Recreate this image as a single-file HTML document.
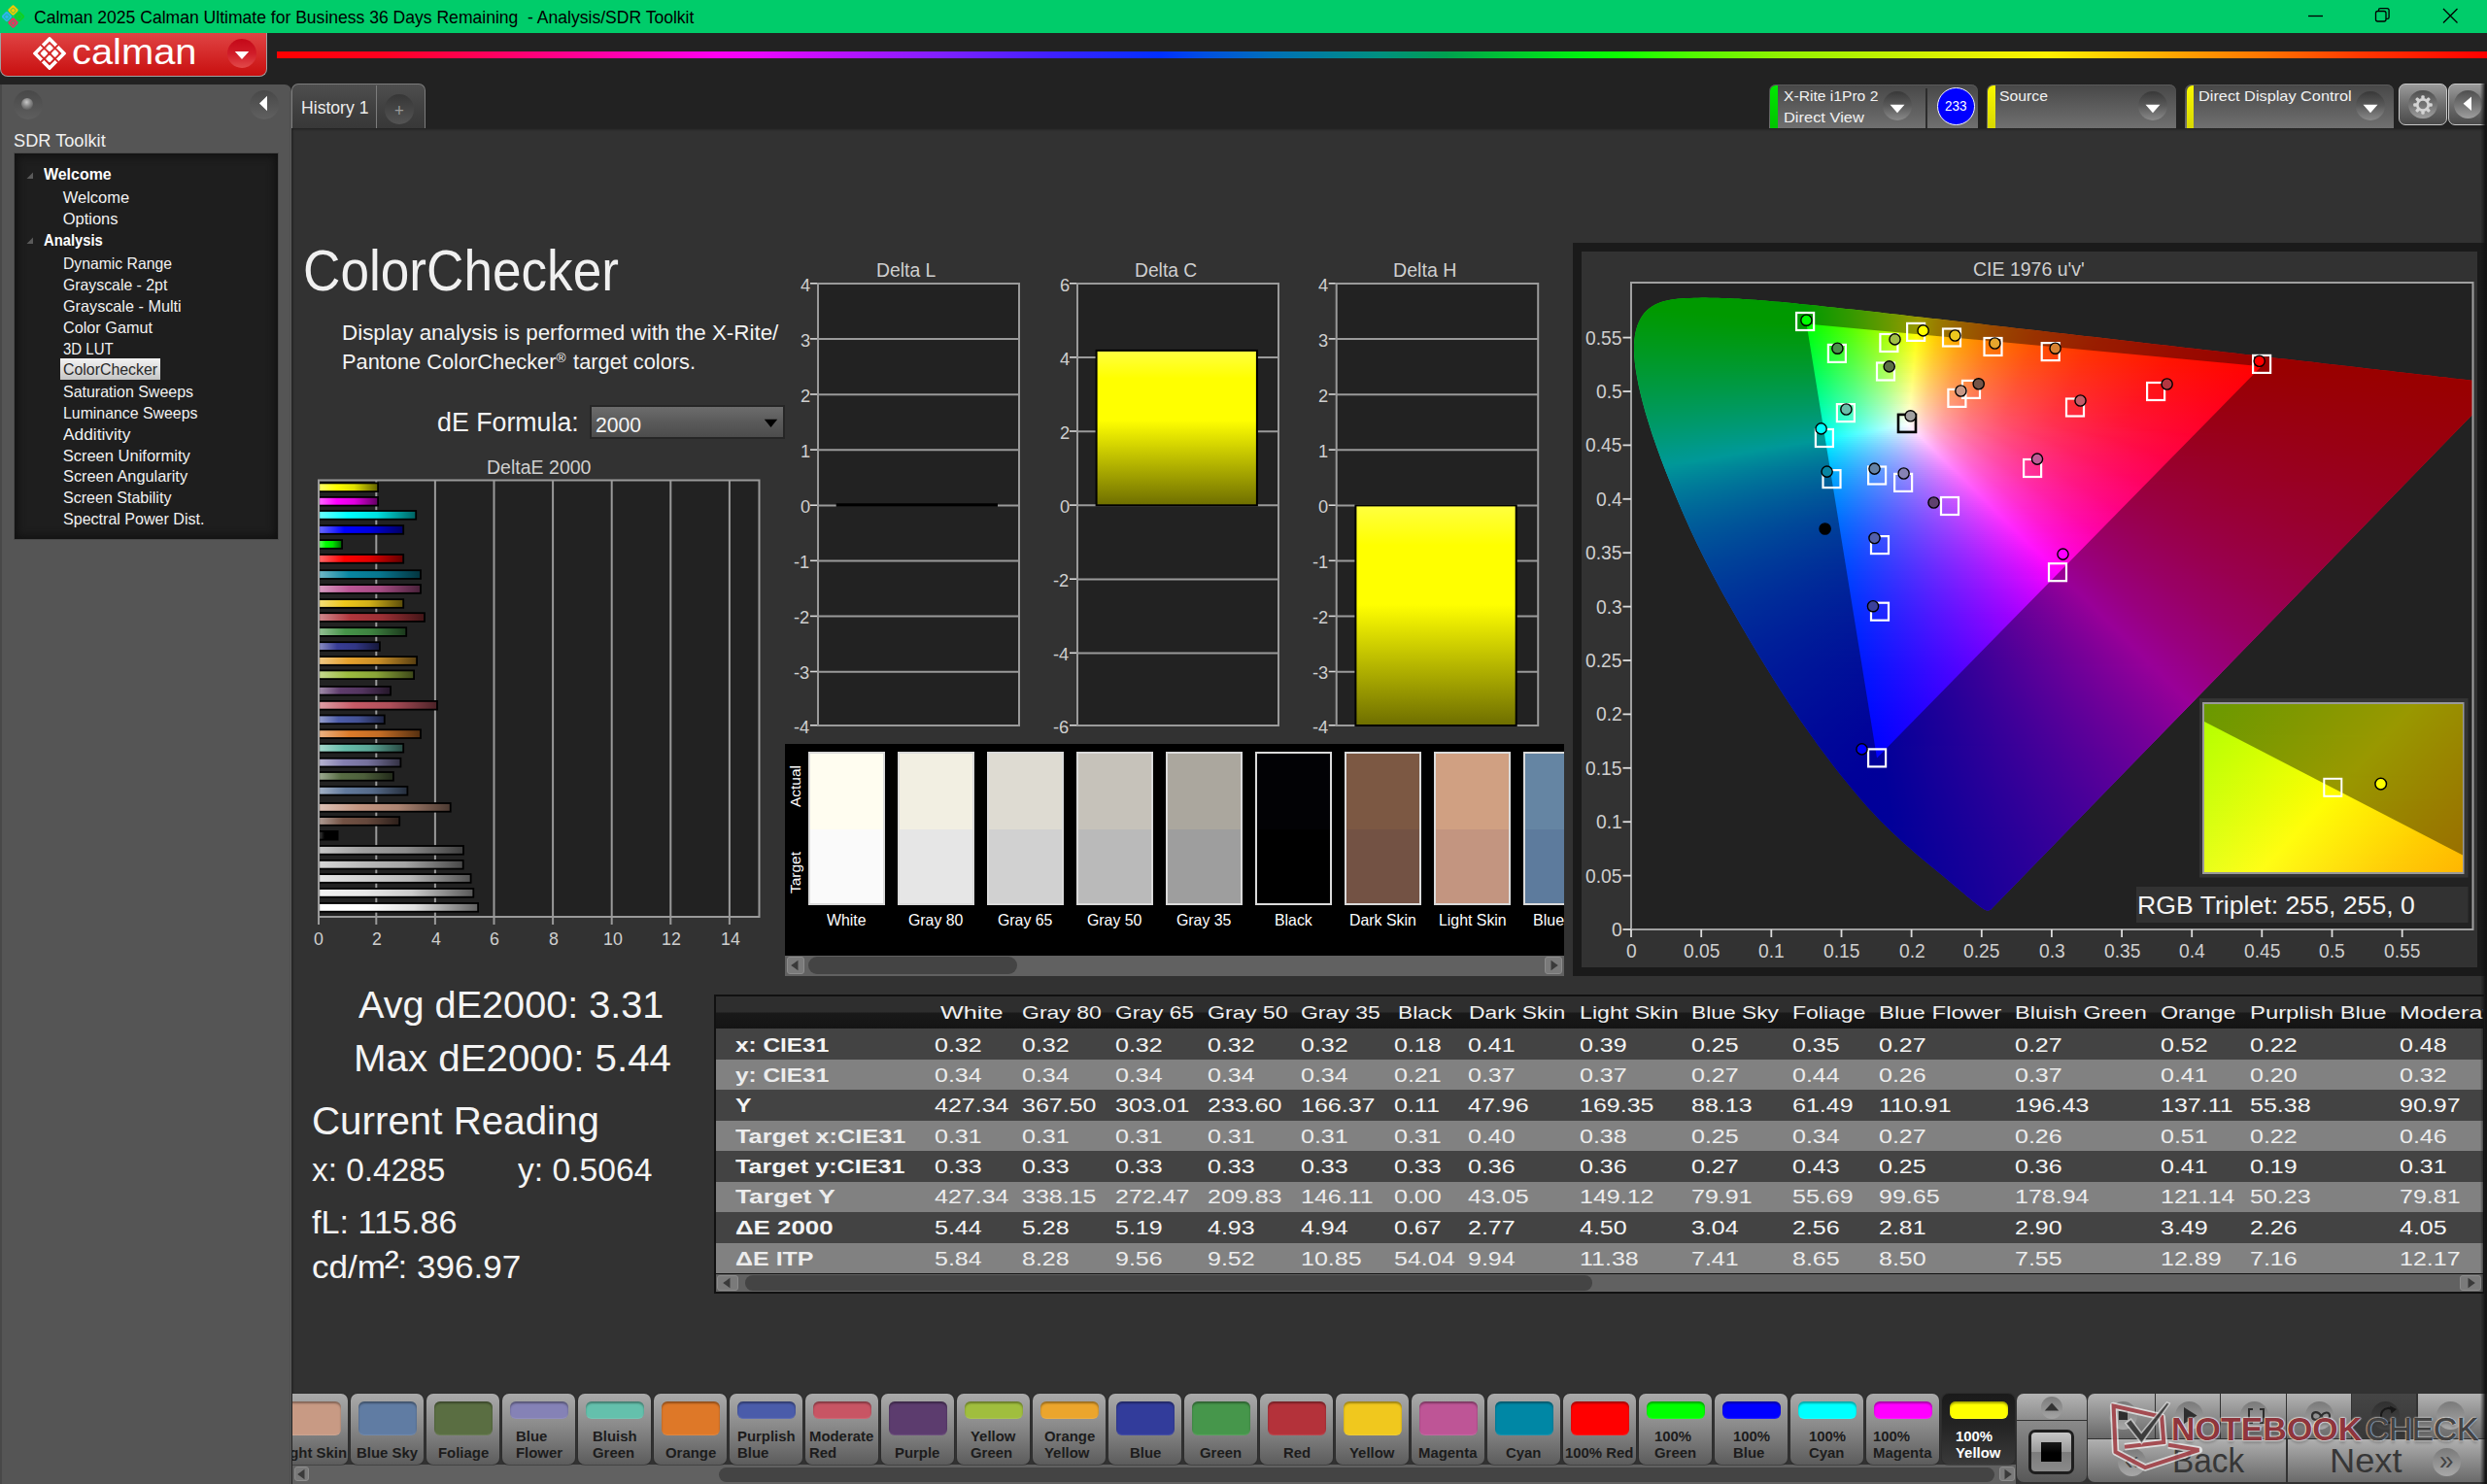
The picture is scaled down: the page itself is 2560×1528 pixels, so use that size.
<!DOCTYPE html>
<html lang="en"><head><meta charset="utf-8"><title>Calman 2025 - Analysis/SDR Toolkit</title>
<style>
html,body{margin:0;padding:0;background:#323232}
body{width:2560px;height:1528px;position:relative;overflow:hidden;font-family:"Liberation Sans",sans-serif}
#r{position:absolute;left:0;top:0;width:2560px;height:1528px;overflow:hidden}
#r div,#r svg{position:absolute}
.t{white-space:nowrap;line-height:1;transform-origin:0 0}
</style></head><body><div id="r">
<div style="left:0px;top:0px;width:2560px;height:34px;background:#00cc6a"></div>
<svg style="left:0px;top:3px" width="28" height="28" viewBox="0 0 28 28"><g transform="translate(13.5,14) scale(.92) rotate(45)"><rect x="-9.5" y="-9.5" width="9" height="9" rx="2" fill="#ffc800"/><rect x="0.5" y="-9.5" width="9" height="9" rx="2" fill="#10d020"/><rect x="-9.5" y="0.5" width="9" height="9" rx="2" fill="#30b4f0"/><rect x="0.5" y="0.5" width="9" height="9" rx="2" fill="#f03060"/><g fill="none" stroke="#00cc6a" stroke-width="1.2" opacity=".55"><rect x="-7" y="-7" width="4.5" height="4.5" rx="1"/><rect x="3" y="-7" width="4.5" height="4.5" rx="1"/><rect x="-7" y="3" width="4.5" height="4.5" rx="1"/><rect x="3" y="3" width="4.5" height="4.5" rx="1"/></g></g></svg>
<div class="t" style="left:35.00px;top:9.00px;font-size:18.5px;color:#000;transform:scaleX(0.9484);white-space:pre;">Calman 2025 Calman Ultimate for Business 36 Days Remaining  - Analysis/SDR Toolkit</div>
<svg style="left:2359.300px;top:-0.9px" width="200" height="34" viewBox="0 0 200 34" fill="none" stroke="#000" stroke-width="1.3"><path d="M17 17.5h15"/><rect x="86.5" y="12.5" width="10.5" height="10.5" rx="2"/><path d="M89.5 12.5v-1.2a1.6 1.6 0 0 1 1.6-1.6h7.2a1.8 1.8 0 0 1 1.8 1.8v7.2a1.6 1.6 0 0 1-1.6 1.6h-1.3"/><path d="M156 10l14.5 14.5M170.5 10L156 24.5"/></svg>
<div style="left:0px;top:34px;width:2560px;height:98px;background:#222"></div>
<div style="left:285px;top:53px;width:2275px;height:7px;background:linear-gradient(90deg,#ff0000 0%,#ff0020 4.8%,#ff0060 9.8%,#ff00a8 14.9%,#ff00f0 19.9%,#e808ff 21.9%,#c010ff 25%,#8020ff 30%,#4020ff 35%,#0030ff 40%,#0050e0 42%,#0070b8 45%,#009080 49.9%,#00a050 52.9%,#00c830 55.9%,#00f010 58.9%,#10ff00 61%,#50f800 64%,#90f000 68%,#b8f000 72%,#e0f000 76.1%,#fff000 80.1%,#ffd800 82.1%,#ffa000 86.2%,#ff7000 90.2%,#ff3800 94.2%,#ff1000 98.2%,#ff0000 100%)"></div>
<div style="left:0px;top:34px;width:272.8px;height:44px;background:linear-gradient(#e04444,#d62c2c 45%,#c80f0f);border:solid #a0a0a0;border-width:0 1.5px 1.5px 1px;border-radius:0 0 8px 8px"></div>
<svg style="left:31.4px;top:35.4px" width="40" height="40" viewBox="-20 -20 40 40"><g transform="rotate(45)"><path fill="#fff" fill-rule="evenodd" d="M-12.4 -11.2a1.2 1.2 0 0 1 1.2-1.2h22.400a1.2 1.2 0 0 1 1.2 1.2v22.400a1.2 1.2 0 0 1-1.2 1.2h-22.400a1.2 1.2 0 0 1-1.2-1.2zM-8.800 -8.800v17.600h17.600v-17.600z"/><g fill="#fff"><rect x="-6.900" y="-6.900" width="5.900" height="5.900" rx="1.1"/><rect x="1" y="-6.900" width="5.900" height="5.900" rx="1.1"/><rect x="-6.900" y="1" width="5.900" height="5.900" rx="1.1"/><rect x="1" y="1" width="5.900" height="5.900" rx="1.1"/></g><path d="M0-13V-8M0 13V8M-13 0H-8M13 0H8" stroke="#d42828" stroke-width="1.9"/></g></svg>
<div class="t" style="left:74.40px;top:35.60px;font-size:36.5px;color:#fff;transform:scaleX(1.0921);">calman</div>
<div style="left:233.5px;top:40px;width:30px;height:30px;border-radius:50%;background:linear-gradient(#c40818,#d01c28 50%,#e24a4a)"></div>
<svg style="left:241px;top:52px" width="16" height="10" viewBox="0 0 16 10"><path d="M0.8 1h14.4L8 9z" fill="#fff"/></svg>
<div style="left:0px;top:87px;width:300px;height:1441px;background:#555;border-radius:0 7px 0 0"></div>
<div style="left:0px;top:87px;width:2px;height:1441px;background:#484848"></div>
<div style="left:297.6px;top:94px;width:1.4px;height:1434px;background:#4e4e4e"></div>
<div style="left:299px;top:94px;width:1px;height:1434px;background:#5a5a5a"></div>
<div style="left:13.5px;top:92.5px;width:30px;height:30px;border-radius:50%;background:linear-gradient(#484848,#5e5e5e)"></div>
<div style="left:21.5px;top:100.5px;width:12.5px;height:12.5px;border-radius:50%;background:radial-gradient(circle at 45% 35%,#c8c8c8,#8a8a8a 40%,#555 85%)"></div>
<div style="left:256.5px;top:92.5px;width:30px;height:30px;border-radius:50%;background:linear-gradient(#484848,#606060)"></div>
<svg style="left:266px;top:98px" width="10" height="17" viewBox="0 0 10 17"><path d="M9 0.8v15.4L1 8.5z" fill="#fff"/></svg>
<div class="t" style="left:13.80px;top:135.00px;font-size:19px;color:#f0f0f0;transform:scaleX(0.9576);">SDR Toolkit</div>
<div style="left:14px;top:156.5px;width:273px;height:399px;background:#1e1e1e;box-shadow:inset 0 0 9px 3px #111;border:1.5px solid #4a4a4a;box-sizing:border-box"></div>
<div class="t" style="left:45.10px;top:171.30px;font-size:16.5px;color:#fff;font-weight:700;transform:scaleX(0.9661);">Welcome</div>
<svg style="left:27px;top:176.7px" width="8" height="8" viewBox="0 0 8 8"><path d="M7 0.5V7H0.5z" fill="#5a5a5a"/></svg>
<div class="t" style="left:64.70px;top:195.20px;font-size:16.5px;color:#f2f2f2;">Welcome</div>
<div class="t" style="left:64.70px;top:217.10px;font-size:16.5px;color:#f2f2f2;">Options</div>
<div class="t" style="left:45.10px;top:239.00px;font-size:16.5px;color:#fff;font-weight:700;transform:scaleX(0.8959);">Analysis</div>
<svg style="left:27px;top:244.4px" width="8" height="8" viewBox="0 0 8 8"><path d="M7 0.5V7H0.5z" fill="#5a5a5a"/></svg>
<div class="t" style="left:64.70px;top:262.90px;font-size:16.5px;color:#f2f2f2;transform:scaleX(0.9540);">Dynamic Range</div>
<div class="t" style="left:64.70px;top:284.80px;font-size:16.5px;color:#f2f2f2;transform:scaleX(0.9589);">Grayscale - 2pt</div>
<div class="t" style="left:64.70px;top:306.70px;font-size:16.5px;color:#f2f2f2;transform:scaleX(0.9826);">Grayscale - Multi</div>
<div class="t" style="left:64.70px;top:328.90px;font-size:16.5px;color:#f2f2f2;transform:scaleX(0.9829);">Color Gamut</div>
<div class="t" style="left:64.70px;top:350.80px;font-size:16.5px;color:#f2f2f2;transform:scaleX(0.9075);">3D LUT</div>
<div style="left:61.5px;top:369px;width:103.5px;height:21.5px;background:linear-gradient(#f2f2f2,#dcdcdc 55%,#c4c4c4)"></div>
<div class="t" style="left:64.70px;top:372.40px;font-size:16.5px;color:#2a2a2a;transform:scaleX(0.9628);">ColorChecker</div>
<div class="t" style="left:64.70px;top:394.90px;font-size:16.5px;color:#f2f2f2;transform:scaleX(0.9675);">Saturation Sweeps</div>
<div class="t" style="left:64.70px;top:416.80px;font-size:16.5px;color:#f2f2f2;transform:scaleX(0.9611);">Luminance Sweeps</div>
<div class="t" style="left:64.70px;top:438.70px;font-size:16.5px;color:#f2f2f2;transform:scaleX(1.0500);">Additivity</div>
<div class="t" style="left:64.70px;top:460.60px;font-size:16.5px;color:#f2f2f2;">Screen Uniformity</div>
<div class="t" style="left:64.70px;top:482.10px;font-size:16.5px;color:#f2f2f2;transform:scaleX(0.9903);">Screen Angularity</div>
<div class="t" style="left:64.70px;top:503.90px;font-size:16.5px;color:#f2f2f2;transform:scaleX(0.9717);">Screen Stability</div>
<div class="t" style="left:64.70px;top:525.80px;font-size:16.5px;color:#f2f2f2;transform:scaleX(0.9732);">Spectral Power Dist.</div>
<div style="left:299.7px;top:86.2px;width:138.8px;height:45.8px;background:linear-gradient(#4e4e4e,#3e3e3e 65%,#383838);border:1.5px solid #7c7c7c;border-bottom:none;border-radius:7px 7px 0 0;box-sizing:border-box"></div>
<div style="left:386.6px;top:88px;width:1.4px;height:44px;background:#7c7c7c"></div>
<div class="t" style="left:309.80px;top:101.20px;font-size:19px;color:#ececec;transform:scaleX(0.9267);">History 1</div>
<div style="left:395.8px;top:97px;width:30.6px;height:30.6px;border-radius:50%;background:linear-gradient(#363636,#454545 50%,#545454)"></div>
<div class="t" style="left:406.27px;top:105.60px;font-size:17.5px;color:#9a9a9a;transform:scaleX(0.9615);">+</div>
<div style="left:300px;top:132px;width:2262px;height:1398px;background:#323232;box-shadow:inset 1.5px 1.5px 1.5px #222"></div>
<div style="left:1820.8px;top:86.5px;width:215px;height:45.5px;background:linear-gradient(#474747,#5c5c5c 50%,#707070);border-radius:7px 7px 0 0;box-shadow:inset 0 1px 0 #5a5a5a"></div>
<div style="left:1822.3px;top:88px;width:7.5px;height:44px;background:linear-gradient(#00e800,#00c400);border-radius:6px 0 0 0"></div>
<div style="left:1938.2px;top:94px;width:30px;height:30px;border-radius:50%;background:linear-gradient(#383838,#5a5a5a 50%,#8a8a8a)"></div>
<svg style="left:1945.2px;top:106.5px" width="16" height="10" viewBox="0 0 16 10"><path d="M0.5 0.8h15L8 9.2z" fill="#fff"/></svg>
<div class="t" style="left:1835.50px;top:90.70px;font-size:15px;color:#f2f2f2;transform:scaleX(1.0428);">X-Rite i1Pro 2</div>
<div class="t" style="left:1835.50px;top:112.80px;font-size:15px;color:#f2f2f2;transform:scaleX(1.0957);">Direct View</div>
<div style="left:1982px;top:91px;width:1.5px;height:41px;background:#2c2c2c"></div>
<div style="left:1993.5px;top:89.5px;width:39.5px;height:39.5px;border-radius:50%;background:#0000ff;border:1.5px solid #f4f4ff;box-sizing:border-box"></div>
<div class="t" style="left:2002.22px;top:101.80px;font-size:14px;color:#fff;transform:scaleX(0.9615);">233</div>
<div style="left:2044.5px;top:86.5px;width:195.8px;height:45.5px;background:linear-gradient(#474747,#5c5c5c 50%,#707070);border-radius:7px 7px 0 0;box-shadow:inset 0 1px 0 #5a5a5a"></div>
<div style="left:2046px;top:88px;width:7.5px;height:44px;background:linear-gradient(#f8f800,#d8d800);border-radius:6px 0 0 0"></div>
<div style="left:2201px;top:94px;width:30px;height:30px;border-radius:50%;background:linear-gradient(#383838,#5a5a5a 50%,#8a8a8a)"></div>
<svg style="left:2208px;top:106.5px" width="16" height="10" viewBox="0 0 16 10"><path d="M0.5 0.8h15L8 9.2z" fill="#fff"/></svg>
<div class="t" style="left:2058.00px;top:90.70px;font-size:15px;color:#f2f2f2;transform:scaleX(1.0526);">Source</div>
<div style="left:2249px;top:86.5px;width:214.6px;height:45.5px;background:linear-gradient(#474747,#5c5c5c 50%,#707070);border-radius:7px 7px 0 0;box-shadow:inset 0 1px 0 #5a5a5a"></div>
<div style="left:2250.5px;top:88px;width:7.5px;height:44px;background:linear-gradient(#f8f800,#d8d800);border-radius:6px 0 0 0"></div>
<div style="left:2425.2px;top:94px;width:30px;height:30px;border-radius:50%;background:linear-gradient(#383838,#5a5a5a 50%,#8a8a8a)"></div>
<svg style="left:2432.2px;top:106.5px" width="16" height="10" viewBox="0 0 16 10"><path d="M0.5 0.8h15L8 9.2z" fill="#fff"/></svg>
<div class="t" style="left:2263.00px;top:90.70px;font-size:15px;color:#f2f2f2;transform:scaleX(1.0869);">Direct Display Control</div>
<div style="left:2469px;top:86.2px;width:50px;height:42.4px;border-radius:7px;border:1.5px solid #c8c8c8;box-sizing:border-box;background:linear-gradient(#9a9a9a,#6e6e6e 50%,#4a4a4a)"></div>
<div style="left:2479.2px;top:92.9px;width:29.6px;height:29.6px;border-radius:50%;background:linear-gradient(#4e4e4e,#747474 50%,#9e9e9e)"></div>
<svg style="left:2482px;top:95.700px" width="24" height="24" viewBox="-12 -12 24 24"><g fill="#d4d4d4"><rect x="-1.700" y="-9.800" width="3.400" height="4" rx="1.200" transform="rotate(0)"/><rect x="-1.700" y="-9.800" width="3.400" height="4" rx="1.200" transform="rotate(45)"/><rect x="-1.700" y="-9.800" width="3.400" height="4" rx="1.200" transform="rotate(90)"/><rect x="-1.700" y="-9.800" width="3.400" height="4" rx="1.200" transform="rotate(135)"/><rect x="-1.700" y="-9.800" width="3.400" height="4" rx="1.200" transform="rotate(180)"/><rect x="-1.700" y="-9.800" width="3.400" height="4" rx="1.200" transform="rotate(225)"/><rect x="-1.700" y="-9.800" width="3.400" height="4" rx="1.200" transform="rotate(270)"/><rect x="-1.700" y="-9.800" width="3.400" height="4" rx="1.200" transform="rotate(315)"/></g><circle r="5.700" fill="none" stroke="#d4d4d4" stroke-width="2.700"/></svg>
<div style="left:2520px;top:86.2px;width:50px;height:42.4px;border-radius:7px;border:1.5px solid #c8c8c8;box-sizing:border-box;background:linear-gradient(#9a9a9a,#6e6e6e 50%,#4a4a4a)"></div>
<div style="left:2525.5px;top:92.9px;width:29.6px;height:29.6px;border-radius:50%;background:linear-gradient(#4e4e4e,#747474 50%,#9e9e9e)"></div>
<svg style="left:2535.300px;top:99px" width="10" height="16" viewBox="0 0 10 16"><path d="M9 0.500v14.500L0.600 7.700z" fill="#fff"/></svg>
<div class="t" style="left:312.30px;top:249.20px;font-size:59.5px;color:#f0f0f0;transform:scaleX(0.8932);">ColorChecker</div>
<div class="t" style="left:352.00px;top:332.80px;font-size:21.5px;color:#f4f4f4;transform:scaleX(1.0417);">Display analysis is performed with the X-Rite/</div>
<div class="t" style="left:352.00px;top:362.70px;font-size:21.5px;color:#f4f4f4;transform:scaleX(1.0135);">Pantone ColorChecker<span style="font-size:62%;line-height:0;position:relative;top:-.5em;letter-spacing:.12em">®</span> target colors.</div>
<div class="t" style="left:450.10px;top:422.00px;font-size:27px;color:#f4f4f4;transform:scaleX(0.9912);">dE Formula:</div>
<div style="left:606.5px;top:417px;width:201px;height:34.5px;background:linear-gradient(#6c6c6c,#5a5a5a 50%,#4c4c4c);border:2px solid #262626;box-sizing:border-box"></div>
<div class="t" style="left:613.00px;top:426.60px;font-size:22.5px;color:#f4f4f4;transform:scaleX(0.9400);">2000</div>
<svg style="left:786px;top:430.5px" width="15" height="10" viewBox="0 0 15 10"><path d="M0.8 0.8h13.4L7.5 9z" fill="#000"/></svg>
<div class="t" style="left:501.30px;top:471.00px;font-size:20px;color:#cfcfcf;transform:scaleX(0.9764);">DeltaE 2000</div>
<svg style="left:0;top:0" width="2560" height="1528" viewBox="0 0 2560 1528"><defs><linearGradient id="b0"><stop offset="0" stop-color="rgb(255, 255, 107)"/><stop offset=".3" stop-color="rgb(255, 255, 0)"/><stop offset=".6" stop-color="rgb(224, 224, 0)"/><stop offset="1" stop-color="rgb(97, 97, 0)"/></linearGradient><linearGradient id="b1"><stop offset="0" stop-color="rgb(255, 107, 255)"/><stop offset=".3" stop-color="rgb(255, 0, 255)"/><stop offset=".6" stop-color="rgb(224, 0, 224)"/><stop offset="1" stop-color="rgb(97, 0, 97)"/></linearGradient><linearGradient id="b2"><stop offset="0" stop-color="rgb(107, 255, 255)"/><stop offset=".3" stop-color="rgb(0, 255, 255)"/><stop offset=".6" stop-color="rgb(0, 224, 224)"/><stop offset="1" stop-color="rgb(0, 97, 97)"/></linearGradient><linearGradient id="b3"><stop offset="0" stop-color="rgb(107, 107, 255)"/><stop offset=".3" stop-color="rgb(0, 0, 255)"/><stop offset=".6" stop-color="rgb(0, 0, 224)"/><stop offset="1" stop-color="rgb(0, 0, 97)"/></linearGradient><linearGradient id="b4"><stop offset="0" stop-color="rgb(107, 255, 107)"/><stop offset=".3" stop-color="rgb(0, 255, 0)"/><stop offset=".6" stop-color="rgb(0, 224, 0)"/><stop offset="1" stop-color="rgb(0, 97, 0)"/></linearGradient><linearGradient id="b5"><stop offset="0" stop-color="rgb(255, 107, 107)"/><stop offset=".3" stop-color="rgb(255, 0, 0)"/><stop offset=".6" stop-color="rgb(224, 0, 0)"/><stop offset="1" stop-color="rgb(97, 0, 0)"/></linearGradient><linearGradient id="b6"><stop offset="0" stop-color="rgb(112, 184, 200)"/><stop offset=".3" stop-color="rgb(8, 133, 161)"/><stop offset=".6" stop-color="rgb(7, 117, 142)"/><stop offset="1" stop-color="rgb(3, 51, 61)"/></linearGradient><linearGradient id="b7"><stop offset="0" stop-color="rgb(216, 157, 194)"/><stop offset=".3" stop-color="rgb(187, 86, 149)"/><stop offset=".6" stop-color="rgb(165, 76, 131)"/><stop offset="1" stop-color="rgb(71, 33, 57)"/></linearGradient><linearGradient id="b8"><stop offset="0" stop-color="rgb(245, 223, 123)"/><stop offset=".3" stop-color="rgb(238, 200, 27)"/><stop offset=".6" stop-color="rgb(209, 176, 24)"/><stop offset="1" stop-color="rgb(90, 76, 10)"/></linearGradient><linearGradient id="b9"><stop offset="0" stop-color="rgb(209, 138, 142)"/><stop offset=".3" stop-color="rgb(175, 54, 60)"/><stop offset=".6" stop-color="rgb(154, 48, 53)"/><stop offset="1" stop-color="rgb(66, 21, 23)"/></linearGradient><linearGradient id="b10"><stop offset="0" stop-color="rgb(148, 193, 149)"/><stop offset=".3" stop-color="rgb(70, 148, 73)"/><stop offset=".6" stop-color="rgb(62, 130, 64)"/><stop offset="1" stop-color="rgb(27, 56, 28)"/></linearGradient><linearGradient id="b11"><stop offset="0" stop-color="rgb(140, 142, 194)"/><stop offset=".3" stop-color="rgb(56, 61, 150)"/><stop offset=".6" stop-color="rgb(49, 54, 132)"/><stop offset="1" stop-color="rgb(21, 23, 57)"/></linearGradient><linearGradient id="b12"><stop offset="0" stop-color="rgb(240, 201, 134)"/><stop offset=".3" stop-color="rgb(230, 162, 46)"/><stop offset=".6" stop-color="rgb(202, 143, 40)"/><stop offset="1" stop-color="rgb(87, 62, 17)"/></linearGradient><linearGradient id="b13"><stop offset="0" stop-color="rgb(198, 216, 144)"/><stop offset=".3" stop-color="rgb(157, 188, 64)"/><stop offset=".6" stop-color="rgb(138, 165, 56)"/><stop offset="1" stop-color="rgb(60, 71, 24)"/></linearGradient><linearGradient id="b14"><stop offset="0" stop-color="rgb(162, 142, 170)"/><stop offset=".3" stop-color="rgb(94, 60, 108)"/><stop offset=".6" stop-color="rgb(83, 53, 95)"/><stop offset="1" stop-color="rgb(36, 23, 41)"/></linearGradient><linearGradient id="b15"><stop offset="0" stop-color="rgb(222, 159, 166)"/><stop offset=".3" stop-color="rgb(198, 90, 102)"/><stop offset=".6" stop-color="rgb(174, 79, 90)"/><stop offset="1" stop-color="rgb(75, 34, 39)"/></linearGradient><linearGradient id="b16"><stop offset="0" stop-color="rgb(151, 160, 205)"/><stop offset=".3" stop-color="rgb(76, 92, 168)"/><stop offset=".6" stop-color="rgb(67, 81, 148)"/><stop offset="1" stop-color="rgb(29, 35, 64)"/></linearGradient><linearGradient id="b17"><stop offset="0" stop-color="rgb(235, 178, 131)"/><stop offset=".3" stop-color="rgb(220, 123, 42)"/><stop offset=".6" stop-color="rgb(194, 108, 37)"/><stop offset="1" stop-color="rgb(84, 47, 16)"/></linearGradient><linearGradient id="b18"><stop offset="0" stop-color="rgb(167, 217, 206)"/><stop offset=".3" stop-color="rgb(103, 189, 170)"/><stop offset=".6" stop-color="rgb(91, 166, 150)"/><stop offset="1" stop-color="rgb(39, 72, 65)"/></linearGradient><linearGradient id="b19"><stop offset="0" stop-color="rgb(184, 181, 210)"/><stop offset=".3" stop-color="rgb(133, 128, 177)"/><stop offset=".6" stop-color="rgb(117, 113, 156)"/><stop offset="1" stop-color="rgb(51, 49, 67)"/></linearGradient><linearGradient id="b20"><stop offset="0" stop-color="rgb(158, 170, 146)"/><stop offset=".3" stop-color="rgb(87, 108, 67)"/><stop offset=".6" stop-color="rgb(77, 95, 59)"/><stop offset="1" stop-color="rgb(33, 41, 25)"/></linearGradient><linearGradient id="b21"><stop offset="0" stop-color="rgb(164, 178, 198)"/><stop offset=".3" stop-color="rgb(98, 122, 157)"/><stop offset=".6" stop-color="rgb(86, 107, 138)"/><stop offset="1" stop-color="rgb(37, 46, 60)"/></linearGradient><linearGradient id="b22"><stop offset="0" stop-color="rgb(221, 194, 182)"/><stop offset=".3" stop-color="rgb(196, 150, 130)"/><stop offset=".6" stop-color="rgb(172, 132, 114)"/><stop offset="1" stop-color="rgb(74, 57, 49)"/></linearGradient><linearGradient id="b23"><stop offset="0" stop-color="rgb(174, 155, 147)"/><stop offset=".3" stop-color="rgb(115, 82, 68)"/><stop offset=".6" stop-color="rgb(101, 72, 60)"/><stop offset="1" stop-color="rgb(44, 31, 26)"/></linearGradient><linearGradient id="b24"><stop offset="0" stop-color="rgb(70, 70, 70)"/><stop offset=".3" stop-color="rgb(0, 0, 0)"/><stop offset=".6" stop-color="rgb(0, 0, 0)"/><stop offset="1" stop-color="rgb(0, 0, 0)"/></linearGradient><linearGradient id="b25"><stop offset="0" stop-color="rgb(200, 200, 200)"/><stop offset=".3" stop-color="rgb(160, 160, 160)"/><stop offset=".6" stop-color="rgb(141, 141, 141)"/><stop offset="1" stop-color="rgb(61, 61, 61)"/></linearGradient><linearGradient id="b26"><stop offset="0" stop-color="rgb(215, 215, 215)"/><stop offset=".3" stop-color="rgb(186, 186, 186)"/><stop offset=".6" stop-color="rgb(164, 164, 164)"/><stop offset="1" stop-color="rgb(71, 71, 71)"/></linearGradient><linearGradient id="b27"><stop offset="0" stop-color="rgb(229, 229, 229)"/><stop offset=".3" stop-color="rgb(210, 210, 210)"/><stop offset=".6" stop-color="rgb(185, 185, 185)"/><stop offset="1" stop-color="rgb(80, 80, 80)"/></linearGradient><linearGradient id="b28"><stop offset="0" stop-color="rgb(242, 242, 242)"/><stop offset=".3" stop-color="rgb(232, 232, 232)"/><stop offset=".6" stop-color="rgb(204, 204, 204)"/><stop offset="1" stop-color="rgb(88, 88, 88)"/></linearGradient><linearGradient id="b29"><stop offset="0" stop-color="rgb(255, 255, 255)"/><stop offset=".3" stop-color="rgb(255, 255, 255)"/><stop offset=".6" stop-color="rgb(224, 224, 224)"/><stop offset="1" stop-color="rgb(97, 97, 97)"/></linearGradient></defs><rect x="328" y="494.5" width="453.5" height="449.5" fill="#222"/><g stroke="#9a9a9a" stroke-width="2"><path d="M387.3 495V952"/><path d="M447.9 495V952"/><path d="M508.5 495V952"/><path d="M569.1 495V952"/><path d="M629.7 495V952"/><path d="M690.3 495V952"/><path d="M750.9 495V952"/><path d="M328 944V952"/><rect x="328" y="494.5" width="453.5" height="449.5" fill="none"/></g><rect x="328.2" y="497.4" width="60.9" height="8.7" fill="url(#b0)" stroke="#000" stroke-width="1.8"/><rect x="328.2" y="511.9" width="60.9" height="8.7" fill="url(#b1)" stroke="#000" stroke-width="1.8"/><rect x="328.2" y="526.0" width="100.0" height="8.7" fill="url(#b2)" stroke="#000" stroke-width="1.8"/><rect x="328.2" y="541.1" width="87.0" height="8.7" fill="url(#b3)" stroke="#000" stroke-width="1.8"/><rect x="328.2" y="556.1" width="23.9" height="8.7" fill="url(#b4)" stroke="#000" stroke-width="1.8"/><rect x="328.2" y="571.0" width="87.0" height="8.7" fill="url(#b5)" stroke="#000" stroke-width="1.8"/><rect x="328.2" y="587.2" width="104.8" height="8.7" fill="url(#b6)" stroke="#000" stroke-width="1.8"/><rect x="328.2" y="602.1" width="104.8" height="8.7" fill="url(#b7)" stroke="#000" stroke-width="1.8"/><rect x="328.2" y="617.1" width="87.0" height="8.7" fill="url(#b8)" stroke="#000" stroke-width="1.8"/><rect x="328.2" y="631.2" width="108.8" height="8.7" fill="url(#b9)" stroke="#000" stroke-width="1.8"/><rect x="328.2" y="646.2" width="90.0" height="8.7" fill="url(#b10)" stroke="#000" stroke-width="1.8"/><rect x="328.2" y="661.2" width="62.7" height="8.7" fill="url(#b11)" stroke="#000" stroke-width="1.8"/><rect x="328.2" y="676.1" width="100.9" height="8.7" fill="url(#b12)" stroke="#000" stroke-width="1.8"/><rect x="328.2" y="690.4" width="97.9" height="8.7" fill="url(#b13)" stroke="#000" stroke-width="1.8"/><rect x="328.2" y="706.9" width="73.9" height="8.7" fill="url(#b14)" stroke="#000" stroke-width="1.8"/><rect x="328.2" y="721.9" width="121.8" height="8.7" fill="url(#b15)" stroke="#000" stroke-width="1.8"/><rect x="328.2" y="736.5" width="67.6" height="8.7" fill="url(#b16)" stroke="#000" stroke-width="1.8"/><rect x="328.2" y="751.3" width="104.8" height="8.7" fill="url(#b17)" stroke="#000" stroke-width="1.8"/><rect x="328.2" y="765.9" width="87.0" height="8.7" fill="url(#b18)" stroke="#000" stroke-width="1.8"/><rect x="328.2" y="780.8" width="84.2" height="8.7" fill="url(#b19)" stroke="#000" stroke-width="1.8"/><rect x="328.2" y="795.0" width="76.7" height="8.7" fill="url(#b20)" stroke="#000" stroke-width="1.8"/><rect x="328.2" y="809.9" width="91.2" height="8.7" fill="url(#b21)" stroke="#000" stroke-width="1.8"/><rect x="328.2" y="827.0" width="135.5" height="8.7" fill="url(#b22)" stroke="#000" stroke-width="1.8"/><rect x="328.2" y="841.1" width="83.0" height="8.7" fill="url(#b23)" stroke="#000" stroke-width="1.8"/><rect x="328.2" y="855.9" width="19.4" height="8.7" fill="url(#b24)" stroke="#000" stroke-width="1.8"/><rect x="328.2" y="871.0" width="148.8" height="8.7" fill="url(#b25)" stroke="#000" stroke-width="1.8"/><rect x="328.2" y="885.9" width="148.5" height="8.7" fill="url(#b26)" stroke="#000" stroke-width="1.8"/><rect x="328.2" y="900.1" width="156.4" height="8.7" fill="url(#b27)" stroke="#000" stroke-width="1.8"/><rect x="328.2" y="915.0" width="159.1" height="8.7" fill="url(#b28)" stroke="#000" stroke-width="1.8"/><rect x="328.2" y="930.0" width="163.9" height="8.7" fill="url(#b29)" stroke="#000" stroke-width="1.8"/><path d="M328 494.5V944" stroke="#9a9a9a" stroke-width="2"/></svg>
<div class="t" style="left:322.67px;top:957.60px;font-size:18.5px;color:#cfcfcf;transform:scaleX(0.9615);">0</div>
<div class="t" style="left:383.27px;top:957.60px;font-size:18.5px;color:#cfcfcf;transform:scaleX(0.9615);">2</div>
<div class="t" style="left:443.87px;top:957.60px;font-size:18.5px;color:#cfcfcf;transform:scaleX(0.9615);">4</div>
<div class="t" style="left:504.47px;top:957.60px;font-size:18.5px;color:#cfcfcf;transform:scaleX(0.9615);">6</div>
<div class="t" style="left:565.07px;top:957.60px;font-size:18.5px;color:#cfcfcf;transform:scaleX(0.9615);">8</div>
<div class="t" style="left:620.74px;top:957.60px;font-size:18.5px;color:#cfcfcf;transform:scaleX(0.9615);">10</div>
<div class="t" style="left:681.34px;top:957.60px;font-size:18.5px;color:#cfcfcf;transform:scaleX(0.9615);">12</div>
<div class="t" style="left:741.94px;top:957.60px;font-size:18.5px;color:#cfcfcf;transform:scaleX(0.9615);">14</div>
<div class="t" style="left:902.40px;top:268.30px;font-size:20.5px;color:#cfcfcf;transform:scaleX(0.9446);">Delta L</div>
<svg style="left:0;top:0" width="2560" height="1528" viewBox="0 0 2560 1528"><rect x="842" y="292" width="207" height="455" fill="#222"/><g stroke="#9a9a9a" stroke-width="2"><path d="M842 691.7H1049"/><path d="M842 634.6H1049"/><path d="M842 577.5H1049"/><path d="M842 520.4H1049"/><path d="M842 463.3H1049"/><path d="M842 406.2H1049"/><path d="M842 349.1H1049"/><rect x="842" y="292" width="207" height="455" fill="none"/></g><g stroke="#d8d8d8" stroke-width="1.6"><path d="M834 746.8H841"/><path d="M834 691.5H841"/><path d="M834 634.4H841"/><path d="M834 577.3H841"/><path d="M834 520.2H841"/><path d="M834 463.1H841"/><path d="M834 406.0H841"/><path d="M834 348.9H841"/><path d="M834 291.8H841"/></g><path d="M860.7 520H1027" stroke="#000" stroke-width="3.4"/></svg>
<div class="t" style="left:817.45px;top:738.50px;font-size:19px;color:#cfcfcf;transform:scaleX(0.9615);">-4</div>
<div class="t" style="left:817.45px;top:683.20px;font-size:19px;color:#cfcfcf;transform:scaleX(0.9615);">-3</div>
<div class="t" style="left:817.45px;top:626.10px;font-size:19px;color:#cfcfcf;transform:scaleX(0.9615);">-2</div>
<div class="t" style="left:817.45px;top:569.00px;font-size:19px;color:#cfcfcf;transform:scaleX(0.9615);">-1</div>
<div class="t" style="left:823.70px;top:511.90px;font-size:19px;color:#cfcfcf;transform:scaleX(0.9615);">0</div>
<div class="t" style="left:823.70px;top:454.80px;font-size:19px;color:#cfcfcf;transform:scaleX(0.9615);">1</div>
<div class="t" style="left:823.70px;top:397.70px;font-size:19px;color:#cfcfcf;transform:scaleX(0.9615);">2</div>
<div class="t" style="left:823.70px;top:340.60px;font-size:19px;color:#cfcfcf;transform:scaleX(0.9615);">3</div>
<div class="t" style="left:823.70px;top:283.50px;font-size:19px;color:#cfcfcf;transform:scaleX(0.9615);">4</div>
<div class="t" style="left:1168.00px;top:268.30px;font-size:20.5px;color:#cfcfcf;transform:scaleX(0.9392);">Delta C</div>
<svg style="left:0;top:0" width="2560" height="1528" viewBox="0 0 2560 1528"><rect x="1109" y="292" width="207" height="455" fill="#222"/><g stroke="#9a9a9a" stroke-width="2"><path d="M1109 672.5H1316"/><path d="M1109 596.4H1316"/><path d="M1109 520.3H1316"/><path d="M1109 444.2H1316"/><path d="M1109 368.1H1316"/><rect x="1109" y="292" width="207" height="455" fill="none"/></g><g stroke="#d8d8d8" stroke-width="1.6"><path d="M1101 746.8H1108"/><path d="M1101 672.3H1108"/><path d="M1101 596.2H1108"/><path d="M1101 520.1H1108"/><path d="M1101 444.0H1108"/><path d="M1101 367.9H1108"/><path d="M1101 291.8H1108"/></g><defs><linearGradient id="dgC" x1="0" y1="0" x2="0" y2="1"><stop offset="0" stop-color="#ffff40"/><stop offset=".18" stop-color="#ffff00"/><stop offset=".45" stop-color="#ffff00"/><stop offset="1" stop-color="#6e6e00"/></linearGradient></defs><rect x="1128.6" y="360.9" width="165.3" height="159.4" fill="url(#dgC)" stroke="#000" stroke-width="2"/></svg>
<div class="t" style="left:1084.45px;top:738.50px;font-size:19px;color:#cfcfcf;transform:scaleX(0.9615);">-6</div>
<div class="t" style="left:1084.45px;top:664.00px;font-size:19px;color:#cfcfcf;transform:scaleX(0.9615);">-4</div>
<div class="t" style="left:1084.45px;top:587.90px;font-size:19px;color:#cfcfcf;transform:scaleX(0.9615);">-2</div>
<div class="t" style="left:1090.70px;top:511.80px;font-size:19px;color:#cfcfcf;transform:scaleX(0.9615);">0</div>
<div class="t" style="left:1090.70px;top:435.70px;font-size:19px;color:#cfcfcf;transform:scaleX(0.9615);">2</div>
<div class="t" style="left:1090.70px;top:359.60px;font-size:19px;color:#cfcfcf;transform:scaleX(0.9615);">4</div>
<div class="t" style="left:1090.70px;top:283.50px;font-size:19px;color:#cfcfcf;transform:scaleX(0.9615);">6</div>
<div class="t" style="left:1434.00px;top:268.30px;font-size:20.5px;color:#cfcfcf;transform:scaleX(0.9568);">Delta H</div>
<svg style="left:0;top:0" width="2560" height="1528" viewBox="0 0 2560 1528"><rect x="1375.7" y="292" width="207.5" height="455" fill="#222"/><g stroke="#9a9a9a" stroke-width="2"><path d="M1375.7 691.7H1583.2"/><path d="M1375.7 634.6H1583.2"/><path d="M1375.7 577.5H1583.2"/><path d="M1375.7 520.4H1583.2"/><path d="M1375.7 463.3H1583.2"/><path d="M1375.7 406.2H1583.2"/><path d="M1375.7 349.1H1583.2"/><rect x="1375.7" y="292" width="207.5" height="455" fill="none"/></g><g stroke="#d8d8d8" stroke-width="1.6"><path d="M1367.7 746.8H1374.7"/><path d="M1367.7 691.5H1374.7"/><path d="M1367.7 634.4H1374.7"/><path d="M1367.7 577.3H1374.7"/><path d="M1367.7 520.2H1374.7"/><path d="M1367.7 463.1H1374.7"/><path d="M1367.7 406.0H1374.7"/><path d="M1367.7 348.9H1374.7"/><path d="M1367.7 291.8H1374.7"/></g><defs><linearGradient id="dgH" x1="0" y1="0" x2="0" y2="1"><stop offset="0" stop-color="#ffff40"/><stop offset=".18" stop-color="#ffff00"/><stop offset=".45" stop-color="#ffff00"/><stop offset="1" stop-color="#6e6e00"/></linearGradient></defs><rect x="1395.4" y="520.4" width="165.3" height="226.6" fill="url(#dgH)" stroke="#000" stroke-width="2"/></svg>
<div class="t" style="left:1351.15px;top:738.50px;font-size:19px;color:#cfcfcf;transform:scaleX(0.9615);">-4</div>
<div class="t" style="left:1351.15px;top:683.20px;font-size:19px;color:#cfcfcf;transform:scaleX(0.9615);">-3</div>
<div class="t" style="left:1351.15px;top:626.10px;font-size:19px;color:#cfcfcf;transform:scaleX(0.9615);">-2</div>
<div class="t" style="left:1351.15px;top:569.00px;font-size:19px;color:#cfcfcf;transform:scaleX(0.9615);">-1</div>
<div class="t" style="left:1357.40px;top:511.90px;font-size:19px;color:#cfcfcf;transform:scaleX(0.9615);">0</div>
<div class="t" style="left:1357.40px;top:454.80px;font-size:19px;color:#cfcfcf;transform:scaleX(0.9615);">1</div>
<div class="t" style="left:1357.40px;top:397.70px;font-size:19px;color:#cfcfcf;transform:scaleX(0.9615);">2</div>
<div class="t" style="left:1357.40px;top:340.60px;font-size:19px;color:#cfcfcf;transform:scaleX(0.9615);">3</div>
<div class="t" style="left:1357.40px;top:283.50px;font-size:19px;color:#cfcfcf;transform:scaleX(0.9615);">4</div>
<div style="left:808px;top:766px;width:801.5px;height:218px;background:#000"></div>
<div style="left:808px;top:766px;width:801.5px;height:218px;overflow:hidden">
<div style="left:24px;top:8.2px;width:79px;height:158.3px;box-sizing:border-box;border:2px solid #dadada;background:linear-gradient(rgb(255, 253, 240) 50.6%,rgb(250, 250, 250) 50.6%)"></div>
<div style="left:116px;top:8.2px;width:79px;height:158.3px;box-sizing:border-box;border:2px solid #dadada;background:linear-gradient(rgb(242, 239, 226) 50.6%,rgb(230, 230, 230) 50.6%)"></div>
<div style="left:208px;top:8.2px;width:79px;height:158.3px;box-sizing:border-box;border:2px solid #dadada;background:linear-gradient(rgb(222, 219, 210) 50.6%,rgb(209, 209, 209) 50.6%)"></div>
<div style="left:300px;top:8.2px;width:79px;height:158.3px;box-sizing:border-box;border:2px solid #dadada;background:linear-gradient(rgb(198, 194, 186) 50.6%,rgb(186, 186, 186) 50.6%)"></div>
<div style="left:392px;top:8.2px;width:79px;height:158.3px;box-sizing:border-box;border:2px solid #dadada;background:linear-gradient(rgb(171, 167, 158) 50.6%,rgb(158, 158, 158) 50.6%)"></div>
<div style="left:484px;top:8.2px;width:79px;height:158.3px;box-sizing:border-box;border:2px solid #dadada;background:linear-gradient(rgb(2, 2, 5) 50.6%,rgb(0, 0, 0) 50.6%)"></div>
<div style="left:576px;top:8.2px;width:79px;height:158.3px;box-sizing:border-box;border:2px solid #dadada;background:linear-gradient(rgb(124, 88, 67) 50.6%,rgb(115, 82, 68) 50.6%)"></div>
<div style="left:668px;top:8.2px;width:79px;height:158.3px;box-sizing:border-box;border:2px solid #dadada;background:linear-gradient(rgb(208, 160, 130) 50.6%,rgb(195, 149, 128) 50.6%)"></div>
<div style="left:760px;top:8.2px;width:79px;height:158.3px;box-sizing:border-box;border:2px solid #dadada;background:linear-gradient(rgb(101, 133, 163) 50.6%,rgb(93, 123, 157) 50.6%)"></div>
</div>
<div class="t" style="left:851.19px;top:938.90px;font-size:16.5px;color:#fff;transform:scaleX(0.9615);">White</div>
<div class="t" style="left:935.25px;top:938.90px;font-size:16.5px;color:#fff;transform:scaleX(0.9615);">Gray 80</div>
<div class="t" style="left:1027.25px;top:938.90px;font-size:16.5px;color:#fff;transform:scaleX(0.9615);">Gray 65</div>
<div class="t" style="left:1119.25px;top:938.90px;font-size:16.5px;color:#fff;transform:scaleX(0.9615);">Gray 50</div>
<div class="t" style="left:1211.25px;top:938.90px;font-size:16.5px;color:#fff;transform:scaleX(0.9615);">Gray 35</div>
<div class="t" style="left:1312.03px;top:938.90px;font-size:16.5px;color:#fff;transform:scaleX(0.9615);">Black</div>
<div class="t" style="left:1389.12px;top:938.90px;font-size:16.5px;color:#fff;transform:scaleX(0.9615);">Dark Skin</div>
<div class="t" style="left:1480.64px;top:938.90px;font-size:16.5px;color:#fff;transform:scaleX(0.9615);">Light Skin</div>
<div class="t" style="left:1577.50px;top:938.90px;font-size:16.5px;color:#fff;transform:scaleX(0.9697);">Blue</div>
<div class="t" style="left:811px;top:832.5px;font-size:15.5px;color:#fff;transform:rotate(-90deg);transform-origin:0 0;width:47px;text-align:center">Actual</div>
<div class="t" style="left:811px;top:922px;font-size:15.5px;color:#fff;transform:rotate(-90deg);transform-origin:0 0;width:47px;text-align:center">Target</div>
<div style="left:808px;top:983.5px;width:801.5px;height:21px;background:#616161"></div>
<div style="left:809.5px;top:985px;width:18px;height:18px;background:#7a7a7a;border-radius:3px;border:1px solid #8c8c8c;box-sizing:border-box"></div>
<svg style="left:812.5px;top:988px" width="10" height="12" viewBox="0 0 10 12"><path d="M8.5 0.8v10.4L1.2 6z" fill="#3a3a3a"/></svg>
<div style="left:1590px;top:985px;width:18px;height:18px;background:#7a7a7a;border-radius:3px;border:1px solid #8c8c8c;box-sizing:border-box"></div>
<svg style="left:1595px;top:988px" width="10" height="12" viewBox="0 0 10 12"><path d="M1.5 0.8v10.4L8.8 6z" fill="#3a3a3a"/></svg>
<div style="left:832px;top:985px;width:215.3px;height:18px;background:#444;border-radius:9px"></div>
<div class="t" style="left:369.40px;top:1014.80px;font-size:39px;color:#f4f4f4;transform:scaleX(1.0162);">Avg dE2000: 3.31</div>
<div class="t" style="left:364.10px;top:1069.60px;font-size:39px;color:#f4f4f4;transform:scaleX(1.0329);">Max dE2000: 5.44</div>
<div class="t" style="left:320.80px;top:1134.00px;font-size:40px;color:#f4f4f4;transform:scaleX(1.0082);">Current Reading</div>
<div class="t" style="left:320.80px;top:1186.80px;font-size:34px;color:#f4f4f4;transform:scaleX(0.9821);">x: 0.4285</div>
<div class="t" style="left:533.00px;top:1186.80px;font-size:34px;color:#f4f4f4;transform:scaleX(0.9893);">y: 0.5064</div>
<div class="t" style="left:320.80px;top:1240.80px;font-size:34px;color:#f4f4f4;transform:scaleX(1.0050);">fL: 115.86</div>
<div class="t" style="left:320.80px;top:1287.20px;font-size:34px;color:#f4f4f4;transform:scaleX(1.0332);">cd/m<span style="font-size:128%;line-height:0;position:relative;top:.04em;margin:0 -.03em">²</span>: 396.97</div>
<div style="left:735px;top:1024px;width:1822px;height:308px;background:#111"></div>
<div style="left:736.5px;top:1025.5px;width:1820.5px;height:33px;background:linear-gradient(#2e2e2e 48%,#191919 52%,#141414)"></div>
<div style="left:736.5px;top:1024px;width:1819px;height:288px;overflow:hidden">
<div style="left:0;top:34.9px;width:1822px;height:31.7px;background:#434343"></div>
<div style="left:0;top:66.5px;width:1822px;height:31.7px;background:#818181"></div>
<div style="left:0;top:98.0px;width:1822px;height:31.7px;background:#434343"></div>
<div style="left:0;top:129.6px;width:1822px;height:31.7px;background:#818181"></div>
<div style="left:0;top:161.1px;width:1822px;height:31.7px;background:#434343"></div>
<div style="left:0;top:192.7px;width:1822px;height:31.7px;background:#818181"></div>
<div style="left:0;top:224.2px;width:1822px;height:31.7px;background:#434343"></div>
<div style="left:0;top:255.8px;width:1822px;height:31.7px;background:#818181"></div>
</div>
<div style="left:0;top:0;width:2555.5px;height:1528px;overflow:hidden">
<div class="t" style="left:968.00px;top:1033.80px;font-size:18.5px;color:#f0f0f0;transform:scaleX(1.3630);">White</div>
<div class="t" style="left:1052.20px;top:1033.80px;font-size:18.5px;color:#f0f0f0;transform:scaleX(1.2441);">Gray 80</div>
<div class="t" style="left:1147.90px;top:1033.80px;font-size:18.5px;color:#f0f0f0;transform:scaleX(1.2304);">Gray 65</div>
<div class="t" style="left:1243.40px;top:1033.80px;font-size:18.5px;color:#f0f0f0;transform:scaleX(1.2563);">Gray 50</div>
<div class="t" style="left:1339.40px;top:1033.80px;font-size:18.5px;color:#f0f0f0;transform:scaleX(1.2411);">Gray 35</div>
<div class="t" style="left:1438.70px;top:1033.80px;font-size:18.5px;color:#f0f0f0;transform:scaleX(1.2308);">Black</div>
<div class="t" style="left:1511.90px;top:1033.80px;font-size:18.5px;color:#f0f0f0;transform:scaleX(1.2386);">Dark Skin</div>
<div class="t" style="left:1625.70px;top:1033.80px;font-size:18.5px;color:#f0f0f0;transform:scaleX(1.2517);">Light Skin</div>
<div class="t" style="left:1741.40px;top:1033.80px;font-size:18.5px;color:#f0f0f0;transform:scaleX(1.2329);">Blue Sky</div>
<div class="t" style="left:1844.50px;top:1033.80px;font-size:18.5px;color:#f0f0f0;transform:scaleX(1.2428);">Foliage</div>
<div class="t" style="left:1934.00px;top:1033.80px;font-size:18.5px;color:#f0f0f0;transform:scaleX(1.2931);">Blue Flower</div>
<div class="t" style="left:2074.40px;top:1033.80px;font-size:18.5px;color:#f0f0f0;transform:scaleX(1.2692);">Bluish Green</div>
<div class="t" style="left:2224.20px;top:1033.80px;font-size:18.5px;color:#f0f0f0;transform:scaleX(1.2534);">Orange</div>
<div class="t" style="left:2316.00px;top:1033.80px;font-size:18.5px;color:#f0f0f0;transform:scaleX(1.2881);">Purplish Blue</div>
<div class="t" style="left:2470.40px;top:1033.80px;font-size:18.5px;color:#f0f0f0;transform:scaleX(1.3612);">Moderate Red</div>
<div class="t" style="left:756.70px;top:1065.50px;font-size:20px;color:#f4f4f4;font-weight:700;transform:scaleX(1.2190);">x: CIE31</div>
<div class="t" style="left:961.60px;top:1065.50px;font-size:20px;color:#f4f4f4;transform:scaleX(1.2500);">0.32</div>
<div class="t" style="left:1052.20px;top:1065.50px;font-size:20px;color:#f4f4f4;transform:scaleX(1.2500);">0.32</div>
<div class="t" style="left:1147.90px;top:1065.50px;font-size:20px;color:#f4f4f4;transform:scaleX(1.2500);">0.32</div>
<div class="t" style="left:1243.40px;top:1065.50px;font-size:20px;color:#f4f4f4;transform:scaleX(1.2500);">0.32</div>
<div class="t" style="left:1339.40px;top:1065.50px;font-size:20px;color:#f4f4f4;transform:scaleX(1.2500);">0.32</div>
<div class="t" style="left:1435.00px;top:1065.50px;font-size:20px;color:#f4f4f4;transform:scaleX(1.2500);">0.18</div>
<div class="t" style="left:1511.20px;top:1065.50px;font-size:20px;color:#f4f4f4;transform:scaleX(1.2500);">0.41</div>
<div class="t" style="left:1625.70px;top:1065.50px;font-size:20px;color:#f4f4f4;transform:scaleX(1.2500);">0.39</div>
<div class="t" style="left:1741.40px;top:1065.50px;font-size:20px;color:#f4f4f4;transform:scaleX(1.2500);">0.25</div>
<div class="t" style="left:1844.50px;top:1065.50px;font-size:20px;color:#f4f4f4;transform:scaleX(1.2500);">0.35</div>
<div class="t" style="left:1934.00px;top:1065.50px;font-size:20px;color:#f4f4f4;transform:scaleX(1.2500);">0.27</div>
<div class="t" style="left:2074.40px;top:1065.50px;font-size:20px;color:#f4f4f4;transform:scaleX(1.2500);">0.27</div>
<div class="t" style="left:2224.20px;top:1065.50px;font-size:20px;color:#f4f4f4;transform:scaleX(1.2500);">0.52</div>
<div class="t" style="left:2316.00px;top:1065.50px;font-size:20px;color:#f4f4f4;transform:scaleX(1.2500);">0.22</div>
<div class="t" style="left:2470.40px;top:1065.50px;font-size:20px;color:#f4f4f4;transform:scaleX(1.2500);">0.48</div>
<div class="t" style="left:756.70px;top:1096.90px;font-size:20px;color:#ececec;font-weight:700;transform:scaleX(1.2190);">y: CIE31</div>
<div class="t" style="left:961.60px;top:1096.90px;font-size:20px;color:#ececec;transform:scaleX(1.2500);">0.34</div>
<div class="t" style="left:1052.20px;top:1096.90px;font-size:20px;color:#ececec;transform:scaleX(1.2500);">0.34</div>
<div class="t" style="left:1147.90px;top:1096.90px;font-size:20px;color:#ececec;transform:scaleX(1.2500);">0.34</div>
<div class="t" style="left:1243.40px;top:1096.90px;font-size:20px;color:#ececec;transform:scaleX(1.2500);">0.34</div>
<div class="t" style="left:1339.40px;top:1096.90px;font-size:20px;color:#ececec;transform:scaleX(1.2500);">0.34</div>
<div class="t" style="left:1435.00px;top:1096.90px;font-size:20px;color:#ececec;transform:scaleX(1.2500);">0.21</div>
<div class="t" style="left:1511.20px;top:1096.90px;font-size:20px;color:#ececec;transform:scaleX(1.2500);">0.37</div>
<div class="t" style="left:1625.70px;top:1096.90px;font-size:20px;color:#ececec;transform:scaleX(1.2500);">0.37</div>
<div class="t" style="left:1741.40px;top:1096.90px;font-size:20px;color:#ececec;transform:scaleX(1.2500);">0.27</div>
<div class="t" style="left:1844.50px;top:1096.90px;font-size:20px;color:#ececec;transform:scaleX(1.2500);">0.44</div>
<div class="t" style="left:1934.00px;top:1096.90px;font-size:20px;color:#ececec;transform:scaleX(1.2500);">0.26</div>
<div class="t" style="left:2074.40px;top:1096.90px;font-size:20px;color:#ececec;transform:scaleX(1.2500);">0.37</div>
<div class="t" style="left:2224.20px;top:1096.90px;font-size:20px;color:#ececec;transform:scaleX(1.2500);">0.41</div>
<div class="t" style="left:2316.00px;top:1096.90px;font-size:20px;color:#ececec;transform:scaleX(1.2500);">0.20</div>
<div class="t" style="left:2470.40px;top:1096.90px;font-size:20px;color:#ececec;transform:scaleX(1.2500);">0.32</div>
<div class="t" style="left:756.70px;top:1128.00px;font-size:20px;color:#f4f4f4;font-weight:700;transform:scaleX(1.2377);">Y</div>
<div class="t" style="left:961.60px;top:1128.00px;font-size:20px;color:#f4f4f4;transform:scaleX(1.2500);">427.34</div>
<div class="t" style="left:1052.20px;top:1128.00px;font-size:20px;color:#f4f4f4;transform:scaleX(1.2500);">367.50</div>
<div class="t" style="left:1147.90px;top:1128.00px;font-size:20px;color:#f4f4f4;transform:scaleX(1.2500);">303.01</div>
<div class="t" style="left:1243.40px;top:1128.00px;font-size:20px;color:#f4f4f4;transform:scaleX(1.2500);">233.60</div>
<div class="t" style="left:1339.40px;top:1128.00px;font-size:20px;color:#f4f4f4;transform:scaleX(1.2500);">166.37</div>
<div class="t" style="left:1435.00px;top:1128.00px;font-size:20px;color:#f4f4f4;transform:scaleX(1.2500);">0.11</div>
<div class="t" style="left:1511.20px;top:1128.00px;font-size:20px;color:#f4f4f4;transform:scaleX(1.2500);">47.96</div>
<div class="t" style="left:1625.70px;top:1128.00px;font-size:20px;color:#f4f4f4;transform:scaleX(1.2500);">169.35</div>
<div class="t" style="left:1741.40px;top:1128.00px;font-size:20px;color:#f4f4f4;transform:scaleX(1.2500);">88.13</div>
<div class="t" style="left:1844.50px;top:1128.00px;font-size:20px;color:#f4f4f4;transform:scaleX(1.2500);">61.49</div>
<div class="t" style="left:1934.00px;top:1128.00px;font-size:20px;color:#f4f4f4;transform:scaleX(1.2500);">110.91</div>
<div class="t" style="left:2074.40px;top:1128.00px;font-size:20px;color:#f4f4f4;transform:scaleX(1.2500);">196.43</div>
<div class="t" style="left:2224.20px;top:1128.00px;font-size:20px;color:#f4f4f4;transform:scaleX(1.2500);">137.11</div>
<div class="t" style="left:2316.00px;top:1128.00px;font-size:20px;color:#f4f4f4;transform:scaleX(1.2500);">55.38</div>
<div class="t" style="left:2470.40px;top:1128.00px;font-size:20px;color:#f4f4f4;transform:scaleX(1.2500);">90.97</div>
<div class="t" style="left:756.70px;top:1159.60px;font-size:20px;color:#ececec;font-weight:700;transform:scaleX(1.2650);">Target x:CIE31</div>
<div class="t" style="left:961.60px;top:1159.60px;font-size:20px;color:#ececec;transform:scaleX(1.2500);">0.31</div>
<div class="t" style="left:1052.20px;top:1159.60px;font-size:20px;color:#ececec;transform:scaleX(1.2500);">0.31</div>
<div class="t" style="left:1147.90px;top:1159.60px;font-size:20px;color:#ececec;transform:scaleX(1.2500);">0.31</div>
<div class="t" style="left:1243.40px;top:1159.60px;font-size:20px;color:#ececec;transform:scaleX(1.2500);">0.31</div>
<div class="t" style="left:1339.40px;top:1159.60px;font-size:20px;color:#ececec;transform:scaleX(1.2500);">0.31</div>
<div class="t" style="left:1435.00px;top:1159.60px;font-size:20px;color:#ececec;transform:scaleX(1.2500);">0.31</div>
<div class="t" style="left:1511.20px;top:1159.60px;font-size:20px;color:#ececec;transform:scaleX(1.2500);">0.40</div>
<div class="t" style="left:1625.70px;top:1159.60px;font-size:20px;color:#ececec;transform:scaleX(1.2500);">0.38</div>
<div class="t" style="left:1741.40px;top:1159.60px;font-size:20px;color:#ececec;transform:scaleX(1.2500);">0.25</div>
<div class="t" style="left:1844.50px;top:1159.60px;font-size:20px;color:#ececec;transform:scaleX(1.2500);">0.34</div>
<div class="t" style="left:1934.00px;top:1159.60px;font-size:20px;color:#ececec;transform:scaleX(1.2500);">0.27</div>
<div class="t" style="left:2074.40px;top:1159.60px;font-size:20px;color:#ececec;transform:scaleX(1.2500);">0.26</div>
<div class="t" style="left:2224.20px;top:1159.60px;font-size:20px;color:#ececec;transform:scaleX(1.2500);">0.51</div>
<div class="t" style="left:2316.00px;top:1159.60px;font-size:20px;color:#ececec;transform:scaleX(1.2500);">0.22</div>
<div class="t" style="left:2470.40px;top:1159.60px;font-size:20px;color:#ececec;transform:scaleX(1.2500);">0.46</div>
<div class="t" style="left:756.70px;top:1190.70px;font-size:20px;color:#f4f4f4;font-weight:700;transform:scaleX(1.2599);">Target y:CIE31</div>
<div class="t" style="left:961.60px;top:1190.70px;font-size:20px;color:#f4f4f4;transform:scaleX(1.2500);">0.33</div>
<div class="t" style="left:1052.20px;top:1190.70px;font-size:20px;color:#f4f4f4;transform:scaleX(1.2500);">0.33</div>
<div class="t" style="left:1147.90px;top:1190.70px;font-size:20px;color:#f4f4f4;transform:scaleX(1.2500);">0.33</div>
<div class="t" style="left:1243.40px;top:1190.70px;font-size:20px;color:#f4f4f4;transform:scaleX(1.2500);">0.33</div>
<div class="t" style="left:1339.40px;top:1190.70px;font-size:20px;color:#f4f4f4;transform:scaleX(1.2500);">0.33</div>
<div class="t" style="left:1435.00px;top:1190.70px;font-size:20px;color:#f4f4f4;transform:scaleX(1.2500);">0.33</div>
<div class="t" style="left:1511.20px;top:1190.70px;font-size:20px;color:#f4f4f4;transform:scaleX(1.2500);">0.36</div>
<div class="t" style="left:1625.70px;top:1190.70px;font-size:20px;color:#f4f4f4;transform:scaleX(1.2500);">0.36</div>
<div class="t" style="left:1741.40px;top:1190.70px;font-size:20px;color:#f4f4f4;transform:scaleX(1.2500);">0.27</div>
<div class="t" style="left:1844.50px;top:1190.70px;font-size:20px;color:#f4f4f4;transform:scaleX(1.2500);">0.43</div>
<div class="t" style="left:1934.00px;top:1190.70px;font-size:20px;color:#f4f4f4;transform:scaleX(1.2500);">0.25</div>
<div class="t" style="left:2074.40px;top:1190.70px;font-size:20px;color:#f4f4f4;transform:scaleX(1.2500);">0.36</div>
<div class="t" style="left:2224.20px;top:1190.70px;font-size:20px;color:#f4f4f4;transform:scaleX(1.2500);">0.41</div>
<div class="t" style="left:2316.00px;top:1190.70px;font-size:20px;color:#f4f4f4;transform:scaleX(1.2500);">0.19</div>
<div class="t" style="left:2470.40px;top:1190.70px;font-size:20px;color:#f4f4f4;transform:scaleX(1.2500);">0.31</div>
<div class="t" style="left:756.70px;top:1222.30px;font-size:20px;color:#ececec;font-weight:700;transform:scaleX(1.3137);">Target Y</div>
<div class="t" style="left:961.60px;top:1222.30px;font-size:20px;color:#ececec;transform:scaleX(1.2500);">427.34</div>
<div class="t" style="left:1052.20px;top:1222.30px;font-size:20px;color:#ececec;transform:scaleX(1.2500);">338.15</div>
<div class="t" style="left:1147.90px;top:1222.30px;font-size:20px;color:#ececec;transform:scaleX(1.2500);">272.47</div>
<div class="t" style="left:1243.40px;top:1222.30px;font-size:20px;color:#ececec;transform:scaleX(1.2500);">209.83</div>
<div class="t" style="left:1339.40px;top:1222.30px;font-size:20px;color:#ececec;transform:scaleX(1.2500);">146.11</div>
<div class="t" style="left:1435.00px;top:1222.30px;font-size:20px;color:#ececec;transform:scaleX(1.2500);">0.00</div>
<div class="t" style="left:1511.20px;top:1222.30px;font-size:20px;color:#ececec;transform:scaleX(1.2500);">43.05</div>
<div class="t" style="left:1625.70px;top:1222.30px;font-size:20px;color:#ececec;transform:scaleX(1.2500);">149.12</div>
<div class="t" style="left:1741.40px;top:1222.30px;font-size:20px;color:#ececec;transform:scaleX(1.2500);">79.91</div>
<div class="t" style="left:1844.50px;top:1222.30px;font-size:20px;color:#ececec;transform:scaleX(1.2500);">55.69</div>
<div class="t" style="left:1934.00px;top:1222.30px;font-size:20px;color:#ececec;transform:scaleX(1.2500);">99.65</div>
<div class="t" style="left:2074.40px;top:1222.30px;font-size:20px;color:#ececec;transform:scaleX(1.2500);">178.94</div>
<div class="t" style="left:2224.20px;top:1222.30px;font-size:20px;color:#ececec;transform:scaleX(1.2500);">121.14</div>
<div class="t" style="left:2316.00px;top:1222.30px;font-size:20px;color:#ececec;transform:scaleX(1.2500);">50.23</div>
<div class="t" style="left:2470.40px;top:1222.30px;font-size:20px;color:#ececec;transform:scaleX(1.2500);">79.81</div>
<div class="t" style="left:756.70px;top:1253.90px;font-size:20px;color:#f4f4f4;font-weight:700;transform:scaleX(1.2939);">ΔE 2000</div>
<div class="t" style="left:961.60px;top:1253.90px;font-size:20px;color:#f4f4f4;transform:scaleX(1.2500);">5.44</div>
<div class="t" style="left:1052.20px;top:1253.90px;font-size:20px;color:#f4f4f4;transform:scaleX(1.2500);">5.28</div>
<div class="t" style="left:1147.90px;top:1253.90px;font-size:20px;color:#f4f4f4;transform:scaleX(1.2500);">5.19</div>
<div class="t" style="left:1243.40px;top:1253.90px;font-size:20px;color:#f4f4f4;transform:scaleX(1.2500);">4.93</div>
<div class="t" style="left:1339.40px;top:1253.90px;font-size:20px;color:#f4f4f4;transform:scaleX(1.2500);">4.94</div>
<div class="t" style="left:1435.00px;top:1253.90px;font-size:20px;color:#f4f4f4;transform:scaleX(1.2500);">0.67</div>
<div class="t" style="left:1511.20px;top:1253.90px;font-size:20px;color:#f4f4f4;transform:scaleX(1.2500);">2.77</div>
<div class="t" style="left:1625.70px;top:1253.90px;font-size:20px;color:#f4f4f4;transform:scaleX(1.2500);">4.50</div>
<div class="t" style="left:1741.40px;top:1253.90px;font-size:20px;color:#f4f4f4;transform:scaleX(1.2500);">3.04</div>
<div class="t" style="left:1844.50px;top:1253.90px;font-size:20px;color:#f4f4f4;transform:scaleX(1.2500);">2.56</div>
<div class="t" style="left:1934.00px;top:1253.90px;font-size:20px;color:#f4f4f4;transform:scaleX(1.2500);">2.81</div>
<div class="t" style="left:2074.40px;top:1253.90px;font-size:20px;color:#f4f4f4;transform:scaleX(1.2500);">2.90</div>
<div class="t" style="left:2224.20px;top:1253.90px;font-size:20px;color:#f4f4f4;transform:scaleX(1.2500);">3.49</div>
<div class="t" style="left:2316.00px;top:1253.90px;font-size:20px;color:#f4f4f4;transform:scaleX(1.2500);">2.26</div>
<div class="t" style="left:2470.40px;top:1253.90px;font-size:20px;color:#f4f4f4;transform:scaleX(1.2500);">4.05</div>
<div class="t" style="left:756.70px;top:1285.50px;font-size:20px;color:#ececec;font-weight:700;transform:scaleX(1.2512);">ΔE ITP</div>
<div class="t" style="left:961.60px;top:1285.50px;font-size:20px;color:#ececec;transform:scaleX(1.2500);">5.84</div>
<div class="t" style="left:1052.20px;top:1285.50px;font-size:20px;color:#ececec;transform:scaleX(1.2500);">8.28</div>
<div class="t" style="left:1147.90px;top:1285.50px;font-size:20px;color:#ececec;transform:scaleX(1.2500);">9.56</div>
<div class="t" style="left:1243.40px;top:1285.50px;font-size:20px;color:#ececec;transform:scaleX(1.2500);">9.52</div>
<div class="t" style="left:1339.40px;top:1285.50px;font-size:20px;color:#ececec;transform:scaleX(1.2500);">10.85</div>
<div class="t" style="left:1435.00px;top:1285.50px;font-size:20px;color:#ececec;transform:scaleX(1.2500);">54.04</div>
<div class="t" style="left:1511.20px;top:1285.50px;font-size:20px;color:#ececec;transform:scaleX(1.2500);">9.94</div>
<div class="t" style="left:1625.70px;top:1285.50px;font-size:20px;color:#ececec;transform:scaleX(1.2500);">11.38</div>
<div class="t" style="left:1741.40px;top:1285.50px;font-size:20px;color:#ececec;transform:scaleX(1.2500);">7.41</div>
<div class="t" style="left:1844.50px;top:1285.50px;font-size:20px;color:#ececec;transform:scaleX(1.2500);">8.65</div>
<div class="t" style="left:1934.00px;top:1285.50px;font-size:20px;color:#ececec;transform:scaleX(1.2500);">8.50</div>
<div class="t" style="left:2074.40px;top:1285.50px;font-size:20px;color:#ececec;transform:scaleX(1.2500);">7.55</div>
<div class="t" style="left:2224.20px;top:1285.50px;font-size:20px;color:#ececec;transform:scaleX(1.2500);">12.89</div>
<div class="t" style="left:2316.00px;top:1285.50px;font-size:20px;color:#ececec;transform:scaleX(1.2500);">7.16</div>
<div class="t" style="left:2470.40px;top:1285.50px;font-size:20px;color:#ececec;transform:scaleX(1.2500);">12.17</div>
</div>
<div style="left:736.5px;top:1311.5px;width:1819px;height:18.5px;background:#616161"></div>
<div style="left:738px;top:1313px;width:22px;height:15.5px;background:#7a7a7a;border-radius:3px;border:1px solid #8c8c8c;box-sizing:border-box"></div>
<svg style="left:743px;top:1314.75px" width="10" height="12" viewBox="0 0 10 12"><path d="M8.5 0.8v10.4L1.2 6z" fill="#3a3a3a"/></svg>
<div style="left:2532px;top:1313px;width:22px;height:15.5px;background:#7a7a7a;border-radius:3px;border:1px solid #8c8c8c;box-sizing:border-box"></div>
<svg style="left:2539px;top:1314.75px" width="10" height="12" viewBox="0 0 10 12"><path d="M1.5 0.8v10.4L8.8 6z" fill="#3a3a3a"/></svg>
<div style="left:766.6px;top:1313px;width:872.2px;height:15.5px;background:#444;border-radius:7.75px"></div>
<div style="left:301px;top:1508px;width:1774px;height:20px;background:#616161"></div>
<div style="left:301px;top:1430px;width:1774px;height:98px;overflow:hidden">
<div style="left:-17.7px;top:5px;width:75px;height:73px;border-radius:7px;background:linear-gradient(#aaa,#8a8a8a 45%,#5c5c5c);box-shadow:0 0 0 1px rgba(40,40,40,.5)"></div>
<div style="left:-10.0px;top:12.5px;width:59.5px;height:35.7px;border-radius:6px;background:rgb(200, 154, 132);box-shadow:inset 0 2px 2px rgba(0,0,0,.35),inset 0 -1px 1px rgba(255,255,255,.12)"></div>
<div style="left:60.3px;top:5px;width:75px;height:73px;border-radius:7px;background:linear-gradient(#aaa,#8a8a8a 45%,#5c5c5c);box-shadow:0 0 0 1px rgba(40,40,40,.5)"></div>
<div style="left:68.0px;top:12.5px;width:59.5px;height:35.7px;border-radius:6px;background:rgb(96, 124, 163);box-shadow:inset 0 2px 2px rgba(0,0,0,.35),inset 0 -1px 1px rgba(255,255,255,.12)"></div>
<div style="left:138.3px;top:5px;width:75px;height:73px;border-radius:7px;background:linear-gradient(#aaa,#8a8a8a 45%,#5c5c5c);box-shadow:0 0 0 1px rgba(40,40,40,.5)"></div>
<div style="left:146.0px;top:12.5px;width:59.5px;height:35.7px;border-radius:6px;background:rgb(90, 110, 66);box-shadow:inset 0 2px 2px rgba(0,0,0,.35),inset 0 -1px 1px rgba(255,255,255,.12)"></div>
<div style="left:216.3px;top:5px;width:75px;height:73px;border-radius:7px;background:linear-gradient(#aaa,#8a8a8a 45%,#5c5c5c);box-shadow:0 0 0 1px rgba(40,40,40,.5)"></div>
<div style="left:224.0px;top:12.5px;width:59.5px;height:18px;border-radius:6px;background:rgb(133, 130, 182);box-shadow:inset 0 2px 2px rgba(0,0,0,.35),inset 0 -1px 1px rgba(255,255,255,.12)"></div>
<div style="left:294.3px;top:5px;width:75px;height:73px;border-radius:7px;background:linear-gradient(#aaa,#8a8a8a 45%,#5c5c5c);box-shadow:0 0 0 1px rgba(40,40,40,.5)"></div>
<div style="left:302.0px;top:12.5px;width:59.5px;height:18px;border-radius:6px;background:rgb(100, 192, 172);box-shadow:inset 0 2px 2px rgba(0,0,0,.35),inset 0 -1px 1px rgba(255,255,255,.12)"></div>
<div style="left:372.3px;top:5px;width:75px;height:73px;border-radius:7px;background:linear-gradient(#aaa,#8a8a8a 45%,#5c5c5c);box-shadow:0 0 0 1px rgba(40,40,40,.5)"></div>
<div style="left:380.0px;top:12.5px;width:59.5px;height:35.7px;border-radius:6px;background:rgb(222, 120, 40);box-shadow:inset 0 2px 2px rgba(0,0,0,.35),inset 0 -1px 1px rgba(255,255,255,.12)"></div>
<div style="left:450.3px;top:5px;width:75px;height:73px;border-radius:7px;background:linear-gradient(#aaa,#8a8a8a 45%,#5c5c5c);box-shadow:0 0 0 1px rgba(40,40,40,.5)"></div>
<div style="left:458.0px;top:12.5px;width:59.5px;height:18px;border-radius:6px;background:rgb(74, 92, 170);box-shadow:inset 0 2px 2px rgba(0,0,0,.35),inset 0 -1px 1px rgba(255,255,255,.12)"></div>
<div style="left:528.3px;top:5px;width:75px;height:73px;border-radius:7px;background:linear-gradient(#aaa,#8a8a8a 45%,#5c5c5c);box-shadow:0 0 0 1px rgba(40,40,40,.5)"></div>
<div style="left:536.0px;top:12.5px;width:59.5px;height:18px;border-radius:6px;background:rgb(200, 85, 100);box-shadow:inset 0 2px 2px rgba(0,0,0,.35),inset 0 -1px 1px rgba(255,255,255,.12)"></div>
<div style="left:606.3px;top:5px;width:75px;height:73px;border-radius:7px;background:linear-gradient(#aaa,#8a8a8a 45%,#5c5c5c);box-shadow:0 0 0 1px rgba(40,40,40,.5)"></div>
<div style="left:614.0px;top:12.5px;width:59.5px;height:35.7px;border-radius:6px;background:rgb(92, 60, 110);box-shadow:inset 0 2px 2px rgba(0,0,0,.35),inset 0 -1px 1px rgba(255,255,255,.12)"></div>
<div style="left:684.3px;top:5px;width:75px;height:73px;border-radius:7px;background:linear-gradient(#aaa,#8a8a8a 45%,#5c5c5c);box-shadow:0 0 0 1px rgba(40,40,40,.5)"></div>
<div style="left:692.0px;top:12.5px;width:59.5px;height:18px;border-radius:6px;background:rgb(160, 190, 62);box-shadow:inset 0 2px 2px rgba(0,0,0,.35),inset 0 -1px 1px rgba(255,255,255,.12)"></div>
<div style="left:762.3px;top:5px;width:75px;height:73px;border-radius:7px;background:linear-gradient(#aaa,#8a8a8a 45%,#5c5c5c);box-shadow:0 0 0 1px rgba(40,40,40,.5)"></div>
<div style="left:770.0px;top:12.5px;width:59.5px;height:18px;border-radius:6px;background:rgb(235, 165, 45);box-shadow:inset 0 2px 2px rgba(0,0,0,.35),inset 0 -1px 1px rgba(255,255,255,.12)"></div>
<div style="left:840.3px;top:5px;width:75px;height:73px;border-radius:7px;background:linear-gradient(#aaa,#8a8a8a 45%,#5c5c5c);box-shadow:0 0 0 1px rgba(40,40,40,.5)"></div>
<div style="left:848.0px;top:12.5px;width:59.5px;height:35.7px;border-radius:6px;background:rgb(50, 60, 155);box-shadow:inset 0 2px 2px rgba(0,0,0,.35),inset 0 -1px 1px rgba(255,255,255,.12)"></div>
<div style="left:918.3px;top:5px;width:75px;height:73px;border-radius:7px;background:linear-gradient(#aaa,#8a8a8a 45%,#5c5c5c);box-shadow:0 0 0 1px rgba(40,40,40,.5)"></div>
<div style="left:926.0px;top:12.5px;width:59.5px;height:35.7px;border-radius:6px;background:rgb(70, 150, 75);box-shadow:inset 0 2px 2px rgba(0,0,0,.35),inset 0 -1px 1px rgba(255,255,255,.12)"></div>
<div style="left:996.3px;top:5px;width:75px;height:73px;border-radius:7px;background:linear-gradient(#aaa,#8a8a8a 45%,#5c5c5c);box-shadow:0 0 0 1px rgba(40,40,40,.5)"></div>
<div style="left:1004.0px;top:12.5px;width:59.5px;height:35.7px;border-radius:6px;background:rgb(180, 50, 58);box-shadow:inset 0 2px 2px rgba(0,0,0,.35),inset 0 -1px 1px rgba(255,255,255,.12)"></div>
<div style="left:1074.3px;top:5px;width:75px;height:73px;border-radius:7px;background:linear-gradient(#aaa,#8a8a8a 45%,#5c5c5c);box-shadow:0 0 0 1px rgba(40,40,40,.5)"></div>
<div style="left:1082.0px;top:12.5px;width:59.5px;height:35.7px;border-radius:6px;background:rgb(240, 200, 30);box-shadow:inset 0 2px 2px rgba(0,0,0,.35),inset 0 -1px 1px rgba(255,255,255,.12)"></div>
<div style="left:1152.3px;top:5px;width:75px;height:73px;border-radius:7px;background:linear-gradient(#aaa,#8a8a8a 45%,#5c5c5c);box-shadow:0 0 0 1px rgba(40,40,40,.5)"></div>
<div style="left:1160.0px;top:12.5px;width:59.5px;height:35.7px;border-radius:6px;background:rgb(190, 85, 150);box-shadow:inset 0 2px 2px rgba(0,0,0,.35),inset 0 -1px 1px rgba(255,255,255,.12)"></div>
<div style="left:1230.3px;top:5px;width:75px;height:73px;border-radius:7px;background:linear-gradient(#aaa,#8a8a8a 45%,#5c5c5c);box-shadow:0 0 0 1px rgba(40,40,40,.5)"></div>
<div style="left:1238.0px;top:12.5px;width:59.5px;height:35.7px;border-radius:6px;background:rgb(0, 135, 165);box-shadow:inset 0 2px 2px rgba(0,0,0,.35),inset 0 -1px 1px rgba(255,255,255,.12)"></div>
<div style="left:1308.3px;top:5px;width:75px;height:73px;border-radius:7px;background:linear-gradient(#aaa,#8a8a8a 45%,#5c5c5c);box-shadow:0 0 0 1px rgba(40,40,40,.5)"></div>
<div style="left:1316.0px;top:12.5px;width:59.5px;height:35.7px;border-radius:6px;background:rgb(255, 0, 0);box-shadow:inset 0 2px 2px rgba(0,0,0,.35),inset 0 -1px 1px rgba(255,255,255,.12)"></div>
<div style="left:1386.3px;top:5px;width:75px;height:73px;border-radius:7px;background:linear-gradient(#aaa,#8a8a8a 45%,#5c5c5c);box-shadow:0 0 0 1px rgba(40,40,40,.5)"></div>
<div style="left:1394.0px;top:12.5px;width:59.5px;height:18px;border-radius:6px;background:rgb(0, 255, 0);box-shadow:inset 0 2px 2px rgba(0,0,0,.35),inset 0 -1px 1px rgba(255,255,255,.12)"></div>
<div style="left:1464.3px;top:5px;width:75px;height:73px;border-radius:7px;background:linear-gradient(#aaa,#8a8a8a 45%,#5c5c5c);box-shadow:0 0 0 1px rgba(40,40,40,.5)"></div>
<div style="left:1472.0px;top:12.5px;width:59.5px;height:18px;border-radius:6px;background:rgb(0, 0, 255);box-shadow:inset 0 2px 2px rgba(0,0,0,.35),inset 0 -1px 1px rgba(255,255,255,.12)"></div>
<div style="left:1542.3px;top:5px;width:75px;height:73px;border-radius:7px;background:linear-gradient(#aaa,#8a8a8a 45%,#5c5c5c);box-shadow:0 0 0 1px rgba(40,40,40,.5)"></div>
<div style="left:1550.0px;top:12.5px;width:59.5px;height:18px;border-radius:6px;background:rgb(0, 255, 255);box-shadow:inset 0 2px 2px rgba(0,0,0,.35),inset 0 -1px 1px rgba(255,255,255,.12)"></div>
<div style="left:1620.3px;top:5px;width:75px;height:73px;border-radius:7px;background:linear-gradient(#aaa,#8a8a8a 45%,#5c5c5c);box-shadow:0 0 0 1px rgba(40,40,40,.5)"></div>
<div style="left:1628.0px;top:12.5px;width:59.5px;height:18px;border-radius:6px;background:rgb(255, 0, 255);box-shadow:inset 0 2px 2px rgba(0,0,0,.35),inset 0 -1px 1px rgba(255,255,255,.12)"></div>
<div style="left:1698.3px;top:5px;width:75px;height:73px;border-radius:7px;background:linear-gradient(#1a1a1a,#242424 45%,#3a3a3a);box-shadow:0 0 0 1px rgba(40,40,40,.5)"></div>
<div style="left:1706.0px;top:12.5px;width:59.5px;height:18px;border-radius:6px;background:rgb(255, 255, 0);box-shadow:inset 0 2px 2px rgba(0,0,0,.35),inset 0 -1px 1px rgba(255,255,255,.12)"></div>
</div>
<div style="left:301px;top:1430px;width:1774px;height:98px;overflow:hidden"><div style="left:-301px;top:-1430px;width:0;height:0">
<div class="t" style="left:284.55px;top:1488.20px;font-size:15.5px;color:#1c1c1c;font-weight:700;transform:scaleX(0.9615);">Light Skin</div>
<div class="t" style="left:367.05px;top:1488.20px;font-size:15.5px;color:#1c1c1c;font-weight:700;transform:scaleX(0.9615);">Blue Sky</div>
<div class="t" style="left:450.55px;top:1488.20px;font-size:15.5px;color:#1c1c1c;font-weight:700;transform:scaleX(0.9615);">Foliage</div>
<div class="t" style="left:530.67px;top:1470.50px;font-size:15.5px;color:#1c1c1c;font-weight:700;transform:scaleX(0.9615);">Blue</div>
<div class="t" style="left:530.67px;top:1488.20px;font-size:15.5px;color:#1c1c1c;font-weight:700;transform:scaleX(0.9615);">Flower</div>
<div class="t" style="left:609.92px;top:1470.50px;font-size:15.5px;color:#1c1c1c;font-weight:700;transform:scaleX(0.9615);">Bluish</div>
<div class="t" style="left:609.92px;top:1488.20px;font-size:15.5px;color:#1c1c1c;font-weight:700;transform:scaleX(0.9615);">Green</div>
<div class="t" style="left:684.55px;top:1488.20px;font-size:15.5px;color:#1c1c1c;font-weight:700;transform:scaleX(0.9615);">Orange</div>
<div class="t" style="left:758.80px;top:1470.50px;font-size:15.5px;color:#1c1c1c;font-weight:700;transform:scaleX(0.9615);">Purplish</div>
<div class="t" style="left:758.80px;top:1488.20px;font-size:15.5px;color:#1c1c1c;font-weight:700;transform:scaleX(0.9615);">Blue</div>
<div class="t" style="left:833.42px;top:1470.50px;font-size:15.5px;color:#1c1c1c;font-weight:700;transform:scaleX(0.9615);">Moderate</div>
<div class="t" style="left:833.42px;top:1488.20px;font-size:15.5px;color:#1c1c1c;font-weight:700;transform:scaleX(0.9615);">Red</div>
<div class="t" style="left:921.42px;top:1488.20px;font-size:15.5px;color:#1c1c1c;font-weight:700;transform:scaleX(0.9615);">Purple</div>
<div class="t" style="left:999.42px;top:1470.50px;font-size:15.5px;color:#1c1c1c;font-weight:700;transform:scaleX(0.9615);">Yellow</div>
<div class="t" style="left:999.42px;top:1488.20px;font-size:15.5px;color:#1c1c1c;font-weight:700;transform:scaleX(0.9615);">Green</div>
<div class="t" style="left:1074.55px;top:1470.50px;font-size:15.5px;color:#1c1c1c;font-weight:700;transform:scaleX(0.9615);">Orange</div>
<div class="t" style="left:1074.55px;top:1488.20px;font-size:15.5px;color:#1c1c1c;font-weight:700;transform:scaleX(0.9615);">Yellow</div>
<div class="t" style="left:1162.55px;top:1488.20px;font-size:15.5px;color:#1c1c1c;font-weight:700;transform:scaleX(0.9615);">Blue</div>
<div class="t" style="left:1235.17px;top:1488.20px;font-size:15.5px;color:#1c1c1c;font-weight:700;transform:scaleX(0.9615);">Green</div>
<div class="t" style="left:1320.67px;top:1488.20px;font-size:15.5px;color:#1c1c1c;font-weight:700;transform:scaleX(0.9615);">Red</div>
<div class="t" style="left:1389.42px;top:1488.20px;font-size:15.5px;color:#1c1c1c;font-weight:700;transform:scaleX(0.9615);">Yellow</div>
<div class="t" style="left:1460.30px;top:1488.20px;font-size:15.5px;color:#1c1c1c;font-weight:700;transform:scaleX(0.9615);">Magenta</div>
<div class="t" style="left:1550.42px;top:1488.20px;font-size:15.5px;color:#1c1c1c;font-weight:700;transform:scaleX(0.9615);">Cyan</div>
<div class="t" style="left:1611.30px;top:1488.20px;font-size:15.5px;color:#1c1c1c;font-weight:700;transform:scaleX(0.9615);">100% Red</div>
<div class="t" style="left:1703.17px;top:1470.50px;font-size:15.5px;color:#1c1c1c;font-weight:700;transform:scaleX(0.9615);">100%</div>
<div class="t" style="left:1703.17px;top:1488.20px;font-size:15.5px;color:#1c1c1c;font-weight:700;transform:scaleX(0.9615);">Green</div>
<div class="t" style="left:1783.67px;top:1470.50px;font-size:15.5px;color:#1c1c1c;font-weight:700;transform:scaleX(0.9615);">100%</div>
<div class="t" style="left:1783.67px;top:1488.20px;font-size:15.5px;color:#1c1c1c;font-weight:700;transform:scaleX(0.9615);">Blue</div>
<div class="t" style="left:1861.67px;top:1470.50px;font-size:15.5px;color:#1c1c1c;font-weight:700;transform:scaleX(0.9615);">100%</div>
<div class="t" style="left:1861.67px;top:1488.20px;font-size:15.5px;color:#1c1c1c;font-weight:700;transform:scaleX(0.9615);">Cyan</div>
<div class="t" style="left:1928.30px;top:1470.50px;font-size:15.5px;color:#1c1c1c;font-weight:700;transform:scaleX(0.9615);">100%</div>
<div class="t" style="left:1928.30px;top:1488.20px;font-size:15.5px;color:#1c1c1c;font-weight:700;transform:scaleX(0.9615);">Magenta</div>
<div class="t" style="left:2013.42px;top:1470.50px;font-size:15.5px;color:#fff;font-weight:700;transform:scaleX(0.9615);">100%</div>
<div class="t" style="left:2013.42px;top:1488.20px;font-size:15.5px;color:#fff;font-weight:700;transform:scaleX(0.9615);">Yellow</div>
</div></div>
<div style="left:302.5px;top:1510px;width:15.5px;height:15px;background:#7a7a7a;border-radius:3px;border:1px solid #8c8c8c;box-sizing:border-box"></div>
<svg style="left:305px;top:1511.5px" width="10" height="12" viewBox="0 0 10 12"><path d="M8.5 0.8v10.4L1.2 6z" fill="#3a3a3a"/></svg>
<div style="left:2058.4px;top:1510px;width:15.4px;height:15px;background:#7a7a7a;border-radius:3px;border:1px solid #8c8c8c;box-sizing:border-box"></div>
<svg style="left:2062px;top:1511.5px" width="10" height="12" viewBox="0 0 10 12"><path d="M1.5 0.8v10.4L8.8 6z" fill="#3a3a3a"/></svg>
<div style="left:740px;top:1510.5px;width:1312.5px;height:15px;background:#444;border-radius:7.5px"></div>
<div style="left:2076px;top:1435px;width:71.5px;height:27px;background:linear-gradient(#b4b4b4,#8c8c8c);border-radius:7px 7px 0 0"></div>
<div style="left:2076px;top:1463px;width:71.5px;height:63px;background:linear-gradient(#8a8a8a,#585858);border-radius:0 0 7px 7px"></div>
<div style="left:2100.5px;top:1438px;width:22.5px;height:22.5px;border-radius:50%;background:linear-gradient(#7c7c7c,#a4a4a4)"></div>
<svg style="left:2104px;top:1444px" width="16" height="9" viewBox="0 0 16 9"><path d="M0.8 8.5h14.4L8 0.6z" fill="#333"/></svg>
<div style="left:2088px;top:1472px;width:47px;height:46px;border-radius:7px;border:3.5px solid #1e1e1e;box-sizing:border-box;background:linear-gradient(#c8c8c8,#9a9a9a 49%,#7c7c7c 51%,#8a8a8a)"></div>
<div style="left:2101px;top:1484.5px;width:21px;height:20.5px;background:linear-gradient(#1a1a1a,#000 55%)"></div>
<div style="left:2149px;top:1435px;width:68.8px;height:45.5px;background:linear-gradient(#b2b2b2,#8e8e8e 50%,#686868);border-radius:7px 0 0 0"></div>
<div style="left:2171.1px;top:1443px;width:29px;height:29px;border-radius:50%;background:linear-gradient(#7a7a7a,#a8a8a8)"></div>
<div style="left:2219px;top:1435px;width:66.2px;height:45.5px;background:linear-gradient(#b2b2b2,#8e8e8e 50%,#686868);border-radius:0"></div>
<div style="left:2238.5px;top:1443px;width:29px;height:29px;border-radius:50%;background:linear-gradient(#7a7a7a,#a8a8a8)"></div>
<div style="left:2286.4px;top:1435px;width:66.2px;height:45.5px;background:linear-gradient(#b2b2b2,#8e8e8e 50%,#686868);border-radius:0"></div>
<div style="left:2305.9px;top:1443px;width:29px;height:29px;border-radius:50%;background:linear-gradient(#7a7a7a,#a8a8a8)"></div>
<div style="left:2353.8px;top:1435px;width:66.2px;height:45.5px;background:linear-gradient(#b2b2b2,#8e8e8e 50%,#686868);border-radius:0"></div>
<div style="left:2373.3px;top:1443px;width:29px;height:29px;border-radius:50%;background:linear-gradient(#7a7a7a,#a8a8a8)"></div>
<div style="left:2421.2px;top:1435px;width:66.2px;height:45.5px;background:linear-gradient(#454545,#383838);border-radius:0"></div>
<div style="left:2440.7px;top:1443px;width:29px;height:29px;border-radius:50%;background:linear-gradient(#303030,#444)"></div>
<div style="left:2488.6px;top:1435px;width:80px;height:45.5px;background:linear-gradient(#b2b2b2,#8e8e8e 50%,#686868);border-radius:0"></div>
<div style="left:2508.1px;top:1443px;width:29px;height:29px;border-radius:50%;background:linear-gradient(#7a7a7a,#a8a8a8)"></div>
<div style="left:2149px;top:1482px;width:204px;height:44px;background:linear-gradient(#b0b0b0,#8c8c8c 50%,#6a6a6a);border-radius:0 0 0 7px"></div>
<div style="left:2354.5px;top:1482px;width:206px;height:44px;background:linear-gradient(#b0b0b0,#8c8c8c 50%,#6a6a6a)"></div>
<div style="left:2180px;top:1491px;width:29px;height:29px;border-radius:50%;background:linear-gradient(#7a7a7a,#a8a8a8)"></div>
<div style="left:2504px;top:1491px;width:29px;height:29px;border-radius:50%;background:linear-gradient(#7a7a7a,#a8a8a8)"></div>
<div class="t" style="left:2236.40px;top:1486.10px;font-size:35px;color:#303030;transform:scaleX(0.9526);opacity:.92;">Back</div>
<div class="t" style="left:2397.50px;top:1486.10px;font-size:35px;color:#303030;transform:scaleX(1.0361);opacity:.92;">Next</div>
<svg style="left:2px;top:0" width="2560" height="1528" viewBox="0 0 2560 1528"><g fill="#2e2e2e" stroke="none"><rect x="2179" y="1453" width="9" height="9"/><path d="M2246 1449v17l13.5-8.5z"/><path d="M2312 1450h5v2h-3v12h3v2h-5zM2329 1450h-5v2h3v12h-3v2h5zM2317.500 1462h2v2h-2zM2321.500 1462h2v2h-2z"/></g><g fill="none" stroke="#2e2e2e" stroke-width="2.2"><path d="M2387 1457.500c-3-5-9-4-9 .5s6 5.500 9 .5c3-5 9-5.500 9-.5s-6 5-9-.5z"/><path d="M2461.500 1452a7.500 7.500 0 1 0 1.500 9" stroke="#181818"/></g><path d="M2458 1447.500l7 3.500-5.500 4.500z" fill="#181818"/></svg>
<div class="t" style="left:2511.29px;top:1491.00px;font-size:27px;color:#444;transform:scaleX(0.9615);">»</div>
<div class="t" style="left:2187.29px;top:1491.00px;font-size:27px;color:#444;transform:scaleX(0.9615);">«</div>
<div style="left:1619px;top:250px;width:941px;height:755px;background:#1a1a1a"></div>
<div style="left:1628px;top:259px;width:922px;height:737px;background:#323232"></div>
<div class="t" style="left:2031.40px;top:266.70px;font-size:20px;color:#cfcfcf;transform:scaleX(0.9749);">CIE 1976 u'v'</div>
<svg style="left:0;top:0" width="2560" height="1528" viewBox="0 0 2560 1528"><defs><linearGradient id="cg0" gradientUnits="userSpaceOnUse" x1="1722" x2="1798"><stop offset="0" stop-color="#00ff00"/><stop offset="1" stop-color="#00ff00"/></linearGradient><linearGradient id="cg1" gradientUnits="userSpaceOnUse" x1="1711" x2="1825"><stop offset="0" stop-color="#00ff00"/><stop offset="1" stop-color="#00ff00"/></linearGradient><linearGradient id="cg2" gradientUnits="userSpaceOnUse" x1="1705" x2="1846"><stop offset="0" stop-color="#00ff00"/><stop offset="1" stop-color="#00ff00"/></linearGradient><linearGradient id="cg3" gradientUnits="userSpaceOnUse" x1="1701" x2="1866"><stop offset="0" stop-color="#00ff00"/><stop offset="0.9455" stop-color="#01ff00"/><stop offset="1" stop-color="#10ff00"/></linearGradient><linearGradient id="cg4" gradientUnits="userSpaceOnUse" x1="1697" x2="1885"><stop offset="0" stop-color="#00ff00"/><stop offset="0.8511" stop-color="#01ff00"/><stop offset="1" stop-color="#32ff00"/></linearGradient><linearGradient id="cg5" gradientUnits="userSpaceOnUse" x1="1694" x2="1904"><stop offset="0" stop-color="#00ff00"/><stop offset="0.781" stop-color="#02ff00"/><stop offset="1" stop-color="#56ff00"/></linearGradient><linearGradient id="cg6" gradientUnits="userSpaceOnUse" x1="1692" x2="1922"><stop offset="0" stop-color="#00ff01"/><stop offset="0.7217" stop-color="#01ff00"/><stop offset="0.9217" stop-color="#56ff00"/><stop offset="1" stop-color="#7cff00"/></linearGradient><linearGradient id="cg7" gradientUnits="userSpaceOnUse" x1="1690" x2="1940"><stop offset="0" stop-color="#00ff04"/><stop offset="0.288" stop-color="#00ff00"/><stop offset="0.672" stop-color="#01ff00"/><stop offset="0.856" stop-color="#56ff00"/><stop offset="1" stop-color="#a4ff00"/></linearGradient><linearGradient id="cg8" gradientUnits="userSpaceOnUse" x1="1689" x2="1957"><stop offset="0" stop-color="#00ff07"/><stop offset="0.3134" stop-color="#00ff00"/><stop offset="0.6343" stop-color="#02ff00"/><stop offset="0.806" stop-color="#57ff00"/><stop offset="0.9552" stop-color="#b1ff00"/><stop offset="1" stop-color="#cfff00"/></linearGradient><linearGradient id="cg9" gradientUnits="userSpaceOnUse" x1="1687" x2="1975"><stop offset="0" stop-color="#00ff09"/><stop offset="0.3646" stop-color="#00ff00"/><stop offset="0.5972" stop-color="#01ff00"/><stop offset="0.7569" stop-color="#57ff00"/><stop offset="0.8958" stop-color="#b1ff00"/><stop offset="1" stop-color="#ffff00"/></linearGradient><linearGradient id="cg10" gradientUnits="userSpaceOnUse" x1="1686" x2="1992"><stop offset="0" stop-color="#00ff0c"/><stop offset="0.4118" stop-color="#00ff00"/><stop offset="0.5654" stop-color="#01ff00"/><stop offset="0.7124" stop-color="#55ff00"/><stop offset="0.8431" stop-color="#aeff00"/><stop offset="0.9444" stop-color="#fffe00"/><stop offset="1" stop-color="#ffd400"/></linearGradient><linearGradient id="cg11" gradientUnits="userSpaceOnUse" x1="1685" x2="2010"><stop offset="0" stop-color="#00ff0e"/><stop offset="0.4554" stop-color="#00ff00"/><stop offset="0.5385" stop-color="#02ff00"/><stop offset="0.6769" stop-color="#57ff00"/><stop offset="0.7969" stop-color="#aeff00"/><stop offset="0.8923" stop-color="#fffe00"/><stop offset="0.9538" stop-color="#ffcd00"/><stop offset="1" stop-color="#ffb200"/></linearGradient><linearGradient id="cg12" gradientUnits="userSpaceOnUse" x1="1684" x2="2027"><stop offset="0" stop-color="#00ff11"/><stop offset="0.4956" stop-color="#00ff00"/><stop offset="0.5131" stop-color="#01ff00"/><stop offset="0.6443" stop-color="#56ff00"/><stop offset="0.758" stop-color="#afff00"/><stop offset="0.8484" stop-color="#fffd00"/><stop offset="0.9067" stop-color="#ffcd00"/><stop offset="0.9825" stop-color="#ffa000"/><stop offset="1" stop-color="#ff9800"/></linearGradient><linearGradient id="cg13" gradientUnits="userSpaceOnUse" x1="1683" x2="2045"><stop offset="0" stop-color="#00ff13"/><stop offset="0.489" stop-color="#01ff00"/><stop offset="0.6133" stop-color="#56ff00"/><stop offset="0.721" stop-color="#afff00"/><stop offset="0.8039" stop-color="#ffff00"/><stop offset="0.8619" stop-color="#ffcc00"/><stop offset="0.9337" stop-color="#ffa000"/><stop offset="1" stop-color="#ff8100"/></linearGradient><linearGradient id="cg14" gradientUnits="userSpaceOnUse" x1="1683" x2="2062"><stop offset="0" stop-color="#00ff16"/><stop offset="0.4697" stop-color="#02ff02"/><stop offset="0.5884" stop-color="#58ff00"/><stop offset="0.6913" stop-color="#b1ff00"/><stop offset="0.7678" stop-color="#ffff00"/><stop offset="0.8206" stop-color="#ffce00"/><stop offset="0.8865" stop-color="#ffa200"/><stop offset="0.9736" stop-color="#ff7900"/><stop offset="1" stop-color="#ff7000"/></linearGradient><linearGradient id="cg15" gradientUnits="userSpaceOnUse" x1="1682" x2="2079"><stop offset="0" stop-color="#00ff18"/><stop offset="0.4509" stop-color="#01ff06"/><stop offset="0.5617" stop-color="#56ff00"/><stop offset="0.6599" stop-color="#afff00"/><stop offset="0.7355" stop-color="#fffe00"/><stop offset="0.7859" stop-color="#ffcd00"/><stop offset="0.8489" stop-color="#ffa100"/><stop offset="0.932" stop-color="#ff7900"/><stop offset="1" stop-color="#ff6100"/></linearGradient><linearGradient id="cg16" gradientUnits="userSpaceOnUse" x1="1681" x2="2097"><stop offset="0" stop-color="#00ff1b"/><stop offset="0.4327" stop-color="#01ff09"/><stop offset="0.5385" stop-color="#55ff02"/><stop offset="0.6322" stop-color="#afff00"/><stop offset="0.7043" stop-color="#fffe00"/><stop offset="0.7524" stop-color="#ffcd00"/><stop offset="0.8125" stop-color="#ffa100"/><stop offset="0.8918" stop-color="#ff7800"/><stop offset="1" stop-color="#ff5300"/></linearGradient><linearGradient id="cg17" gradientUnits="userSpaceOnUse" x1="1681" x2="2114"><stop offset="0" stop-color="#00ff1d"/><stop offset="0.4157" stop-color="#00ff0c"/><stop offset="0.5173" stop-color="#55ff06"/><stop offset="0.6051" stop-color="#adff00"/><stop offset="0.6767" stop-color="#fffd00"/><stop offset="0.7229" stop-color="#ffcc00"/><stop offset="0.7806" stop-color="#ffa000"/><stop offset="0.8568" stop-color="#ff7800"/><stop offset="0.9607" stop-color="#ff5300"/><stop offset="1" stop-color="#ff4800"/></linearGradient><linearGradient id="cg18" gradientUnits="userSpaceOnUse" x1="1681" x2="2132"><stop offset="0" stop-color="#00ff20"/><stop offset="0.4013" stop-color="#01ff0f"/><stop offset="0.4989" stop-color="#57ff09"/><stop offset="0.5831" stop-color="#afff03"/><stop offset="0.6475" stop-color="#ffff00"/><stop offset="0.694" stop-color="#ffcb00"/><stop offset="0.7494" stop-color="#ffa000"/><stop offset="0.8226" stop-color="#ff7700"/><stop offset="0.9224" stop-color="#ff5200"/><stop offset="1" stop-color="#ff3e00"/></linearGradient><linearGradient id="cg19" gradientUnits="userSpaceOnUse" x1="1680" x2="2149"><stop offset="0" stop-color="#00ff22"/><stop offset="0.3881" stop-color="#01ff13"/><stop offset="0.4819" stop-color="#57ff0d"/><stop offset="0.5629" stop-color="#b0ff07"/><stop offset="0.6247" stop-color="#ffff02"/><stop offset="0.6652" stop-color="#ffcf00"/><stop offset="0.7186" stop-color="#ffa200"/><stop offset="0.7889" stop-color="#ff7900"/><stop offset="0.8827" stop-color="#ff5400"/><stop offset="1" stop-color="#ff3600"/></linearGradient><linearGradient id="cg20" gradientUnits="userSpaceOnUse" x1="1680" x2="2166"><stop offset="0" stop-color="#00ff25"/><stop offset="0.3745" stop-color="#00ff16"/><stop offset="0.463" stop-color="#54ff11"/><stop offset="0.5412" stop-color="#adff0b"/><stop offset="0.6029" stop-color="#fffe06"/><stop offset="0.642" stop-color="#ffcf02"/><stop offset="0.6934" stop-color="#ffa100"/><stop offset="0.7613" stop-color="#ff7800"/><stop offset="0.8519" stop-color="#ff5300"/><stop offset="0.9794" stop-color="#ff3200"/><stop offset="1" stop-color="#ff2e00"/></linearGradient><linearGradient id="cg21" gradientUnits="userSpaceOnUse" x1="1680" x2="2184"><stop offset="0" stop-color="#00ff27"/><stop offset="0.3631" stop-color="#02ff19"/><stop offset="0.4484" stop-color="#56ff15"/><stop offset="0.5238" stop-color="#b0ff0f"/><stop offset="0.5813" stop-color="#fffe0b"/><stop offset="0.619" stop-color="#ffce06"/><stop offset="0.6687" stop-color="#ffa101"/><stop offset="0.7341" stop-color="#ff7800"/><stop offset="0.8214" stop-color="#ff5300"/><stop offset="0.9444" stop-color="#ff3200"/><stop offset="1" stop-color="#ff2700"/></linearGradient><linearGradient id="cg22" gradientUnits="userSpaceOnUse" x1="1680" x2="2201"><stop offset="0" stop-color="#00ff2a"/><stop offset="0.3512" stop-color="#01ff1d"/><stop offset="0.4338" stop-color="#56ff18"/><stop offset="0.5067" stop-color="#b0ff13"/><stop offset="0.5624" stop-color="#fffd0f"/><stop offset="0.5988" stop-color="#ffcd0a"/><stop offset="0.6468" stop-color="#ffa004"/><stop offset="0.7102" stop-color="#ff7700"/><stop offset="0.7946" stop-color="#ff5200"/><stop offset="0.9136" stop-color="#ff3200"/><stop offset="1" stop-color="#ff2100"/></linearGradient><linearGradient id="cg23" gradientUnits="userSpaceOnUse" x1="1680" x2="2219"><stop offset="0" stop-color="#00ff2d"/><stop offset="0.3395" stop-color="#00ff20"/><stop offset="0.4193" stop-color="#56ff1c"/><stop offset="0.4879" stop-color="#aeff18"/><stop offset="0.5417" stop-color="#feff14"/><stop offset="0.5807" stop-color="#ffcb0d"/><stop offset="0.6271" stop-color="#ff9e07"/><stop offset="0.6883" stop-color="#ff7502"/><stop offset="0.7718" stop-color="#ff5100"/><stop offset="0.8887" stop-color="#ff3000"/><stop offset="1" stop-color="#ff1b00"/></linearGradient><linearGradient id="cg24" gradientUnits="userSpaceOnUse" x1="1680" x2="2236"><stop offset="0" stop-color="#00ff2f"/><stop offset="0.3309" stop-color="#02ff24"/><stop offset="0.4083" stop-color="#58ff20"/><stop offset="0.4748" stop-color="#b0ff1c"/><stop offset="0.5252" stop-color="#ffff18"/><stop offset="0.5594" stop-color="#ffce11"/><stop offset="0.6025" stop-color="#ffa20b"/><stop offset="0.6601" stop-color="#ff7905"/><stop offset="0.7374" stop-color="#ff5400"/><stop offset="0.8471" stop-color="#ff3300"/><stop offset="1" stop-color="#ff1600"/></linearGradient><linearGradient id="cg25" gradientUnits="userSpaceOnUse" x1="1680" x2="2253"><stop offset="0" stop-color="#00ff32"/><stop offset="0.3211" stop-color="#01ff27"/><stop offset="0.3944" stop-color="#55ff24"/><stop offset="0.459" stop-color="#aeff20"/><stop offset="0.5096" stop-color="#ffff1d"/><stop offset="0.5428" stop-color="#ffce15"/><stop offset="0.5846" stop-color="#ffa10e"/><stop offset="0.6405" stop-color="#ff7808"/><stop offset="0.7155" stop-color="#ff5402"/><stop offset="0.822" stop-color="#ff3200"/><stop offset="0.9773" stop-color="#ff1500"/><stop offset="1" stop-color="#ff1200"/></linearGradient><linearGradient id="cg26" gradientUnits="userSpaceOnUse" x1="1679" x2="2271"><stop offset="0" stop-color="#00ff34"/><stop offset="0.3125" stop-color="#00ff2b"/><stop offset="0.3834" stop-color="#55ff28"/><stop offset="0.4459" stop-color="#aeff24"/><stop offset="0.4949" stop-color="#fffe21"/><stop offset="0.527" stop-color="#ffcd19"/><stop offset="0.5676" stop-color="#ffa111"/><stop offset="0.6216" stop-color="#ff780a"/><stop offset="0.6943" stop-color="#ff5304"/><stop offset="0.7973" stop-color="#ff3200"/><stop offset="0.9476" stop-color="#ff1500"/><stop offset="1" stop-color="#ff0d00"/></linearGradient><linearGradient id="cg27" gradientUnits="userSpaceOnUse" x1="1679" x2="2288"><stop offset="0" stop-color="#00ff37"/><stop offset="0.3054" stop-color="#02ff2f"/><stop offset="0.3744" stop-color="#57ff2c"/><stop offset="0.4351" stop-color="#b1ff29"/><stop offset="0.4811" stop-color="#fffd26"/><stop offset="0.5123" stop-color="#ffcc1d"/><stop offset="0.5517" stop-color="#ffa015"/><stop offset="0.6043" stop-color="#ff770d"/><stop offset="0.6749" stop-color="#ff5306"/><stop offset="0.775" stop-color="#ff3100"/><stop offset="0.9228" stop-color="#ff1400"/><stop offset="1" stop-color="#ff0a00"/></linearGradient><linearGradient id="cg28" gradientUnits="userSpaceOnUse" x1="1680" x2="2306"><stop offset="0" stop-color="#00ff3a"/><stop offset="0.2955" stop-color="#01ff32"/><stop offset="0.3626" stop-color="#57ff30"/><stop offset="0.4201" stop-color="#aeff2d"/><stop offset="0.4649" stop-color="#feff2b"/><stop offset="0.4984" stop-color="#ffca20"/><stop offset="0.5367" stop-color="#ff9e17"/><stop offset="0.5879" stop-color="#ff760f"/><stop offset="0.6581" stop-color="#ff5108"/><stop offset="0.7572" stop-color="#ff3002"/><stop offset="0.9026" stop-color="#ff1300"/><stop offset="1" stop-color="#ff0600"/></linearGradient><linearGradient id="cg29" gradientUnits="userSpaceOnUse" x1="1680" x2="2323"><stop offset="0" stop-color="#00ff3c"/><stop offset="0.2877" stop-color="#00ff36"/><stop offset="0.353" stop-color="#56ff34"/><stop offset="0.409" stop-color="#aeff31"/><stop offset="0.4526" stop-color="#ffff2f"/><stop offset="0.4821" stop-color="#ffcd25"/><stop offset="0.5194" stop-color="#ffa11b"/><stop offset="0.5677" stop-color="#ff7813"/><stop offset="0.6345" stop-color="#ff530b"/><stop offset="0.7278" stop-color="#ff3204"/><stop offset="0.8647" stop-color="#ff1500"/><stop offset="1" stop-color="#ff0300"/></linearGradient><linearGradient id="cg30" gradientUnits="userSpaceOnUse" x1="1680" x2="2341"><stop offset="0" stop-color="#00ff3f"/><stop offset="0.2814" stop-color="#02ff3a"/><stop offset="0.3434" stop-color="#56ff38"/><stop offset="0.3979" stop-color="#aeff36"/><stop offset="0.4402" stop-color="#ffff34"/><stop offset="0.4675" stop-color="#ffcf29"/><stop offset="0.5023" stop-color="#ffa31f"/><stop offset="0.5492" stop-color="#ff7a16"/><stop offset="0.6127" stop-color="#ff550d"/><stop offset="0.702" stop-color="#ff3306"/><stop offset="0.8321" stop-color="#ff1600"/><stop offset="1" stop-color="#ff0000"/></linearGradient><linearGradient id="cg31" gradientUnits="userSpaceOnUse" x1="1680" x2="2358"><stop offset="0" stop-color="#00ff42"/><stop offset="0.2743" stop-color="#01ff3d"/><stop offset="0.3348" stop-color="#56ff3c"/><stop offset="0.3879" stop-color="#afff3a"/><stop offset="0.4292" stop-color="#fffe39"/><stop offset="0.4558" stop-color="#ffce2d"/><stop offset="0.4897" stop-color="#ffa323"/><stop offset="0.5354" stop-color="#ff7919"/><stop offset="0.5973" stop-color="#ff5410"/><stop offset="0.6844" stop-color="#ff3308"/><stop offset="0.8112" stop-color="#ff1501"/><stop offset="0.9764" stop-color="#ff0000"/><stop offset="1" stop-color="#ff0000"/></linearGradient><linearGradient id="cg32" gradientUnits="userSpaceOnUse" x1="1680" x2="2375"><stop offset="0" stop-color="#00ff44"/><stop offset="0.2676" stop-color="#01ff41"/><stop offset="0.3266" stop-color="#55ff40"/><stop offset="0.3784" stop-color="#afff3f"/><stop offset="0.4187" stop-color="#fffe3d"/><stop offset="0.4446" stop-color="#ffce31"/><stop offset="0.4777" stop-color="#ffa226"/><stop offset="0.5223" stop-color="#ff791b"/><stop offset="0.5827" stop-color="#ff5312"/><stop offset="0.6676" stop-color="#ff3209"/><stop offset="0.7914" stop-color="#ff1502"/><stop offset="0.9496" stop-color="#ff0000"/><stop offset="1" stop-color="#ff0000"/></linearGradient><linearGradient id="cg33" gradientUnits="userSpaceOnUse" x1="1680" x2="2393"><stop offset="0" stop-color="#00ff47"/><stop offset="0.2623" stop-color="#02ff45"/><stop offset="0.3198" stop-color="#57ff44"/><stop offset="0.3703" stop-color="#b2ff43"/><stop offset="0.4081" stop-color="#fffd42"/><stop offset="0.4334" stop-color="#ffcd35"/><stop offset="0.4656" stop-color="#ffa129"/><stop offset="0.5091" stop-color="#ff781e"/><stop offset="0.568" stop-color="#ff5314"/><stop offset="0.6508" stop-color="#ff320b"/><stop offset="0.7728" stop-color="#ff1403"/><stop offset="0.9243" stop-color="#ff0000"/><stop offset="1" stop-color="#ff0000"/></linearGradient><linearGradient id="cg34" gradientUnits="userSpaceOnUse" x1="1680" x2="2410"><stop offset="0" stop-color="#00ff4a"/><stop offset="0.2562" stop-color="#01ff49"/><stop offset="0.3123" stop-color="#57ff48"/><stop offset="0.3603" stop-color="#afff48"/><stop offset="0.3973" stop-color="#feff47"/><stop offset="0.4233" stop-color="#ffcd39"/><stop offset="0.4548" stop-color="#ffa12d"/><stop offset="0.4973" stop-color="#ff7821"/><stop offset="0.5548" stop-color="#ff5216"/><stop offset="0.6356" stop-color="#ff310d"/><stop offset="0.7548" stop-color="#ff1404"/><stop offset="0.9" stop-color="#ff0000"/><stop offset="1" stop-color="#ff0000"/></linearGradient><linearGradient id="cg35" gradientUnits="userSpaceOnUse" x1="1681" x2="2428"><stop offset="0" stop-color="#00ff4d"/><stop offset="0.249" stop-color="#01ff4d"/><stop offset="0.3025" stop-color="#55ff4d"/><stop offset="0.3494" stop-color="#acff4c"/><stop offset="0.3869" stop-color="#ffff4c"/><stop offset="0.411" stop-color="#ffce3e"/><stop offset="0.4418" stop-color="#ffa230"/><stop offset="0.4819" stop-color="#ff7924"/><stop offset="0.5368" stop-color="#ff5419"/><stop offset="0.6145" stop-color="#ff330f"/><stop offset="0.7282" stop-color="#ff1506"/><stop offset="0.8742" stop-color="#ff0000"/><stop offset="1" stop-color="#ff0000"/></linearGradient><linearGradient id="cg36" gradientUnits="userSpaceOnUse" x1="1681" x2="2445"><stop offset="0" stop-color="#00ff4f"/><stop offset="0.2448" stop-color="#02ff50"/><stop offset="0.2971" stop-color="#57ff51"/><stop offset="0.3429" stop-color="#afff51"/><stop offset="0.3783" stop-color="#fffe51"/><stop offset="0.4018" stop-color="#ffce42"/><stop offset="0.4319" stop-color="#ffa134"/><stop offset="0.4712" stop-color="#ff7927"/><stop offset="0.5249" stop-color="#ff541b"/><stop offset="0.6008" stop-color="#ff3211"/><stop offset="0.712" stop-color="#ff1508"/><stop offset="0.8521" stop-color="#ff0001"/><stop offset="1" stop-color="#ff0000"/></linearGradient><linearGradient id="cg37" gradientUnits="userSpaceOnUse" x1="1681" x2="2462"><stop offset="0" stop-color="#00ff52"/><stop offset="0.2394" stop-color="#01ff54"/><stop offset="0.2907" stop-color="#56ff55"/><stop offset="0.3355" stop-color="#b0ff56"/><stop offset="0.37" stop-color="#fffe56"/><stop offset="0.3931" stop-color="#ffcd46"/><stop offset="0.4225" stop-color="#ffa037"/><stop offset="0.4609" stop-color="#ff782a"/><stop offset="0.5134" stop-color="#ff531e"/><stop offset="0.5877" stop-color="#ff3213"/><stop offset="0.6965" stop-color="#ff1409"/><stop offset="0.8323" stop-color="#ff0002"/><stop offset="1" stop-color="#ff0000"/></linearGradient><linearGradient id="cg38" gradientUnits="userSpaceOnUse" x1="1681" x2="2480"><stop offset="0" stop-color="#00ff55"/><stop offset="0.234" stop-color="#01ff58"/><stop offset="0.2841" stop-color="#56ff5a"/><stop offset="0.3279" stop-color="#b0ff5b"/><stop offset="0.3617" stop-color="#fffd5b"/><stop offset="0.3842" stop-color="#ffcc4a"/><stop offset="0.413" stop-color="#ffa03b"/><stop offset="0.4506" stop-color="#ff772d"/><stop offset="0.5019" stop-color="#ff5220"/><stop offset="0.5745" stop-color="#ff3114"/><stop offset="0.6809" stop-color="#ff140a"/><stop offset="0.811" stop-color="#ff0003"/><stop offset="1" stop-color="#ff0000"/></linearGradient><linearGradient id="cg39" gradientUnits="userSpaceOnUse" x1="1682" x2="2497"><stop offset="0" stop-color="#00ff58"/><stop offset="0.2294" stop-color="#02ff5c"/><stop offset="0.2785" stop-color="#58ff5e"/><stop offset="0.3202" stop-color="#b0ff60"/><stop offset="0.3521" stop-color="#feff61"/><stop offset="0.3755" stop-color="#ffcc4e"/><stop offset="0.4037" stop-color="#ff9f3e"/><stop offset="0.4405" stop-color="#ff772f"/><stop offset="0.4908" stop-color="#ff5222"/><stop offset="0.562" stop-color="#ff3116"/><stop offset="0.6663" stop-color="#ff140c"/><stop offset="0.7926" stop-color="#ff0004"/><stop offset="0.9951" stop-color="#ff0000"/><stop offset="1" stop-color="#ff0000"/></linearGradient><linearGradient id="cg40" gradientUnits="userSpaceOnUse" x1="1682" x2="2515"><stop offset="0" stop-color="#00ff5b"/><stop offset="0.2245" stop-color="#01ff61"/><stop offset="0.2713" stop-color="#56ff62"/><stop offset="0.3121" stop-color="#adff64"/><stop offset="0.3445" stop-color="#ffff66"/><stop offset="0.3661" stop-color="#ffcd53"/><stop offset="0.3926" stop-color="#ffa243"/><stop offset="0.4286" stop-color="#ff7833"/><stop offset="0.4766" stop-color="#ff5425"/><stop offset="0.545" stop-color="#ff3219"/><stop offset="0.6447" stop-color="#ff150e"/><stop offset="0.7707" stop-color="#ff0005"/><stop offset="0.9796" stop-color="#ff0000"/><stop offset="1" stop-color="#ff0000"/></linearGradient><linearGradient id="cg41" gradientUnits="userSpaceOnUse" x1="1682" x2="2532"><stop offset="0" stop-color="#00ff5e"/><stop offset="0.22" stop-color="#01ff65"/><stop offset="0.2659" stop-color="#55ff67"/><stop offset="0.3059" stop-color="#adff69"/><stop offset="0.3376" stop-color="#ffff6b"/><stop offset="0.3576" stop-color="#ffcf59"/><stop offset="0.3835" stop-color="#ffa347"/><stop offset="0.4176" stop-color="#ff7a37"/><stop offset="0.4647" stop-color="#ff5428"/><stop offset="0.5306" stop-color="#ff331b"/><stop offset="0.6271" stop-color="#ff160f"/><stop offset="0.7529" stop-color="#ff0006"/><stop offset="0.9776" stop-color="#ff0000"/><stop offset="1" stop-color="#ff0000"/></linearGradient><linearGradient id="cg42" gradientUnits="userSpaceOnUse" x1="1683" x2="2547"><stop offset="0" stop-color="#00ff61"/><stop offset="0.2153" stop-color="#00ff69"/><stop offset="0.2604" stop-color="#55ff6b"/><stop offset="0.2998" stop-color="#adff6e"/><stop offset="0.331" stop-color="#fffe70"/><stop offset="0.3507" stop-color="#ffce5d"/><stop offset="0.3762" stop-color="#ffa24b"/><stop offset="0.4097" stop-color="#ff793a"/><stop offset="0.456" stop-color="#ff542b"/><stop offset="0.5208" stop-color="#ff331d"/><stop offset="0.6157" stop-color="#ff1511"/><stop offset="0.7373" stop-color="#ff0008"/><stop offset="0.9803" stop-color="#ff0000"/><stop offset="1" stop-color="#ff0000"/></linearGradient><linearGradient id="cg43" gradientUnits="userSpaceOnUse" x1="1683" x2="2547"><stop offset="0" stop-color="#00ff64"/><stop offset="0.2164" stop-color="#01ff6d"/><stop offset="0.2616" stop-color="#57ff70"/><stop offset="0.3009" stop-color="#b0ff73"/><stop offset="0.331" stop-color="#fffd75"/><stop offset="0.3507" stop-color="#ffce61"/><stop offset="0.3762" stop-color="#ffa14e"/><stop offset="0.4097" stop-color="#ff793d"/><stop offset="0.456" stop-color="#ff532d"/><stop offset="0.5208" stop-color="#ff321f"/><stop offset="0.6157" stop-color="#ff1512"/><stop offset="0.7361" stop-color="#ff0009"/><stop offset="1" stop-color="#ff0000"/></linearGradient><linearGradient id="cg44" gradientUnits="userSpaceOnUse" x1="1684" x2="2547"><stop offset="0" stop-color="#00ff66"/><stop offset="0.2155" stop-color="#01ff71"/><stop offset="0.2607" stop-color="#57ff75"/><stop offset="0.3001" stop-color="#b1ff78"/><stop offset="0.3291" stop-color="#feff7c"/><stop offset="0.3511" stop-color="#ffcb64"/><stop offset="0.3766" stop-color="#ff9f51"/><stop offset="0.4102" stop-color="#ff773f"/><stop offset="0.4565" stop-color="#ff522f"/><stop offset="0.5214" stop-color="#ff3120"/><stop offset="0.6176" stop-color="#ff1413"/><stop offset="0.7335" stop-color="#ff000a"/><stop offset="1" stop-color="#ff0000"/></linearGradient><linearGradient id="cg45" gradientUnits="userSpaceOnUse" x1="1684" x2="2547"><stop offset="0" stop-color="#00ff69"/><stop offset="0.2155" stop-color="#00ff76"/><stop offset="0.2596" stop-color="#54ff79"/><stop offset="0.299" stop-color="#aeff7e"/><stop offset="0.3291" stop-color="#ffff81"/><stop offset="0.3499" stop-color="#ffcc6a"/><stop offset="0.3754" stop-color="#ffa055"/><stop offset="0.409" stop-color="#ff7743"/><stop offset="0.4554" stop-color="#ff5232"/><stop offset="0.5203" stop-color="#ff3122"/><stop offset="0.6153" stop-color="#ff1415"/><stop offset="0.7312" stop-color="#ff000b"/><stop offset="1" stop-color="#ff0000"/></linearGradient><linearGradient id="cg46" gradientUnits="userSpaceOnUse" x1="1684" x2="2547"><stop offset="0" stop-color="#00ff6c"/><stop offset="0.2167" stop-color="#02ff7a"/><stop offset="0.2607" stop-color="#56ff7e"/><stop offset="0.299" stop-color="#aeff83"/><stop offset="0.3291" stop-color="#ffff87"/><stop offset="0.3488" stop-color="#ffce6f"/><stop offset="0.3743" stop-color="#ffa15a"/><stop offset="0.4079" stop-color="#ff7846"/><stop offset="0.4531" stop-color="#ff5335"/><stop offset="0.5168" stop-color="#ff3225"/><stop offset="0.6107" stop-color="#ff1517"/><stop offset="0.7289" stop-color="#ff000c"/><stop offset="1" stop-color="#ff0000"/></linearGradient><linearGradient id="cg47" gradientUnits="userSpaceOnUse" x1="1685" x2="2547"><stop offset="0" stop-color="#00ff6f"/><stop offset="0.2158" stop-color="#01ff7e"/><stop offset="0.2599" stop-color="#56ff83"/><stop offset="0.2981" stop-color="#aeff88"/><stop offset="0.3283" stop-color="#fffe8c"/><stop offset="0.348" stop-color="#ffcd74"/><stop offset="0.3735" stop-color="#ffa05e"/><stop offset="0.4072" stop-color="#ff7749"/><stop offset="0.4524" stop-color="#ff5337"/><stop offset="0.5162" stop-color="#ff3127"/><stop offset="0.6102" stop-color="#ff1418"/><stop offset="0.7262" stop-color="#ff000e"/><stop offset="1" stop-color="#ff0001"/></linearGradient><linearGradient id="cg48" gradientUnits="userSpaceOnUse" x1="1685" x2="2547"><stop offset="0" stop-color="#00ff73"/><stop offset="0.2158" stop-color="#00ff83"/><stop offset="0.2599" stop-color="#56ff88"/><stop offset="0.2981" stop-color="#aeff8d"/><stop offset="0.3283" stop-color="#fffd91"/><stop offset="0.348" stop-color="#ffcd78"/><stop offset="0.3735" stop-color="#ffa061"/><stop offset="0.4072" stop-color="#ff774c"/><stop offset="0.4524" stop-color="#ff523a"/><stop offset="0.5162" stop-color="#ff3129"/><stop offset="0.6102" stop-color="#ff141a"/><stop offset="0.7239" stop-color="#ff000f"/><stop offset="1" stop-color="#ff0002"/></linearGradient><linearGradient id="cg49" gradientUnits="userSpaceOnUse" x1="1686" x2="2547"><stop offset="0" stop-color="#00ff76"/><stop offset="0.216" stop-color="#02ff87"/><stop offset="0.2602" stop-color="#58ff8d"/><stop offset="0.2985" stop-color="#b1ff93"/><stop offset="0.3264" stop-color="#feff98"/><stop offset="0.3484" stop-color="#ffca7c"/><stop offset="0.374" stop-color="#ff9d64"/><stop offset="0.4077" stop-color="#ff754f"/><stop offset="0.4541" stop-color="#ff503b"/><stop offset="0.5192" stop-color="#ff2f2a"/><stop offset="0.6156" stop-color="#ff121a"/><stop offset="0.7236" stop-color="#ff0010"/><stop offset="1" stop-color="#ff0003"/></linearGradient><linearGradient id="cg50" gradientUnits="userSpaceOnUse" x1="1686" x2="2547"><stop offset="0" stop-color="#00ff79"/><stop offset="0.216" stop-color="#01ff8c"/><stop offset="0.259" stop-color="#55ff92"/><stop offset="0.2973" stop-color="#afff98"/><stop offset="0.3264" stop-color="#feff9e"/><stop offset="0.3473" stop-color="#ffcb81"/><stop offset="0.3728" stop-color="#ff9e69"/><stop offset="0.4065" stop-color="#ff7552"/><stop offset="0.4518" stop-color="#ff513e"/><stop offset="0.5157" stop-color="#ff302c"/><stop offset="0.6098" stop-color="#ff131c"/><stop offset="0.7201" stop-color="#ff0011"/><stop offset="1" stop-color="#ff0003"/></linearGradient><linearGradient id="cg51" gradientUnits="userSpaceOnUse" x1="1687" x2="2547"><stop offset="0" stop-color="#00ff7c"/><stop offset="0.2151" stop-color="#00ff90"/><stop offset="0.2581" stop-color="#55ff97"/><stop offset="0.2953" stop-color="#acff9d"/><stop offset="0.3256" stop-color="#ffffa4"/><stop offset="0.3442" stop-color="#ffd089"/><stop offset="0.3686" stop-color="#ffa370"/><stop offset="0.4012" stop-color="#ff7a58"/><stop offset="0.4453" stop-color="#ff5443"/><stop offset="0.507" stop-color="#ff3330"/><stop offset="0.5977" stop-color="#ff151f"/><stop offset="0.7151" stop-color="#ff0013"/><stop offset="1" stop-color="#ff0004"/></linearGradient><linearGradient id="cg52" gradientUnits="userSpaceOnUse" x1="1687" x2="2547"><stop offset="0" stop-color="#00ff7f"/><stop offset="0.2151" stop-color="#00ff95"/><stop offset="0.2558" stop-color="#4fff9b"/><stop offset="0.2942" stop-color="#a9ffa3"/><stop offset="0.3256" stop-color="#fffea9"/><stop offset="0.3442" stop-color="#ffcf8e"/><stop offset="0.3686" stop-color="#ffa273"/><stop offset="0.4012" stop-color="#ff795b"/><stop offset="0.4453" stop-color="#ff5446"/><stop offset="0.507" stop-color="#ff3232"/><stop offset="0.5977" stop-color="#ff1521"/><stop offset="0.7128" stop-color="#ff0014"/><stop offset="1" stop-color="#ff0005"/></linearGradient><linearGradient id="cg53" gradientUnits="userSpaceOnUse" x1="1688" x2="2547"><stop offset="0" stop-color="#00ff82"/><stop offset="0.2095" stop-color="#00ff99"/><stop offset="0.2154" stop-color="#01ff9a"/><stop offset="0.2584" stop-color="#57ffa1"/><stop offset="0.2957" stop-color="#afffa9"/><stop offset="0.3248" stop-color="#fffeaf"/><stop offset="0.3434" stop-color="#ffce92"/><stop offset="0.3679" stop-color="#ffa277"/><stop offset="0.4005" stop-color="#ff785e"/><stop offset="0.4447" stop-color="#ff5348"/><stop offset="0.5064" stop-color="#ff3234"/><stop offset="0.5972" stop-color="#ff1522"/><stop offset="0.7113" stop-color="#ff0015"/><stop offset="1" stop-color="#ff0005"/></linearGradient><linearGradient id="cg54" gradientUnits="userSpaceOnUse" x1="1688" x2="2547"><stop offset="0" stop-color="#00ff85"/><stop offset="0.2037" stop-color="#00ff9c"/><stop offset="0.2165" stop-color="#02ff9e"/><stop offset="0.2584" stop-color="#56ffa6"/><stop offset="0.2957" stop-color="#afffae"/><stop offset="0.3248" stop-color="#fffdb4"/><stop offset="0.3434" stop-color="#ffce97"/><stop offset="0.3679" stop-color="#ffa17b"/><stop offset="0.4005" stop-color="#ff7862"/><stop offset="0.4447" stop-color="#ff524b"/><stop offset="0.5064" stop-color="#ff3136"/><stop offset="0.5972" stop-color="#ff1424"/><stop offset="0.709" stop-color="#ff0017"/><stop offset="1" stop-color="#ff0006"/></linearGradient><linearGradient id="cg55" gradientUnits="userSpaceOnUse" x1="1689" x2="2547"><stop offset="0" stop-color="#00ff89"/><stop offset="0.1993" stop-color="#00ffa0"/><stop offset="0.2156" stop-color="#02ffa3"/><stop offset="0.2576" stop-color="#56ffab"/><stop offset="0.2949" stop-color="#afffb4"/><stop offset="0.3228" stop-color="#feffbc"/><stop offset="0.3438" stop-color="#ffca9a"/><stop offset="0.3683" stop-color="#ff9e7e"/><stop offset="0.4009" stop-color="#ff7664"/><stop offset="0.4452" stop-color="#ff514d"/><stop offset="0.5082" stop-color="#ff3037"/><stop offset="0.6002" stop-color="#ff1325"/><stop offset="0.7075" stop-color="#ff0018"/><stop offset="1" stop-color="#ff0007"/></linearGradient><linearGradient id="cg56" gradientUnits="userSpaceOnUse" x1="1689" x2="2547"><stop offset="0" stop-color="#00ff8c"/><stop offset="0.1946" stop-color="#00ffa4"/><stop offset="0.2156" stop-color="#01ffa8"/><stop offset="0.2576" stop-color="#56ffb1"/><stop offset="0.2949" stop-color="#b0ffba"/><stop offset="0.3228" stop-color="#ffffc2"/><stop offset="0.3415" stop-color="#ffcfa2"/><stop offset="0.3648" stop-color="#ffa386"/><stop offset="0.3963" stop-color="#ff7a6a"/><stop offset="0.4382" stop-color="#ff5552"/><stop offset="0.4977" stop-color="#ff343c"/><stop offset="0.5851" stop-color="#ff1629"/><stop offset="0.7016" stop-color="#ff001a"/><stop offset="0.9825" stop-color="#ff0008"/><stop offset="1" stop-color="#ff0008"/></linearGradient><linearGradient id="cg57" gradientUnits="userSpaceOnUse" x1="1690" x2="2547"><stop offset="0" stop-color="#00ff8f"/><stop offset="0.1902" stop-color="#00ffa8"/><stop offset="0.2147" stop-color="#00ffad"/><stop offset="0.2567" stop-color="#55ffb6"/><stop offset="0.2929" stop-color="#adffbf"/><stop offset="0.3221" stop-color="#fffec8"/><stop offset="0.3407" stop-color="#ffcea7"/><stop offset="0.3641" stop-color="#ffa28a"/><stop offset="0.3956" stop-color="#ff796e"/><stop offset="0.4376" stop-color="#ff5555"/><stop offset="0.4971" stop-color="#ff333e"/><stop offset="0.5846" stop-color="#ff162a"/><stop offset="0.7001" stop-color="#ff001b"/><stop offset="0.9755" stop-color="#ff0009"/><stop offset="1" stop-color="#ff0008"/></linearGradient><linearGradient id="cg58" gradientUnits="userSpaceOnUse" x1="1690" x2="2547"><stop offset="0" stop-color="#00ff92"/><stop offset="0.1855" stop-color="#00ffac"/><stop offset="0.2159" stop-color="#02ffb2"/><stop offset="0.2579" stop-color="#58ffbc"/><stop offset="0.294" stop-color="#b0ffc6"/><stop offset="0.3221" stop-color="#fffece"/><stop offset="0.3407" stop-color="#ffcdac"/><stop offset="0.3641" stop-color="#ffa28e"/><stop offset="0.3956" stop-color="#ff7971"/><stop offset="0.4376" stop-color="#ff5458"/><stop offset="0.4971" stop-color="#ff3340"/><stop offset="0.5846" stop-color="#ff152c"/><stop offset="0.6978" stop-color="#ff001c"/><stop offset="0.9662" stop-color="#ff000a"/><stop offset="1" stop-color="#ff0009"/></linearGradient><linearGradient id="cg59" gradientUnits="userSpaceOnUse" x1="1691" x2="2547"><stop offset="0" stop-color="#00ff96"/><stop offset="0.1811" stop-color="#00ffb0"/><stop offset="0.215" stop-color="#01ffb7"/><stop offset="0.257" stop-color="#57ffc1"/><stop offset="0.2932" stop-color="#b0ffcc"/><stop offset="0.3213" stop-color="#fffdd4"/><stop offset="0.34" stop-color="#ffccb1"/><stop offset="0.3633" stop-color="#ffa192"/><stop offset="0.3949" stop-color="#ff7874"/><stop offset="0.4369" stop-color="#ff535a"/><stop offset="0.4965" stop-color="#ff3242"/><stop offset="0.5841" stop-color="#ff152d"/><stop offset="0.6951" stop-color="#ff001e"/><stop offset="0.9579" stop-color="#ff000b"/><stop offset="1" stop-color="#ff000a"/></linearGradient><linearGradient id="cg60" gradientUnits="userSpaceOnUse" x1="1692" x2="2547"><stop offset="0" stop-color="#00ff99"/><stop offset="0.1778" stop-color="#00ffb4"/><stop offset="0.214" stop-color="#00ffbc"/><stop offset="0.255" stop-color="#54ffc6"/><stop offset="0.2912" stop-color="#adffd1"/><stop offset="0.3193" stop-color="#feffdb"/><stop offset="0.3404" stop-color="#ffc9b4"/><stop offset="0.3649" stop-color="#ff9d93"/><stop offset="0.3965" stop-color="#ff7576"/><stop offset="0.4398" stop-color="#ff505b"/><stop offset="0.5006" stop-color="#ff3043"/><stop offset="0.5906" stop-color="#ff132e"/><stop offset="0.6947" stop-color="#ff001f"/><stop offset="0.9532" stop-color="#ff000c"/><stop offset="1" stop-color="#ff000a"/></linearGradient><linearGradient id="cg61" gradientUnits="userSpaceOnUse" x1="1692" x2="2546"><stop offset="0" stop-color="#00ff9d"/><stop offset="0.1745" stop-color="#00ffb8"/><stop offset="0.2155" stop-color="#02ffc1"/><stop offset="0.2564" stop-color="#57ffcc"/><stop offset="0.2927" stop-color="#b0ffd8"/><stop offset="0.3197" stop-color="#ffffe2"/><stop offset="0.3384" stop-color="#ffcebd"/><stop offset="0.3618" stop-color="#ffa19b"/><stop offset="0.3923" stop-color="#ff797d"/><stop offset="0.4344" stop-color="#ff5461"/><stop offset="0.493" stop-color="#ff3348"/><stop offset="0.5796" stop-color="#ff1531"/><stop offset="0.6909" stop-color="#ff0021"/><stop offset="0.9415" stop-color="#ff000e"/><stop offset="1" stop-color="#ff000b"/></linearGradient><linearGradient id="cg62" gradientUnits="userSpaceOnUse" x1="1693" x2="2545"><stop offset="0" stop-color="#00ffa0"/><stop offset="0.1702" stop-color="#00ffbc"/><stop offset="0.2148" stop-color="#01ffc6"/><stop offset="0.2559" stop-color="#56ffd2"/><stop offset="0.2911" stop-color="#adffde"/><stop offset="0.3192" stop-color="#ffffe9"/><stop offset="0.3369" stop-color="#ffd0c4"/><stop offset="0.3603" stop-color="#ffa2a1"/><stop offset="0.3908" stop-color="#ff7a81"/><stop offset="0.4319" stop-color="#ff5565"/><stop offset="0.4894" stop-color="#ff344b"/><stop offset="0.5739" stop-color="#ff1634"/><stop offset="0.6878" stop-color="#ff0022"/><stop offset="0.9319" stop-color="#ff000f"/><stop offset="1" stop-color="#ff000c"/></linearGradient><linearGradient id="cg63" gradientUnits="userSpaceOnUse" x1="1693" x2="2543"><stop offset="0" stop-color="#00ffa3"/><stop offset="0.1682" stop-color="#00ffc0"/><stop offset="0.2153" stop-color="#01ffcb"/><stop offset="0.2565" stop-color="#56ffd7"/><stop offset="0.2918" stop-color="#aeffe4"/><stop offset="0.32" stop-color="#fffeef"/><stop offset="0.3376" stop-color="#ffcfc9"/><stop offset="0.3612" stop-color="#ffa2a5"/><stop offset="0.3918" stop-color="#ff7985"/><stop offset="0.4329" stop-color="#ff5468"/><stop offset="0.4906" stop-color="#ff334d"/><stop offset="0.5753" stop-color="#ff1636"/><stop offset="0.6871" stop-color="#ff0024"/><stop offset="0.9259" stop-color="#ff0010"/><stop offset="1" stop-color="#ff000d"/></linearGradient><linearGradient id="cg64" gradientUnits="userSpaceOnUse" x1="1694" x2="2541"><stop offset="0" stop-color="#00ffa7"/><stop offset="0.1653" stop-color="#00ffc4"/><stop offset="0.2161" stop-color="#02ffd1"/><stop offset="0.2562" stop-color="#56ffdd"/><stop offset="0.2916" stop-color="#aeffea"/><stop offset="0.32" stop-color="#fffdf5"/><stop offset="0.3377" stop-color="#ffcece"/><stop offset="0.3613" stop-color="#ffa1a9"/><stop offset="0.392" stop-color="#ff7888"/><stop offset="0.4333" stop-color="#ff546a"/><stop offset="0.4923" stop-color="#ff324f"/><stop offset="0.5785" stop-color="#ff1537"/><stop offset="0.6883" stop-color="#ff0025"/><stop offset="0.9244" stop-color="#ff0011"/><stop offset="1" stop-color="#ff000e"/></linearGradient><linearGradient id="cg65" gradientUnits="userSpaceOnUse" x1="1695" x2="2539"><stop offset="0" stop-color="#00ffab"/><stop offset="0.1623" stop-color="#00ffc8"/><stop offset="0.2156" stop-color="#01ffd6"/><stop offset="0.2559" stop-color="#55ffe3"/><stop offset="0.2915" stop-color="#aefff1"/><stop offset="0.3187" stop-color="#fefffd"/><stop offset="0.34" stop-color="#ffc8cf"/><stop offset="0.3637" stop-color="#ff9cab"/><stop offset="0.3957" stop-color="#ff7489"/><stop offset="0.4384" stop-color="#ff506a"/><stop offset="0.4988" stop-color="#ff2f4f"/><stop offset="0.5889" stop-color="#ff1237"/><stop offset="0.6896" stop-color="#ff0026"/><stop offset="0.923" stop-color="#ff0012"/><stop offset="1" stop-color="#ff000e"/></linearGradient><linearGradient id="cg66" gradientUnits="userSpaceOnUse" x1="1695" x2="2537"><stop offset="0" stop-color="#00ffae"/><stop offset="0.1591" stop-color="#00ffcc"/><stop offset="0.2162" stop-color="#01ffdb"/><stop offset="0.2565" stop-color="#55ffe9"/><stop offset="0.2922" stop-color="#aefff7"/><stop offset="0.3147" stop-color="#edfcff"/><stop offset="0.3219" stop-color="#fff8fe"/><stop offset="0.3397" stop-color="#ffcad7"/><stop offset="0.3634" stop-color="#ff9eb0"/><stop offset="0.3943" stop-color="#ff768e"/><stop offset="0.4371" stop-color="#ff516e"/><stop offset="0.4964" stop-color="#ff3052"/><stop offset="0.5843" stop-color="#ff1339"/><stop offset="0.6876" stop-color="#ff0028"/><stop offset="0.9157" stop-color="#ff0014"/><stop offset="1" stop-color="#ff000f"/></linearGradient><linearGradient id="cg67" gradientUnits="userSpaceOnUse" x1="1696" x2="2535"><stop offset="0" stop-color="#00ffb2"/><stop offset="0.1561" stop-color="#00ffd0"/><stop offset="0.2157" stop-color="#00ffe1"/><stop offset="0.2551" stop-color="#52ffee"/><stop offset="0.2908" stop-color="#abfffd"/><stop offset="0.3242" stop-color="#fff0fe"/><stop offset="0.3433" stop-color="#ffc1d5"/><stop offset="0.3683" stop-color="#ff96ae"/><stop offset="0.4017" stop-color="#ff6e8b"/><stop offset="0.447" stop-color="#ff4a6c"/><stop offset="0.5113" stop-color="#ff2a4f"/><stop offset="0.6067" stop-color="#ff0e37"/><stop offset="0.6901" stop-color="#ff0029"/><stop offset="0.9166" stop-color="#ff0015"/><stop offset="1" stop-color="#ff0010"/></linearGradient><linearGradient id="cg68" gradientUnits="userSpaceOnUse" x1="1697" x2="2533"><stop offset="0" stop-color="#00ffb5"/><stop offset="0.1543" stop-color="#00ffd4"/><stop offset="0.2165" stop-color="#01ffe6"/><stop offset="0.2572" stop-color="#57fff5"/><stop offset="0.2847" stop-color="#9afdff"/><stop offset="0.3266" stop-color="#ffe9fe"/><stop offset="0.3457" stop-color="#ffbcd6"/><stop offset="0.3708" stop-color="#ff91af"/><stop offset="0.4043" stop-color="#ff6b8c"/><stop offset="0.451" stop-color="#ff476c"/><stop offset="0.5167" stop-color="#ff2750"/><stop offset="0.616" stop-color="#ff0b36"/><stop offset="0.6902" stop-color="#ff002a"/><stop offset="0.9139" stop-color="#ff0016"/><stop offset="1" stop-color="#ff0011"/></linearGradient><linearGradient id="cg69" gradientUnits="userSpaceOnUse" x1="1697" x2="2531"><stop offset="0" stop-color="#00ffb9"/><stop offset="0.1523" stop-color="#00ffd8"/><stop offset="0.217" stop-color="#01ffec"/><stop offset="0.2578" stop-color="#57fffb"/><stop offset="0.2758" stop-color="#80fbff"/><stop offset="0.3297" stop-color="#ffe2ff"/><stop offset="0.3501" stop-color="#ffb4d4"/><stop offset="0.3765" stop-color="#ff8aae"/><stop offset="0.4125" stop-color="#ff638a"/><stop offset="0.4616" stop-color="#ff416a"/><stop offset="0.5324" stop-color="#ff224d"/><stop offset="0.6391" stop-color="#ff0734"/><stop offset="0.693" stop-color="#ff002b"/><stop offset="0.9149" stop-color="#ff0017"/><stop offset="1" stop-color="#ff0012"/></linearGradient><linearGradient id="cg70" gradientUnits="userSpaceOnUse" x1="1698" x2="2529"><stop offset="0" stop-color="#00ffbd"/><stop offset="0.1492" stop-color="#00ffdc"/><stop offset="0.2166" stop-color="#00fff1"/><stop offset="0.2563" stop-color="#53fdff"/><stop offset="0.3249" stop-color="#eedfff"/><stop offset="0.3321" stop-color="#ffdbff"/><stop offset="0.3538" stop-color="#ffadd3"/><stop offset="0.3815" stop-color="#ff83ac"/><stop offset="0.4188" stop-color="#ff5d88"/><stop offset="0.4705" stop-color="#ff3b68"/><stop offset="0.5463" stop-color="#ff1d4b"/><stop offset="0.6619" stop-color="#ff0232"/><stop offset="0.7882" stop-color="#ff0022"/><stop offset="1" stop-color="#ff0013"/></linearGradient><linearGradient id="cg71" gradientUnits="userSpaceOnUse" x1="1699" x2="2527"><stop offset="0" stop-color="#00ffc1"/><stop offset="0.1473" stop-color="#00ffe1"/><stop offset="0.2174" stop-color="#01fff7"/><stop offset="0.2428" stop-color="#35fdff"/><stop offset="0.314" stop-color="#d0deff"/><stop offset="0.3345" stop-color="#ffd4ff"/><stop offset="0.3563" stop-color="#ffa8d4"/><stop offset="0.3853" stop-color="#ff7eab"/><stop offset="0.4239" stop-color="#ff5987"/><stop offset="0.4783" stop-color="#ff3767"/><stop offset="0.558" stop-color="#ff1949"/><stop offset="0.6751" stop-color="#ff0031"/><stop offset="0.878" stop-color="#ff001b"/><stop offset="1" stop-color="#ff0013"/></linearGradient><linearGradient id="cg72" gradientUnits="userSpaceOnUse" x1="1699" x2="2525"><stop offset="0" stop-color="#00ffc4"/><stop offset="0.1453" stop-color="#00ffe5"/><stop offset="0.2179" stop-color="#01fffd"/><stop offset="0.293" stop-color="#9be2ff"/><stop offset="0.3378" stop-color="#ffcdff"/><stop offset="0.3608" stop-color="#ffa1d2"/><stop offset="0.391" stop-color="#ff78aa"/><stop offset="0.4322" stop-color="#ff5385"/><stop offset="0.4903" stop-color="#ff3164"/><stop offset="0.5751" stop-color="#ff1447"/><stop offset="0.6804" stop-color="#ff0032"/><stop offset="0.8838" stop-color="#ff001c"/><stop offset="1" stop-color="#ff0014"/></linearGradient><linearGradient id="cg73" gradientUnits="userSpaceOnUse" x1="1700" x2="2523"><stop offset="0" stop-color="#00ffc8"/><stop offset="0.1434" stop-color="#00ffe9"/><stop offset="0.2126" stop-color="#00fdff"/><stop offset="0.2187" stop-color="#02fbff"/><stop offset="0.2953" stop-color="#9ddbff"/><stop offset="0.3402" stop-color="#ffc7ff"/><stop offset="0.3633" stop-color="#ff9cd3"/><stop offset="0.3937" stop-color="#ff74ab"/><stop offset="0.435" stop-color="#ff5086"/><stop offset="0.4933" stop-color="#ff3065"/><stop offset="0.5796" stop-color="#ff1348"/><stop offset="0.6804" stop-color="#ff0033"/><stop offset="0.8809" stop-color="#ff001d"/><stop offset="1" stop-color="#ff0015"/></linearGradient><linearGradient id="cg74" gradientUnits="userSpaceOnUse" x1="1701" x2="2521"><stop offset="0" stop-color="#00ffcc"/><stop offset="0.1402" stop-color="#00ffed"/><stop offset="0.1976" stop-color="#00fdff"/><stop offset="0.2183" stop-color="#02f5ff"/><stop offset="0.2963" stop-color="#9cd6ff"/><stop offset="0.3427" stop-color="#ffc1ff"/><stop offset="0.3659" stop-color="#ff97d3"/><stop offset="0.3976" stop-color="#ff70aa"/><stop offset="0.4402" stop-color="#ff4c85"/><stop offset="0.5" stop-color="#ff2d65"/><stop offset="0.5878" stop-color="#ff1147"/><stop offset="0.6817" stop-color="#ff0034"/><stop offset="0.8805" stop-color="#ff001e"/><stop offset="1" stop-color="#ff0016"/></linearGradient><linearGradient id="cg75" gradientUnits="userSpaceOnUse" x1="1701" x2="2519"><stop offset="0" stop-color="#00ffd0"/><stop offset="0.1394" stop-color="#00fff2"/><stop offset="0.1846" stop-color="#00fdff"/><stop offset="0.2188" stop-color="#01f0ff"/><stop offset="0.2983" stop-color="#9bd0ff"/><stop offset="0.346" stop-color="#ffbbff"/><stop offset="0.3704" stop-color="#ff91d2"/><stop offset="0.4022" stop-color="#ff6baa"/><stop offset="0.4462" stop-color="#ff4885"/><stop offset="0.5073" stop-color="#ff2a64"/><stop offset="0.5978" stop-color="#ff0e47"/><stop offset="0.6822" stop-color="#ff0036"/><stop offset="0.8778" stop-color="#ff001f"/><stop offset="1" stop-color="#ff0017"/></linearGradient><linearGradient id="cg76" gradientUnits="userSpaceOnUse" x1="1702" x2="2517"><stop offset="0" stop-color="#00ffd4"/><stop offset="0.1374" stop-color="#00fff7"/><stop offset="0.1693" stop-color="#00fdff"/><stop offset="0.2184" stop-color="#00ebff"/><stop offset="0.2994" stop-color="#9acbff"/><stop offset="0.3485" stop-color="#ffb5ff"/><stop offset="0.373" stop-color="#ff8dd3"/><stop offset="0.4061" stop-color="#ff67aa"/><stop offset="0.4503" stop-color="#ff4585"/><stop offset="0.5129" stop-color="#ff2764"/><stop offset="0.6049" stop-color="#ff0c47"/><stop offset="0.681" stop-color="#ff0038"/><stop offset="0.8736" stop-color="#ff0021"/><stop offset="1" stop-color="#ff0018"/></linearGradient><linearGradient id="cg77" gradientUnits="userSpaceOnUse" x1="1703" x2="2515"><stop offset="0" stop-color="#00ffd8"/><stop offset="0.1355" stop-color="#00fffb"/><stop offset="0.1589" stop-color="#00fbff"/><stop offset="0.2192" stop-color="#02e5ff"/><stop offset="0.3017" stop-color="#9bc5ff"/><stop offset="0.351" stop-color="#ffb0ff"/><stop offset="0.3756" stop-color="#ff89d3"/><stop offset="0.4089" stop-color="#ff64ab"/><stop offset="0.4544" stop-color="#ff4385"/><stop offset="0.5185" stop-color="#ff2564"/><stop offset="0.6121" stop-color="#ff0a47"/><stop offset="0.681" stop-color="#ff0039"/><stop offset="0.8719" stop-color="#ff0022"/><stop offset="1" stop-color="#ff0019"/></linearGradient><linearGradient id="cg78" gradientUnits="userSpaceOnUse" x1="1703" x2="2513"><stop offset="0" stop-color="#00ffdc"/><stop offset="0.1383" stop-color="#00fdff"/><stop offset="0.2198" stop-color="#01e1ff"/><stop offset="0.3037" stop-color="#9ac0ff"/><stop offset="0.3543" stop-color="#ffabff"/><stop offset="0.3802" stop-color="#ff83d2"/><stop offset="0.4148" stop-color="#ff5fa9"/><stop offset="0.4617" stop-color="#ff3e84"/><stop offset="0.5272" stop-color="#ff2263"/><stop offset="0.6235" stop-color="#ff0846"/><stop offset="0.6815" stop-color="#ff003b"/><stop offset="0.8691" stop-color="#ff0023"/><stop offset="1" stop-color="#ff001a"/></linearGradient><linearGradient id="cg79" gradientUnits="userSpaceOnUse" x1="1704" x2="2511"><stop offset="0" stop-color="#00ffe0"/><stop offset="0.1227" stop-color="#00fdff"/><stop offset="0.2193" stop-color="#00dcff"/><stop offset="0.3048" stop-color="#9abbff"/><stop offset="0.3569" stop-color="#ffa5ff"/><stop offset="0.3829" stop-color="#ff7fd3"/><stop offset="0.4176" stop-color="#ff5caa"/><stop offset="0.4647" stop-color="#ff3c85"/><stop offset="0.5304" stop-color="#ff2064"/><stop offset="0.627" stop-color="#ff0747"/><stop offset="0.6815" stop-color="#ff003c"/><stop offset="0.8674" stop-color="#ff0025"/><stop offset="1" stop-color="#ff001b"/></linearGradient><linearGradient id="cg80" gradientUnits="userSpaceOnUse" x1="1705" x2="2510"><stop offset="0" stop-color="#00ffe4"/><stop offset="0.1068" stop-color="#00fdff"/><stop offset="0.2199" stop-color="#01d7ff"/><stop offset="0.3068" stop-color="#9bb6ff"/><stop offset="0.359" stop-color="#ffa0ff"/><stop offset="0.3851" stop-color="#ff7cd3"/><stop offset="0.4199" stop-color="#ff59ab"/><stop offset="0.4671" stop-color="#ff3a86"/><stop offset="0.5342" stop-color="#ff1e65"/><stop offset="0.6323" stop-color="#ff0648"/><stop offset="0.682" stop-color="#ff003e"/><stop offset="0.8658" stop-color="#ff0026"/><stop offset="1" stop-color="#ff001b"/></linearGradient><linearGradient id="cg81" gradientUnits="userSpaceOnUse" x1="1706" x2="2508"><stop offset="0" stop-color="#00ffe8"/><stop offset="0.0923" stop-color="#00fdff"/><stop offset="0.2195" stop-color="#01d3ff"/><stop offset="0.308" stop-color="#9ab1ff"/><stop offset="0.3616" stop-color="#ff9bff"/><stop offset="0.389" stop-color="#ff77d2"/><stop offset="0.4252" stop-color="#ff55a9"/><stop offset="0.4738" stop-color="#ff3785"/><stop offset="0.5424" stop-color="#ff1b64"/><stop offset="0.6434" stop-color="#ff0347"/><stop offset="0.6908" stop-color="#ff003e"/><stop offset="0.8778" stop-color="#ff0026"/><stop offset="1" stop-color="#ff001c"/></linearGradient><linearGradient id="cg82" gradientUnits="userSpaceOnUse" x1="1706" x2="2506"><stop offset="0" stop-color="#00ffec"/><stop offset="0.0775" stop-color="#00fdff"/><stop offset="0.22" stop-color="#00ceff"/><stop offset="0.31" stop-color="#99adff"/><stop offset="0.365" stop-color="#ff97ff"/><stop offset="0.3925" stop-color="#ff73d3"/><stop offset="0.4288" stop-color="#ff52aa"/><stop offset="0.4788" stop-color="#ff3485"/><stop offset="0.5487" stop-color="#ff1964"/><stop offset="0.6512" stop-color="#ff0247"/><stop offset="0.8113" stop-color="#ff002e"/><stop offset="1" stop-color="#ff001d"/></linearGradient><linearGradient id="cg83" gradientUnits="userSpaceOnUse" x1="1707" x2="2504"><stop offset="0" stop-color="#00fff0"/><stop offset="0.0615" stop-color="#00fdff"/><stop offset="0.2208" stop-color="#01caff"/><stop offset="0.3124" stop-color="#9ba8ff"/><stop offset="0.3676" stop-color="#ff92ff"/><stop offset="0.3952" stop-color="#ff70d3"/><stop offset="0.4316" stop-color="#ff50ab"/><stop offset="0.4818" stop-color="#ff3286"/><stop offset="0.5521" stop-color="#ff1865"/><stop offset="0.655" stop-color="#ff0148"/><stop offset="0.8156" stop-color="#ff002f"/><stop offset="1" stop-color="#ff001e"/></linearGradient><linearGradient id="cg84" gradientUnits="userSpaceOnUse" x1="1708" x2="2502"><stop offset="0" stop-color="#00fff5"/><stop offset="0.0466" stop-color="#00fdff"/><stop offset="0.2204" stop-color="#01c6ff"/><stop offset="0.3136" stop-color="#9aa4ff"/><stop offset="0.3703" stop-color="#ff8eff"/><stop offset="0.3992" stop-color="#ff6bd2"/><stop offset="0.437" stop-color="#ff4baa"/><stop offset="0.4887" stop-color="#ff2f85"/><stop offset="0.5617" stop-color="#ff1564"/><stop offset="0.665" stop-color="#ff0047"/><stop offset="0.83" stop-color="#ff002e"/><stop offset="1" stop-color="#ff001f"/></linearGradient><linearGradient id="cg85" gradientUnits="userSpaceOnUse" x1="1709" x2="2500"><stop offset="0" stop-color="#00fff9"/><stop offset="0.0316" stop-color="#00fcff"/><stop offset="0.22" stop-color="#00c2ff"/><stop offset="0.3161" stop-color="#9b9fff"/><stop offset="0.3729" stop-color="#ff89ff"/><stop offset="0.402" stop-color="#ff68d3"/><stop offset="0.4399" stop-color="#ff49ab"/><stop offset="0.4918" stop-color="#ff2d86"/><stop offset="0.5651" stop-color="#ff1465"/><stop offset="0.665" stop-color="#ff0049"/><stop offset="0.8281" stop-color="#ff0030"/><stop offset="1" stop-color="#ff0020"/></linearGradient><linearGradient id="cg86" gradientUnits="userSpaceOnUse" x1="1709" x2="2498"><stop offset="0" stop-color="#00fffd"/><stop offset="0.161" stop-color="#00d2ff"/><stop offset="0.2218" stop-color="#01beff"/><stop offset="0.3194" stop-color="#9c9bff"/><stop offset="0.3764" stop-color="#ff85ff"/><stop offset="0.4068" stop-color="#ff63d2"/><stop offset="0.4461" stop-color="#ff45a9"/><stop offset="0.4994" stop-color="#ff2a85"/><stop offset="0.5741" stop-color="#ff1164"/><stop offset="0.6667" stop-color="#ff004b"/><stop offset="0.8289" stop-color="#ff0031"/><stop offset="1" stop-color="#ff0021"/></linearGradient><linearGradient id="cg87" gradientUnits="userSpaceOnUse" x1="1710" x2="2496"><stop offset="0" stop-color="#00fcff"/><stop offset="0.2214" stop-color="#01baff"/><stop offset="0.3206" stop-color="#9c97ff"/><stop offset="0.3791" stop-color="#ff81ff"/><stop offset="0.4097" stop-color="#ff60d2"/><stop offset="0.4491" stop-color="#ff43aa"/><stop offset="0.5038" stop-color="#ff2885"/><stop offset="0.5802" stop-color="#ff1064"/><stop offset="0.6667" stop-color="#ff004c"/><stop offset="0.827" stop-color="#ff0032"/><stop offset="1" stop-color="#ff0022"/></linearGradient><linearGradient id="cg88" gradientUnits="userSpaceOnUse" x1="1711" x2="2494"><stop offset="0" stop-color="#00f8ff"/><stop offset="0.2209" stop-color="#00b6ff"/><stop offset="0.3218" stop-color="#9b93ff"/><stop offset="0.3819" stop-color="#ff7dff"/><stop offset="0.4125" stop-color="#ff5dd3"/><stop offset="0.4534" stop-color="#ff40aa"/><stop offset="0.5083" stop-color="#ff2685"/><stop offset="0.5862" stop-color="#ff0e64"/><stop offset="0.6667" stop-color="#ff004e"/><stop offset="0.825" stop-color="#ff0034"/><stop offset="1" stop-color="#ff0023"/></linearGradient><linearGradient id="cg89" gradientUnits="userSpaceOnUse" x1="1712" x2="2492"><stop offset="0" stop-color="#00f4ff"/><stop offset="0.2218" stop-color="#01b2ff"/><stop offset="0.3244" stop-color="#9c8fff"/><stop offset="0.3859" stop-color="#ff77fd"/><stop offset="0.4179" stop-color="#ff58d0"/><stop offset="0.4603" stop-color="#ff3ba8"/><stop offset="0.5179" stop-color="#ff2283"/><stop offset="0.5987" stop-color="#ff0b62"/><stop offset="0.6654" stop-color="#ff0050"/><stop offset="0.8205" stop-color="#ff0036"/><stop offset="1" stop-color="#ff0024"/></linearGradient><linearGradient id="cg90" gradientUnits="userSpaceOnUse" x1="1712" x2="2490"><stop offset="0" stop-color="#00f0ff"/><stop offset="0.2224" stop-color="#01afff"/><stop offset="0.3265" stop-color="#9b8cff"/><stop offset="0.3895" stop-color="#ff74fd"/><stop offset="0.4216" stop-color="#ff55d1"/><stop offset="0.464" stop-color="#ff39a8"/><stop offset="0.5219" stop-color="#ff2084"/><stop offset="0.6028" stop-color="#ff0a63"/><stop offset="0.6658" stop-color="#ff0052"/><stop offset="0.8201" stop-color="#ff0037"/><stop offset="1" stop-color="#ff0025"/></linearGradient><linearGradient id="cg91" gradientUnits="userSpaceOnUse" x1="1713" x2="2488"><stop offset="0" stop-color="#00ecff"/><stop offset="0.2219" stop-color="#00acff"/><stop offset="0.3277" stop-color="#9b88ff"/><stop offset="0.3923" stop-color="#ff70fd"/><stop offset="0.4245" stop-color="#ff52d1"/><stop offset="0.4671" stop-color="#ff37a9"/><stop offset="0.5252" stop-color="#ff1f85"/><stop offset="0.6077" stop-color="#ff0863"/><stop offset="0.6645" stop-color="#ff0054"/><stop offset="0.8155" stop-color="#ff0039"/><stop offset="1" stop-color="#ff0026"/></linearGradient><linearGradient id="cg92" gradientUnits="userSpaceOnUse" x1="1714" x2="2486"><stop offset="0" stop-color="#00e8ff"/><stop offset="0.2228" stop-color="#01a8ff"/><stop offset="0.3303" stop-color="#9c85ff"/><stop offset="0.3951" stop-color="#ff6cfd"/><stop offset="0.4288" stop-color="#ff4fd0"/><stop offset="0.4728" stop-color="#ff34a8"/><stop offset="0.5324" stop-color="#ff1c83"/><stop offset="0.6166" stop-color="#ff0663"/><stop offset="0.6658" stop-color="#ff0055"/><stop offset="0.8161" stop-color="#ff003a"/><stop offset="1" stop-color="#ff0027"/></linearGradient><linearGradient id="cg93" gradientUnits="userSpaceOnUse" x1="1715" x2="2484"><stop offset="0" stop-color="#00e4ff"/><stop offset="0.2224" stop-color="#01a5ff"/><stop offset="0.3316" stop-color="#9b81ff"/><stop offset="0.3979" stop-color="#ff69fd"/><stop offset="0.4317" stop-color="#ff4cd1"/><stop offset="0.4759" stop-color="#ff32a9"/><stop offset="0.5371" stop-color="#ff1a84"/><stop offset="0.6229" stop-color="#ff0563"/><stop offset="0.6671" stop-color="#ff0057"/><stop offset="0.8166" stop-color="#ff003b"/><stop offset="1" stop-color="#ff0028"/></linearGradient><linearGradient id="cg94" gradientUnits="userSpaceOnUse" x1="1716" x2="2482"><stop offset="0" stop-color="#00e0ff"/><stop offset="0.2219" stop-color="#00a2ff"/><stop offset="0.3329" stop-color="#9a7eff"/><stop offset="0.4008" stop-color="#ff65fd"/><stop offset="0.4347" stop-color="#ff4ad1"/><stop offset="0.4804" stop-color="#ff30a8"/><stop offset="0.5418" stop-color="#ff1884"/><stop offset="0.6292" stop-color="#ff0363"/><stop offset="0.6762" stop-color="#ff0056"/><stop offset="0.829" stop-color="#ff003b"/><stop offset="1" stop-color="#ff0029"/></linearGradient><linearGradient id="cg95" gradientUnits="userSpaceOnUse" x1="1716" x2="2480"><stop offset="0" stop-color="#00ddff"/><stop offset="0.2238" stop-color="#019fff"/><stop offset="0.3364" stop-color="#9b7bff"/><stop offset="0.4045" stop-color="#ff62fd"/><stop offset="0.4398" stop-color="#ff46d0"/><stop offset="0.4856" stop-color="#ff2da8"/><stop offset="0.5484" stop-color="#ff1684"/><stop offset="0.6374" stop-color="#ff0263"/><stop offset="0.7683" stop-color="#ff0046"/><stop offset="0.9725" stop-color="#ff002d"/><stop offset="1" stop-color="#ff002a"/></linearGradient><linearGradient id="cg96" gradientUnits="userSpaceOnUse" x1="1717" x2="2478"><stop offset="0" stop-color="#00d9ff"/><stop offset="0.2234" stop-color="#019cff"/><stop offset="0.3377" stop-color="#9b78ff"/><stop offset="0.4074" stop-color="#ff5ffd"/><stop offset="0.4428" stop-color="#ff44d1"/><stop offset="0.4901" stop-color="#ff2ba8"/><stop offset="0.5545" stop-color="#ff1483"/><stop offset="0.6452" stop-color="#ff0062"/><stop offset="0.7792" stop-color="#ff0045"/><stop offset="0.9882" stop-color="#ff002c"/><stop offset="1" stop-color="#ff002b"/></linearGradient><linearGradient id="cg97" gradientUnits="userSpaceOnUse" x1="1718" x2="2476"><stop offset="0" stop-color="#00d5ff"/><stop offset="0.2243" stop-color="#0298ff"/><stop offset="0.3404" stop-color="#9c74ff"/><stop offset="0.4103" stop-color="#ff5cfd"/><stop offset="0.4459" stop-color="#ff41d1"/><stop offset="0.4934" stop-color="#ff29a9"/><stop offset="0.558" stop-color="#ff1384"/><stop offset="0.6491" stop-color="#ff0063"/><stop offset="0.7836" stop-color="#ff0046"/><stop offset="0.9934" stop-color="#ff002d"/><stop offset="1" stop-color="#ff002c"/></linearGradient><linearGradient id="cg98" gradientUnits="userSpaceOnUse" x1="1719" x2="2475"><stop offset="0" stop-color="#00d2ff"/><stop offset="0.2235" stop-color="#0196ff"/><stop offset="0.3413" stop-color="#9b71ff"/><stop offset="0.4127" stop-color="#ff59fd"/><stop offset="0.4497" stop-color="#ff3ed1"/><stop offset="0.4987" stop-color="#ff26a8"/><stop offset="0.5648" stop-color="#ff1183"/><stop offset="0.6508" stop-color="#ff0064"/><stop offset="0.7844" stop-color="#ff0047"/><stop offset="0.9934" stop-color="#ff002e"/><stop offset="1" stop-color="#ff002d"/></linearGradient><linearGradient id="cg99" gradientUnits="userSpaceOnUse" x1="1720" x2="2473"><stop offset="0" stop-color="#00ceff"/><stop offset="0.2231" stop-color="#0193ff"/><stop offset="0.3426" stop-color="#9b6eff"/><stop offset="0.4157" stop-color="#ff56fd"/><stop offset="0.4529" stop-color="#ff3cd1"/><stop offset="0.502" stop-color="#ff24a8"/><stop offset="0.5684" stop-color="#ff0f84"/><stop offset="0.6507" stop-color="#ff0066"/><stop offset="0.7835" stop-color="#ff0049"/><stop offset="0.9894" stop-color="#ff002f"/><stop offset="1" stop-color="#ff002e"/></linearGradient><linearGradient id="cg100" gradientUnits="userSpaceOnUse" x1="1720" x2="2471"><stop offset="0" stop-color="#00cbff"/><stop offset="0.225" stop-color="#0290ff"/><stop offset="0.3462" stop-color="#9c6bff"/><stop offset="0.4194" stop-color="#ff53fd"/><stop offset="0.4567" stop-color="#ff3ad1"/><stop offset="0.506" stop-color="#ff23a9"/><stop offset="0.5739" stop-color="#ff0e84"/><stop offset="0.6498" stop-color="#ff0069"/><stop offset="0.7803" stop-color="#ff004b"/><stop offset="0.9814" stop-color="#ff0031"/><stop offset="1" stop-color="#ff002f"/></linearGradient><linearGradient id="cg101" gradientUnits="userSpaceOnUse" x1="1721" x2="2469"><stop offset="0" stop-color="#00c8ff"/><stop offset="0.2246" stop-color="#018dff"/><stop offset="0.3476" stop-color="#9b69ff"/><stop offset="0.4225" stop-color="#ff50fe"/><stop offset="0.4612" stop-color="#ff37d1"/><stop offset="0.512" stop-color="#ff20a8"/><stop offset="0.5816" stop-color="#ff0c83"/><stop offset="0.6497" stop-color="#ff006b"/><stop offset="0.7794" stop-color="#ff004d"/><stop offset="0.9786" stop-color="#ff0032"/><stop offset="1" stop-color="#ff0030"/></linearGradient><linearGradient id="cg102" gradientUnits="userSpaceOnUse" x1="1722" x2="2467"><stop offset="0" stop-color="#00c5ff"/><stop offset="0.2242" stop-color="#018bff"/><stop offset="0.3503" stop-color="#9c66ff"/><stop offset="0.4255" stop-color="#ff4dfe"/><stop offset="0.4644" stop-color="#ff35d1"/><stop offset="0.5154" stop-color="#ff1fa9"/><stop offset="0.5852" stop-color="#ff0b84"/><stop offset="0.6483" stop-color="#ff006d"/><stop offset="0.7758" stop-color="#ff004f"/><stop offset="0.9705" stop-color="#ff0034"/><stop offset="1" stop-color="#ff0032"/></linearGradient><linearGradient id="cg103" gradientUnits="userSpaceOnUse" x1="1723" x2="2465"><stop offset="0" stop-color="#00c2ff"/><stop offset="0.2251" stop-color="#0288ff"/><stop offset="0.3531" stop-color="#9d63ff"/><stop offset="0.4286" stop-color="#ff4afe"/><stop offset="0.4677" stop-color="#ff33d1"/><stop offset="0.5202" stop-color="#ff1da8"/><stop offset="0.5916" stop-color="#ff0983"/><stop offset="0.6482" stop-color="#ff006f"/><stop offset="0.7749" stop-color="#ff0050"/><stop offset="0.9677" stop-color="#ff0036"/><stop offset="1" stop-color="#ff0033"/></linearGradient><linearGradient id="cg104" gradientUnits="userSpaceOnUse" x1="1724" x2="2463"><stop offset="0" stop-color="#00bfff"/><stop offset="0.2246" stop-color="#0186ff"/><stop offset="0.3545" stop-color="#9c60ff"/><stop offset="0.4317" stop-color="#ff48fe"/><stop offset="0.4709" stop-color="#ff31d2"/><stop offset="0.5237" stop-color="#ff1ba9"/><stop offset="0.5954" stop-color="#ff0884"/><stop offset="0.6468" stop-color="#ff0071"/><stop offset="0.7713" stop-color="#ff0053"/><stop offset="0.9608" stop-color="#ff0038"/><stop offset="1" stop-color="#ff0034"/></linearGradient><linearGradient id="cg105" gradientUnits="userSpaceOnUse" x1="1725" x2="2461"><stop offset="0" stop-color="#00bcff"/><stop offset="0.2242" stop-color="#0183ff"/><stop offset="0.356" stop-color="#9c5eff"/><stop offset="0.4348" stop-color="#ff45fe"/><stop offset="0.4755" stop-color="#ff2ed1"/><stop offset="0.5299" stop-color="#ff19a8"/><stop offset="0.6033" stop-color="#ff0683"/><stop offset="0.6481" stop-color="#ff0073"/><stop offset="0.7717" stop-color="#ff0054"/><stop offset="0.9592" stop-color="#ff0039"/><stop offset="1" stop-color="#ff0035"/></linearGradient><linearGradient id="cg106" gradientUnits="userSpaceOnUse" x1="1725" x2="2459"><stop offset="0" stop-color="#00b9ff"/><stop offset="0.2262" stop-color="#0281ff"/><stop offset="0.3597" stop-color="#9d5bff"/><stop offset="0.4387" stop-color="#ff42fe"/><stop offset="0.4796" stop-color="#ff2cd2"/><stop offset="0.5341" stop-color="#ff17a9"/><stop offset="0.6076" stop-color="#ff0584"/><stop offset="0.6499" stop-color="#ff0075"/><stop offset="0.7725" stop-color="#ff0056"/><stop offset="0.9578" stop-color="#ff003a"/><stop offset="1" stop-color="#ff0036"/></linearGradient><linearGradient id="cg107" gradientUnits="userSpaceOnUse" x1="1726" x2="2457"><stop offset="0" stop-color="#00b6ff"/><stop offset="0.2257" stop-color="#017fff"/><stop offset="0.3611" stop-color="#9c59ff"/><stop offset="0.4419" stop-color="#ff40fe"/><stop offset="0.4829" stop-color="#ff2ad2"/><stop offset="0.5376" stop-color="#ff16a9"/><stop offset="0.6129" stop-color="#ff0384"/><stop offset="0.6566" stop-color="#ff0075"/><stop offset="0.7825" stop-color="#ff0055"/><stop offset="0.9726" stop-color="#ff003a"/><stop offset="1" stop-color="#ff0037"/></linearGradient><linearGradient id="cg108" gradientUnits="userSpaceOnUse" x1="1727" x2="2455"><stop offset="0" stop-color="#00b3ff"/><stop offset="0.2253" stop-color="#017cff"/><stop offset="0.3626" stop-color="#9b56ff"/><stop offset="0.4451" stop-color="#ff3dfe"/><stop offset="0.4876" stop-color="#ff27d1"/><stop offset="0.544" stop-color="#ff14a8"/><stop offset="0.6209" stop-color="#ff0183"/><stop offset="0.7294" stop-color="#ff0062"/><stop offset="0.8887" stop-color="#ff0045"/><stop offset="1" stop-color="#ff0038"/></linearGradient><linearGradient id="cg109" gradientUnits="userSpaceOnUse" x1="1728" x2="2453"><stop offset="0" stop-color="#00b0ff"/><stop offset="0.2262" stop-color="#027aff"/><stop offset="0.3655" stop-color="#9c54ff"/><stop offset="0.4483" stop-color="#ff3bfe"/><stop offset="0.491" stop-color="#ff26d2"/><stop offset="0.5476" stop-color="#ff12a9"/><stop offset="0.6248" stop-color="#ff0084"/><stop offset="0.7338" stop-color="#ff0063"/><stop offset="0.8938" stop-color="#ff0046"/><stop offset="1" stop-color="#ff0039"/></linearGradient><linearGradient id="cg110" gradientUnits="userSpaceOnUse" x1="1729" x2="2451"><stop offset="0" stop-color="#00adff"/><stop offset="0.2258" stop-color="#0178ff"/><stop offset="0.367" stop-color="#9c52ff"/><stop offset="0.4515" stop-color="#ff38fe"/><stop offset="0.4945" stop-color="#ff24d2"/><stop offset="0.5512" stop-color="#ff11aa"/><stop offset="0.6288" stop-color="#ff0085"/><stop offset="0.7382" stop-color="#ff0064"/><stop offset="0.8989" stop-color="#ff0047"/><stop offset="1" stop-color="#ff003b"/></linearGradient><linearGradient id="cg111" gradientUnits="userSpaceOnUse" x1="1730" x2="2449"><stop offset="0" stop-color="#00abff"/><stop offset="0.2253" stop-color="#0176ff"/><stop offset="0.3686" stop-color="#9b4fff"/><stop offset="0.4548" stop-color="#ff36fe"/><stop offset="0.4993" stop-color="#ff21d1"/><stop offset="0.5577" stop-color="#ff0fa9"/><stop offset="0.6342" stop-color="#ff0085"/><stop offset="0.7455" stop-color="#ff0064"/><stop offset="0.9096" stop-color="#ff0047"/><stop offset="1" stop-color="#ff003c"/></linearGradient><linearGradient id="cg112" gradientUnits="userSpaceOnUse" x1="1731" x2="2447"><stop offset="0" stop-color="#00a8ff"/><stop offset="0.2263" stop-color="#0273ff"/><stop offset="0.3715" stop-color="#9c4dff"/><stop offset="0.4581" stop-color="#ff34fe"/><stop offset="0.5028" stop-color="#ff20d2"/><stop offset="0.5615" stop-color="#ff0da9"/><stop offset="0.6327" stop-color="#ff0088"/><stop offset="0.7416" stop-color="#ff0067"/><stop offset="0.9022" stop-color="#ff0049"/><stop offset="1" stop-color="#ff003d"/></linearGradient><linearGradient id="cg113" gradientUnits="userSpaceOnUse" x1="1731" x2="2445"><stop offset="0" stop-color="#00a6ff"/><stop offset="0.2269" stop-color="#0171ff"/><stop offset="0.3739" stop-color="#9c4bff"/><stop offset="0.4622" stop-color="#ff32fe"/><stop offset="0.507" stop-color="#ff1ed2"/><stop offset="0.5672" stop-color="#ff0ca9"/><stop offset="0.6331" stop-color="#ff008a"/><stop offset="0.7409" stop-color="#ff0069"/><stop offset="0.8992" stop-color="#ff004b"/><stop offset="1" stop-color="#ff003e"/></linearGradient><linearGradient id="cg114" gradientUnits="userSpaceOnUse" x1="1732" x2="2443"><stop offset="0" stop-color="#00a3ff"/><stop offset="0.2264" stop-color="#016fff"/><stop offset="0.3755" stop-color="#9b49ff"/><stop offset="0.4655" stop-color="#ff2ffe"/><stop offset="0.512" stop-color="#ff1cd1"/><stop offset="0.5724" stop-color="#ff0aa9"/><stop offset="0.6315" stop-color="#ff008d"/><stop offset="0.7384" stop-color="#ff006b"/><stop offset="0.8931" stop-color="#ff004d"/><stop offset="1" stop-color="#ff003f"/></linearGradient><linearGradient id="cg115" gradientUnits="userSpaceOnUse" x1="1733" x2="2441"><stop offset="0" stop-color="#00a1ff"/><stop offset="0.2274" stop-color="#026dff"/><stop offset="0.3785" stop-color="#9c47ff"/><stop offset="0.4689" stop-color="#ff2dfe"/><stop offset="0.5155" stop-color="#ff1ad2"/><stop offset="0.5777" stop-color="#ff09a9"/><stop offset="0.6299" stop-color="#ff0090"/><stop offset="0.7345" stop-color="#ff006e"/><stop offset="0.887" stop-color="#ff004f"/><stop offset="1" stop-color="#ff0041"/></linearGradient><linearGradient id="cg116" gradientUnits="userSpaceOnUse" x1="1734" x2="2440"><stop offset="0" stop-color="#009eff"/><stop offset="0.2266" stop-color="#016bff"/><stop offset="0.3796" stop-color="#9b45ff"/><stop offset="0.4717" stop-color="#ff2bfe"/><stop offset="0.5184" stop-color="#ff19d2"/><stop offset="0.5807" stop-color="#ff07a9"/><stop offset="0.6289" stop-color="#ff0092"/><stop offset="0.7323" stop-color="#ff0070"/><stop offset="0.8824" stop-color="#ff0051"/><stop offset="1" stop-color="#ff0042"/></linearGradient><linearGradient id="cg117" gradientUnits="userSpaceOnUse" x1="1735" x2="2438"><stop offset="0" stop-color="#009cff"/><stop offset="0.2262" stop-color="#016aff"/><stop offset="0.3812" stop-color="#9b43ff"/><stop offset="0.4751" stop-color="#ff29fe"/><stop offset="0.5235" stop-color="#ff16d1"/><stop offset="0.5875" stop-color="#ff06a8"/><stop offset="0.6302" stop-color="#ff0094"/><stop offset="0.734" stop-color="#ff0071"/><stop offset="0.8834" stop-color="#ff0053"/><stop offset="1" stop-color="#ff0043"/></linearGradient><linearGradient id="cg118" gradientUnits="userSpaceOnUse" x1="1736" x2="2436"><stop offset="0" stop-color="#0099ff"/><stop offset="0.2271" stop-color="#0267ff"/><stop offset="0.3843" stop-color="#9c41ff"/><stop offset="0.4786" stop-color="#ff27fe"/><stop offset="0.5271" stop-color="#ff15d2"/><stop offset="0.5914" stop-color="#ff04a9"/><stop offset="0.6314" stop-color="#ff0096"/><stop offset="0.7343" stop-color="#ff0073"/><stop offset="0.8829" stop-color="#ff0054"/><stop offset="1" stop-color="#ff0044"/></linearGradient><linearGradient id="cg119" gradientUnits="userSpaceOnUse" x1="1737" x2="2434"><stop offset="0" stop-color="#0097ff"/><stop offset="0.2267" stop-color="#0166ff"/><stop offset="0.3859" stop-color="#9b3fff"/><stop offset="0.4821" stop-color="#ff25fe"/><stop offset="0.5308" stop-color="#ff13d2"/><stop offset="0.5954" stop-color="#ff03aa"/><stop offset="0.6385" stop-color="#ff0096"/><stop offset="0.7432" stop-color="#ff0073"/><stop offset="0.8953" stop-color="#ff0054"/><stop offset="1" stop-color="#ff0045"/></linearGradient><linearGradient id="cg120" gradientUnits="userSpaceOnUse" x1="1738" x2="2432"><stop offset="0" stop-color="#0095ff"/><stop offset="0.2262" stop-color="#0164ff"/><stop offset="0.389" stop-color="#9c3dff"/><stop offset="0.4856" stop-color="#ff23fe"/><stop offset="0.536" stop-color="#ff11d1"/><stop offset="0.6023" stop-color="#ff01a9"/><stop offset="0.6931" stop-color="#ff0084"/><stop offset="0.8199" stop-color="#ff0063"/><stop offset="1" stop-color="#ff0047"/></linearGradient><linearGradient id="cg121" gradientUnits="userSpaceOnUse" x1="1739" x2="2430"><stop offset="0" stop-color="#0092ff"/><stop offset="0.2272" stop-color="#0262ff"/><stop offset="0.3922" stop-color="#9d3bff"/><stop offset="0.4891" stop-color="#ff21fe"/><stop offset="0.5398" stop-color="#ff10d2"/><stop offset="0.6064" stop-color="#ff00a9"/><stop offset="0.6975" stop-color="#ff0084"/><stop offset="0.8263" stop-color="#ff0063"/><stop offset="1" stop-color="#ff0048"/></linearGradient><linearGradient id="cg122" gradientUnits="userSpaceOnUse" x1="1740" x2="2428"><stop offset="0" stop-color="#0090ff"/><stop offset="0.2267" stop-color="#0160ff"/><stop offset="0.3939" stop-color="#9c39ff"/><stop offset="0.4927" stop-color="#ff1ffe"/><stop offset="0.5436" stop-color="#ff0fd2"/><stop offset="0.6119" stop-color="#ff00a9"/><stop offset="0.7049" stop-color="#ff0084"/><stop offset="0.8358" stop-color="#ff0063"/><stop offset="1" stop-color="#ff0049"/></linearGradient><linearGradient id="cg123" gradientUnits="userSpaceOnUse" x1="1741" x2="2426"><stop offset="0" stop-color="#008eff"/><stop offset="0.2263" stop-color="#015fff"/><stop offset="0.3956" stop-color="#9c37ff"/><stop offset="0.4964" stop-color="#ff1dfe"/><stop offset="0.5489" stop-color="#ff0dd1"/><stop offset="0.6146" stop-color="#ff00aa"/><stop offset="0.7066" stop-color="#ff0086"/><stop offset="0.8365" stop-color="#ff0064"/><stop offset="1" stop-color="#ff004b"/></linearGradient><linearGradient id="cg124" gradientUnits="userSpaceOnUse" x1="1742" x2="2424"><stop offset="0" stop-color="#008cff"/><stop offset="0.2273" stop-color="#025dff"/><stop offset="0.3988" stop-color="#9d35ff"/><stop offset="0.5" stop-color="#ff1cfe"/><stop offset="0.5528" stop-color="#ff0bd2"/><stop offset="0.6129" stop-color="#ff00ae"/><stop offset="0.7038" stop-color="#ff0089"/><stop offset="0.8314" stop-color="#ff0067"/><stop offset="1" stop-color="#ff004c"/></linearGradient><linearGradient id="cg125" gradientUnits="userSpaceOnUse" x1="1743" x2="2422"><stop offset="0" stop-color="#008aff"/><stop offset="0.2268" stop-color="#015bff"/><stop offset="0.4006" stop-color="#9c34ff"/><stop offset="0.5037" stop-color="#ff1afe"/><stop offset="0.5567" stop-color="#ff0ad2"/><stop offset="0.6127" stop-color="#ff00b1"/><stop offset="0.7025" stop-color="#ff008b"/><stop offset="0.8292" stop-color="#ff0069"/><stop offset="1" stop-color="#ff004d"/></linearGradient><linearGradient id="cg126" gradientUnits="userSpaceOnUse" x1="1743" x2="2420"><stop offset="0" stop-color="#0088ff"/><stop offset="0.2275" stop-color="#015aff"/><stop offset="0.4032" stop-color="#9c32ff"/><stop offset="0.5081" stop-color="#ff18fe"/><stop offset="0.5628" stop-color="#ff08d1"/><stop offset="0.6115" stop-color="#ff00b4"/><stop offset="0.7001" stop-color="#ff008e"/><stop offset="0.8242" stop-color="#ff006c"/><stop offset="1" stop-color="#ff004f"/></linearGradient><linearGradient id="cg127" gradientUnits="userSpaceOnUse" x1="1744" x2="2418"><stop offset="0" stop-color="#0086ff"/><stop offset="0.2285" stop-color="#0258ff"/><stop offset="0.4065" stop-color="#9c30ff"/><stop offset="0.5119" stop-color="#ff16fe"/><stop offset="0.5668" stop-color="#ff07d2"/><stop offset="0.6113" stop-color="#ff00b7"/><stop offset="0.6988" stop-color="#ff0091"/><stop offset="0.822" stop-color="#ff006e"/><stop offset="1" stop-color="#ff0050"/></linearGradient><linearGradient id="cg128" gradientUnits="userSpaceOnUse" x1="1745" x2="2416"><stop offset="0" stop-color="#0084ff"/><stop offset="0.228" stop-color="#0157ff"/><stop offset="0.4083" stop-color="#9c2fff"/><stop offset="0.5156" stop-color="#ff15fe"/><stop offset="0.5708" stop-color="#ff06d2"/><stop offset="0.611" stop-color="#ff00ba"/><stop offset="0.699" stop-color="#ff0093"/><stop offset="0.8212" stop-color="#ff0070"/><stop offset="0.997" stop-color="#ff0052"/><stop offset="1" stop-color="#ff0051"/></linearGradient><linearGradient id="cg129" gradientUnits="userSpaceOnUse" x1="1746" x2="2414"><stop offset="0" stop-color="#0082ff"/><stop offset="0.2275" stop-color="#0155ff"/><stop offset="0.4102" stop-color="#9b2dff"/><stop offset="0.5195" stop-color="#ff13fe"/><stop offset="0.5763" stop-color="#ff04d1"/><stop offset="0.6153" stop-color="#ff00ba"/><stop offset="0.7036" stop-color="#ff0094"/><stop offset="0.8263" stop-color="#ff0071"/><stop offset="1" stop-color="#ff0053"/></linearGradient><linearGradient id="cg130" gradientUnits="userSpaceOnUse" x1="1747" x2="2412"><stop offset="0" stop-color="#0080ff"/><stop offset="0.2286" stop-color="#0253ff"/><stop offset="0.4135" stop-color="#9c2bff"/><stop offset="0.5248" stop-color="#ff11fd"/><stop offset="0.582" stop-color="#ff02d1"/><stop offset="0.6586" stop-color="#ff00a8"/><stop offset="0.7624" stop-color="#ff0083"/><stop offset="0.9083" stop-color="#ff0062"/><stop offset="1" stop-color="#ff0054"/></linearGradient><linearGradient id="cg131" gradientUnits="userSpaceOnUse" x1="1748" x2="2410"><stop offset="0" stop-color="#007eff"/><stop offset="0.2281" stop-color="#0152ff"/><stop offset="0.4154" stop-color="#9c2aff"/><stop offset="0.5287" stop-color="#ff0ffd"/><stop offset="0.5876" stop-color="#ff01d0"/><stop offset="0.6647" stop-color="#ff00a8"/><stop offset="0.7704" stop-color="#ff0083"/><stop offset="0.9199" stop-color="#ff0062"/><stop offset="1" stop-color="#ff0055"/></linearGradient><linearGradient id="cg132" gradientUnits="userSpaceOnUse" x1="1749" x2="2408"><stop offset="0" stop-color="#007cff"/><stop offset="0.2276" stop-color="#0151ff"/><stop offset="0.4173" stop-color="#9b28ff"/><stop offset="0.5326" stop-color="#ff0efd"/><stop offset="0.5918" stop-color="#ff00d0"/><stop offset="0.6707" stop-color="#ff00a8"/><stop offset="0.7769" stop-color="#ff0083"/><stop offset="0.9272" stop-color="#ff0062"/><stop offset="1" stop-color="#ff0057"/></linearGradient><linearGradient id="cg133" gradientUnits="userSpaceOnUse" x1="1750" x2="2406"><stop offset="0" stop-color="#007aff"/><stop offset="0.2287" stop-color="#024fff"/><stop offset="0.4207" stop-color="#9c27ff"/><stop offset="0.5366" stop-color="#ff0cfd"/><stop offset="0.596" stop-color="#ff00d1"/><stop offset="0.6753" stop-color="#ff00a8"/><stop offset="0.7835" stop-color="#ff0083"/><stop offset="0.936" stop-color="#ff0062"/><stop offset="1" stop-color="#ff0058"/></linearGradient><linearGradient id="cg134" gradientUnits="userSpaceOnUse" x1="1751" x2="2404"><stop offset="0" stop-color="#0078ff"/><stop offset="0.2282" stop-color="#014eff"/><stop offset="0.4227" stop-color="#9b25ff"/><stop offset="0.5406" stop-color="#ff0bfd"/><stop offset="0.5957" stop-color="#ff00d4"/><stop offset="0.6738" stop-color="#ff00ab"/><stop offset="0.7795" stop-color="#ff0086"/><stop offset="0.928" stop-color="#ff0065"/><stop offset="1" stop-color="#ff005a"/></linearGradient><linearGradient id="cg135" gradientUnits="userSpaceOnUse" x1="1752" x2="2403"><stop offset="0" stop-color="#0076ff"/><stop offset="0.2273" stop-color="#014cff"/><stop offset="0.424" stop-color="#9b24ff"/><stop offset="0.5438" stop-color="#ff09fd"/><stop offset="0.5945" stop-color="#ff00d7"/><stop offset="0.6713" stop-color="#ff00ae"/><stop offset="0.7757" stop-color="#ff0089"/><stop offset="0.9232" stop-color="#ff0067"/><stop offset="1" stop-color="#ff005b"/></linearGradient><linearGradient id="cg136" gradientUnits="userSpaceOnUse" x1="1753" x2="2401"><stop offset="0" stop-color="#0074ff"/><stop offset="0.2284" stop-color="#024bff"/><stop offset="0.4275" stop-color="#9c22ff"/><stop offset="0.5478" stop-color="#ff08fd"/><stop offset="0.5926" stop-color="#ff00dc"/><stop offset="0.6682" stop-color="#ff00b2"/><stop offset="0.7716" stop-color="#ff008c"/><stop offset="0.9151" stop-color="#ff006a"/><stop offset="1" stop-color="#ff005c"/></linearGradient><linearGradient id="cg137" gradientUnits="userSpaceOnUse" x1="1754" x2="2399"><stop offset="0" stop-color="#0073ff"/><stop offset="0.2279" stop-color="#014aff"/><stop offset="0.431" stop-color="#9c21ff"/><stop offset="0.5519" stop-color="#ff06fd"/><stop offset="0.5922" stop-color="#ff00df"/><stop offset="0.6682" stop-color="#ff00b5"/><stop offset="0.7705" stop-color="#ff008f"/><stop offset="0.9132" stop-color="#ff006c"/><stop offset="1" stop-color="#ff005e"/></linearGradient><linearGradient id="cg138" gradientUnits="userSpaceOnUse" x1="1755" x2="2397"><stop offset="0" stop-color="#0071ff"/><stop offset="0.2274" stop-color="#0148ff"/><stop offset="0.433" stop-color="#9c1fff"/><stop offset="0.5561" stop-color="#ff05fd"/><stop offset="0.5919" stop-color="#ff00e2"/><stop offset="0.6667" stop-color="#ff00b8"/><stop offset="0.7679" stop-color="#ff0092"/><stop offset="0.9081" stop-color="#ff006f"/><stop offset="1" stop-color="#ff005f"/></linearGradient><linearGradient id="cg139" gradientUnits="userSpaceOnUse" x1="1756" x2="2395"><stop offset="0" stop-color="#006fff"/><stop offset="0.2285" stop-color="#0247ff"/><stop offset="0.4366" stop-color="#9d1eff"/><stop offset="0.5603" stop-color="#ff03fd"/><stop offset="0.5978" stop-color="#ff00e1"/><stop offset="0.6745" stop-color="#ff00b7"/><stop offset="0.7778" stop-color="#ff0091"/><stop offset="0.9218" stop-color="#ff006e"/><stop offset="1" stop-color="#ff0061"/></linearGradient><linearGradient id="cg140" gradientUnits="userSpaceOnUse" x1="1757" x2="2393"><stop offset="0" stop-color="#006eff"/><stop offset="0.228" stop-color="#0146ff"/><stop offset="0.4387" stop-color="#9c1dff"/><stop offset="0.5645" stop-color="#ff02fd"/><stop offset="0.6289" stop-color="#ff00d1"/><stop offset="0.7154" stop-color="#ff00a8"/><stop offset="0.8333" stop-color="#ff0083"/><stop offset="0.9984" stop-color="#ff0063"/><stop offset="1" stop-color="#ff0062"/></linearGradient><linearGradient id="cg141" gradientUnits="userSpaceOnUse" x1="1758" x2="2391"><stop offset="0" stop-color="#006cff"/><stop offset="0.2275" stop-color="#0144ff"/><stop offset="0.4408" stop-color="#9c1bff"/><stop offset="0.5687" stop-color="#ff01fd"/><stop offset="0.6351" stop-color="#ff00d1"/><stop offset="0.722" stop-color="#ff00a8"/><stop offset="0.8404" stop-color="#ff0083"/><stop offset="1" stop-color="#ff0064"/></linearGradient><linearGradient id="cg142" gradientUnits="userSpaceOnUse" x1="1760" x2="2389"><stop offset="0" stop-color="#006aff"/><stop offset="0.2273" stop-color="#0243ff"/><stop offset="0.4436" stop-color="#9c1aff"/><stop offset="0.5723" stop-color="#ff00fd"/><stop offset="0.6391" stop-color="#ff00d1"/><stop offset="0.7281" stop-color="#ff00a8"/><stop offset="0.849" stop-color="#ff0083"/><stop offset="1" stop-color="#ff0065"/></linearGradient><linearGradient id="cg143" gradientUnits="userSpaceOnUse" x1="1761" x2="2387"><stop offset="0" stop-color="#0068ff"/><stop offset="0.2268" stop-color="#0142ff"/><stop offset="0.4457" stop-color="#9c19ff"/><stop offset="0.5767" stop-color="#ff00fd"/><stop offset="0.6438" stop-color="#ff00d1"/><stop offset="0.7332" stop-color="#ff00a9"/><stop offset="0.8546" stop-color="#ff0084"/><stop offset="1" stop-color="#ff0067"/></linearGradient><linearGradient id="cg144" gradientUnits="userSpaceOnUse" x1="1762" x2="2385"><stop offset="0" stop-color="#0067ff"/><stop offset="0.2263" stop-color="#0141ff"/><stop offset="0.4478" stop-color="#9c18ff"/><stop offset="0.5746" stop-color="#fc00ff"/><stop offset="0.5859" stop-color="#ff00fa"/><stop offset="0.6565" stop-color="#ff00cd"/><stop offset="0.7496" stop-color="#ff00a5"/><stop offset="0.8764" stop-color="#ff0080"/><stop offset="1" stop-color="#ff0068"/></linearGradient><linearGradient id="cg145" gradientUnits="userSpaceOnUse" x1="1763" x2="2383"><stop offset="0" stop-color="#0065ff"/><stop offset="0.2274" stop-color="#023fff"/><stop offset="0.4516" stop-color="#9c16ff"/><stop offset="0.5742" stop-color="#f800ff"/><stop offset="0.5871" stop-color="#ff00fc"/><stop offset="0.6565" stop-color="#ff00d0"/><stop offset="0.7484" stop-color="#ff00a8"/><stop offset="0.8742" stop-color="#ff0083"/><stop offset="1" stop-color="#ff006a"/></linearGradient><linearGradient id="cg146" gradientUnits="userSpaceOnUse" x1="1764" x2="2381"><stop offset="0" stop-color="#0064ff"/><stop offset="0.2269" stop-color="#013eff"/><stop offset="0.4538" stop-color="#9c15ff"/><stop offset="0.5721" stop-color="#f300ff"/><stop offset="0.59" stop-color="#ff00fd"/><stop offset="0.6596" stop-color="#ff00d1"/><stop offset="0.752" stop-color="#ff00a9"/><stop offset="0.8784" stop-color="#ff0084"/><stop offset="1" stop-color="#ff006c"/></linearGradient><linearGradient id="cg147" gradientUnits="userSpaceOnUse" x1="1765" x2="2379"><stop offset="0" stop-color="#0062ff"/><stop offset="0.2264" stop-color="#013dff"/><stop offset="0.456" stop-color="#9b14ff"/><stop offset="0.57" stop-color="#ee00ff"/><stop offset="0.5945" stop-color="#ff00fd"/><stop offset="0.6661" stop-color="#ff00d1"/><stop offset="0.7606" stop-color="#ff00a8"/><stop offset="0.8893" stop-color="#ff0083"/><stop offset="1" stop-color="#ff006d"/></linearGradient><linearGradient id="cg148" gradientUnits="userSpaceOnUse" x1="1766" x2="2377"><stop offset="0" stop-color="#0061ff"/><stop offset="0.2275" stop-color="#023cff"/><stop offset="0.4599" stop-color="#9c13ff"/><stop offset="0.5679" stop-color="#ea00ff"/><stop offset="0.599" stop-color="#ff00fd"/><stop offset="0.671" stop-color="#ff00d1"/><stop offset="0.766" stop-color="#ff00a8"/><stop offset="0.8953" stop-color="#ff0084"/><stop offset="1" stop-color="#ff006f"/></linearGradient><linearGradient id="cg149" gradientUnits="userSpaceOnUse" x1="1767" x2="2375"><stop offset="0" stop-color="#005fff"/><stop offset="0.227" stop-color="#013bff"/><stop offset="0.4622" stop-color="#9c12ff"/><stop offset="0.5658" stop-color="#e500ff"/><stop offset="0.6036" stop-color="#ff00fe"/><stop offset="0.676" stop-color="#ff00d1"/><stop offset="0.773" stop-color="#ff00a8"/><stop offset="0.9046" stop-color="#ff0083"/><stop offset="1" stop-color="#ff0071"/></linearGradient><linearGradient id="cg150" gradientUnits="userSpaceOnUse" x1="1768" x2="2373"><stop offset="0" stop-color="#005eff"/><stop offset="0.2264" stop-color="#013aff"/><stop offset="0.4645" stop-color="#9b10ff"/><stop offset="0.5636" stop-color="#e000ff"/><stop offset="0.6083" stop-color="#ff00fe"/><stop offset="0.6826" stop-color="#ff00d1"/><stop offset="0.7802" stop-color="#ff00a8"/><stop offset="0.914" stop-color="#ff0083"/><stop offset="1" stop-color="#ff0072"/></linearGradient><linearGradient id="cg151" gradientUnits="userSpaceOnUse" x1="1769" x2="2371"><stop offset="0" stop-color="#005cff"/><stop offset="0.2276" stop-color="#0239ff"/><stop offset="0.4684" stop-color="#9c0fff"/><stop offset="0.5615" stop-color="#dc00ff"/><stop offset="0.613" stop-color="#ff00fe"/><stop offset="0.6877" stop-color="#ff00d1"/><stop offset="0.7874" stop-color="#ff00a8"/><stop offset="0.9219" stop-color="#ff0083"/><stop offset="1" stop-color="#ff0074"/></linearGradient><linearGradient id="cg152" gradientUnits="userSpaceOnUse" x1="1770" x2="2369"><stop offset="0" stop-color="#005bff"/><stop offset="0.227" stop-color="#0138ff"/><stop offset="0.4708" stop-color="#9b0eff"/><stop offset="0.5609" stop-color="#d900ff"/><stop offset="0.6177" stop-color="#ff00fe"/><stop offset="0.6928" stop-color="#ff00d1"/><stop offset="0.793" stop-color="#ff00a9"/><stop offset="0.9299" stop-color="#ff0083"/><stop offset="1" stop-color="#ff0076"/></linearGradient><linearGradient id="cg153" gradientUnits="userSpaceOnUse" x1="1771" x2="2368"><stop offset="0" stop-color="#0059ff"/><stop offset="0.2278" stop-color="#0236ff"/><stop offset="0.474" stop-color="#9c0dff"/><stop offset="0.5578" stop-color="#d400ff"/><stop offset="0.6214" stop-color="#ff00fe"/><stop offset="0.6985" stop-color="#ff00d1"/><stop offset="0.8007" stop-color="#ff00a8"/><stop offset="0.9397" stop-color="#ff0083"/><stop offset="1" stop-color="#ff0077"/></linearGradient><linearGradient id="cg154" gradientUnits="userSpaceOnUse" x1="1773" x2="2366"><stop offset="0" stop-color="#0058ff"/><stop offset="0.226" stop-color="#0235ff"/><stop offset="0.4772" stop-color="#9d0cff"/><stop offset="0.5548" stop-color="#d000ff"/><stop offset="0.6256" stop-color="#ff00fe"/><stop offset="0.7032" stop-color="#ff00d1"/><stop offset="0.8061" stop-color="#ff00a8"/><stop offset="0.946" stop-color="#ff0083"/><stop offset="1" stop-color="#ff0079"/></linearGradient><linearGradient id="cg155" gradientUnits="userSpaceOnUse" x1="1774" x2="2364"><stop offset="0" stop-color="#0056ff"/><stop offset="0.2254" stop-color="#0135ff"/><stop offset="0.4797" stop-color="#9c0bff"/><stop offset="0.5525" stop-color="#cc00ff"/><stop offset="0.6305" stop-color="#ff00fe"/><stop offset="0.7085" stop-color="#ff00d1"/><stop offset="0.8119" stop-color="#ff00a9"/><stop offset="0.9525" stop-color="#ff0084"/><stop offset="1" stop-color="#ff007a"/></linearGradient><linearGradient id="cg156" gradientUnits="userSpaceOnUse" x1="1775" x2="2362"><stop offset="0" stop-color="#0055ff"/><stop offset="0.2266" stop-color="#0233ff"/><stop offset="0.4838" stop-color="#9d09ff"/><stop offset="0.552" stop-color="#c900ff"/><stop offset="0.6354" stop-color="#ff00fe"/><stop offset="0.7155" stop-color="#ff00d1"/><stop offset="0.8211" stop-color="#ff00a8"/><stop offset="0.9642" stop-color="#ff0083"/><stop offset="1" stop-color="#ff007c"/></linearGradient><linearGradient id="cg157" gradientUnits="userSpaceOnUse" x1="1776" x2="2360"><stop offset="0" stop-color="#0054ff"/><stop offset="0.226" stop-color="#0232ff"/><stop offset="0.4863" stop-color="#9d08ff"/><stop offset="0.5497" stop-color="#c500ff"/><stop offset="0.6404" stop-color="#ff00fe"/><stop offset="0.7209" stop-color="#ff00d1"/><stop offset="0.8271" stop-color="#ff00a8"/><stop offset="0.9726" stop-color="#ff0083"/><stop offset="1" stop-color="#ff007e"/></linearGradient><linearGradient id="cg158" gradientUnits="userSpaceOnUse" x1="1777" x2="2358"><stop offset="0" stop-color="#0052ff"/><stop offset="0.2255" stop-color="#0132ff"/><stop offset="0.4888" stop-color="#9c07ff"/><stop offset="0.5491" stop-color="#c200ff"/><stop offset="0.6454" stop-color="#ff00fe"/><stop offset="0.7263" stop-color="#ff00d1"/><stop offset="0.833" stop-color="#ff00a9"/><stop offset="0.9793" stop-color="#ff0084"/><stop offset="1" stop-color="#ff0080"/></linearGradient><linearGradient id="cg159" gradientUnits="userSpaceOnUse" x1="1778" x2="2356"><stop offset="0" stop-color="#0051ff"/><stop offset="0.2266" stop-color="#0230ff"/><stop offset="0.4931" stop-color="#9d06ff"/><stop offset="0.5484" stop-color="#bf00ff"/><stop offset="0.6505" stop-color="#ff00fe"/><stop offset="0.7336" stop-color="#ff00d1"/><stop offset="0.8426" stop-color="#ff00a8"/><stop offset="0.9913" stop-color="#ff0083"/><stop offset="1" stop-color="#ff0082"/></linearGradient><linearGradient id="cg160" gradientUnits="userSpaceOnUse" x1="1779" x2="2354"><stop offset="0" stop-color="#0050ff"/><stop offset="0.2261" stop-color="#022fff"/><stop offset="0.4957" stop-color="#9c05ff"/><stop offset="0.5478" stop-color="#bc00ff"/><stop offset="0.6557" stop-color="#ff00fe"/><stop offset="0.7391" stop-color="#ff00d1"/><stop offset="0.8487" stop-color="#ff00a9"/><stop offset="0.9983" stop-color="#ff0084"/><stop offset="1" stop-color="#ff0083"/></linearGradient><linearGradient id="cg161" gradientUnits="userSpaceOnUse" x1="1780" x2="2352"><stop offset="0" stop-color="#004eff"/><stop offset="0.2255" stop-color="#012fff"/><stop offset="0.4983" stop-color="#9c05ff"/><stop offset="0.5472" stop-color="#ba00ff"/><stop offset="0.6608" stop-color="#ff00fe"/><stop offset="0.7448" stop-color="#ff00d1"/><stop offset="0.8566" stop-color="#ff00a9"/><stop offset="1" stop-color="#ff0085"/></linearGradient><linearGradient id="cg162" gradientUnits="userSpaceOnUse" x1="1782" x2="2350"><stop offset="0" stop-color="#004dff"/><stop offset="0.2254" stop-color="#022eff"/><stop offset="0.5018" stop-color="#9d03ff"/><stop offset="0.5528" stop-color="#bb00ff"/><stop offset="0.6655" stop-color="#ff00fe"/><stop offset="0.7518" stop-color="#ff00d1"/><stop offset="0.8644" stop-color="#ff00a8"/><stop offset="1" stop-color="#ff0087"/></linearGradient><linearGradient id="cg163" gradientUnits="userSpaceOnUse" x1="1783" x2="2348"><stop offset="0" stop-color="#004cff"/><stop offset="0.2248" stop-color="#022dff"/><stop offset="0.5044" stop-color="#9c02ff"/><stop offset="0.5841" stop-color="#cb00ff"/><stop offset="0.6708" stop-color="#ff00fe"/><stop offset="0.7575" stop-color="#ff00d1"/><stop offset="0.8726" stop-color="#ff00a8"/><stop offset="1" stop-color="#ff0089"/></linearGradient><linearGradient id="cg164" gradientUnits="userSpaceOnUse" x1="1784" x2="2346"><stop offset="0" stop-color="#004aff"/><stop offset="0.2242" stop-color="#012cff"/><stop offset="0.5071" stop-color="#9c02ff"/><stop offset="0.6762" stop-color="#ff00fe"/><stop offset="0.7633" stop-color="#ff00d1"/><stop offset="0.879" stop-color="#ff00a9"/><stop offset="1" stop-color="#ff008b"/></linearGradient><linearGradient id="cg165" gradientUnits="userSpaceOnUse" x1="1785" x2="2344"><stop offset="0" stop-color="#0049ff"/><stop offset="0.2254" stop-color="#022bff"/><stop offset="0.5116" stop-color="#9c01ff"/><stop offset="0.6816" stop-color="#ff00fe"/><stop offset="0.771" stop-color="#ff00d1"/><stop offset="0.8891" stop-color="#ff00a8"/><stop offset="1" stop-color="#ff008d"/></linearGradient><linearGradient id="cg166" gradientUnits="userSpaceOnUse" x1="1786" x2="2342"><stop offset="0" stop-color="#0048ff"/><stop offset="0.2248" stop-color="#022aff"/><stop offset="0.5144" stop-color="#9c00ff"/><stop offset="0.6871" stop-color="#ff00fe"/><stop offset="0.777" stop-color="#ff00d1"/><stop offset="0.8957" stop-color="#ff00a8"/><stop offset="1" stop-color="#ff008f"/></linearGradient><linearGradient id="cg167" gradientUnits="userSpaceOnUse" x1="1787" x2="2340"><stop offset="0" stop-color="#0047ff"/><stop offset="0.2242" stop-color="#0129ff"/><stop offset="0.5172" stop-color="#9c00ff"/><stop offset="0.6926" stop-color="#ff00fe"/><stop offset="0.783" stop-color="#ff00d1"/><stop offset="0.9024" stop-color="#ff00a9"/><stop offset="1" stop-color="#ff0091"/></linearGradient><linearGradient id="cg168" gradientUnits="userSpaceOnUse" x1="1788" x2="2338"><stop offset="0" stop-color="#0046ff"/><stop offset="0.2255" stop-color="#0228ff"/><stop offset="0.5218" stop-color="#9c00ff"/><stop offset="0.6982" stop-color="#ff00fe"/><stop offset="0.7909" stop-color="#ff00d1"/><stop offset="0.9127" stop-color="#ff00a8"/><stop offset="1" stop-color="#ff0093"/></linearGradient><linearGradient id="cg169" gradientUnits="userSpaceOnUse" x1="1790" x2="2336"><stop offset="0" stop-color="#0044ff"/><stop offset="0.2234" stop-color="#0227ff"/><stop offset="0.5183" stop-color="#9900ff"/><stop offset="0.7033" stop-color="#ff00fe"/><stop offset="0.7967" stop-color="#ff00d1"/><stop offset="0.9194" stop-color="#ff00a9"/><stop offset="1" stop-color="#ff0095"/></linearGradient><linearGradient id="cg170" gradientUnits="userSpaceOnUse" x1="1791" x2="2334"><stop offset="0" stop-color="#0043ff"/><stop offset="0.2228" stop-color="#0127ff"/><stop offset="0.5157" stop-color="#9600ff"/><stop offset="0.709" stop-color="#ff00fe"/><stop offset="0.8029" stop-color="#ff00d1"/><stop offset="0.9282" stop-color="#ff00a9"/><stop offset="1" stop-color="#ff0097"/></linearGradient><linearGradient id="cg171" gradientUnits="userSpaceOnUse" x1="1792" x2="2333"><stop offset="0" stop-color="#0042ff"/><stop offset="0.2237" stop-color="#0226ff"/><stop offset="0.512" stop-color="#9200ff"/><stop offset="0.7135" stop-color="#ff00fe"/><stop offset="0.8096" stop-color="#ff00d1"/><stop offset="0.9353" stop-color="#ff00a8"/><stop offset="1" stop-color="#ff0099"/></linearGradient><linearGradient id="cg172" gradientUnits="userSpaceOnUse" x1="1793" x2="2331"><stop offset="0" stop-color="#0041ff"/><stop offset="0.223" stop-color="#0225ff"/><stop offset="0.5093" stop-color="#8f00ff"/><stop offset="0.7212" stop-color="#ff00fd"/><stop offset="0.8178" stop-color="#ff00d1"/><stop offset="0.9461" stop-color="#ff00a8"/><stop offset="1" stop-color="#ff009b"/></linearGradient><linearGradient id="cg173" gradientUnits="userSpaceOnUse" x1="1794" x2="2329"><stop offset="0" stop-color="#0040ff"/><stop offset="0.2224" stop-color="#0124ff"/><stop offset="0.5065" stop-color="#8c00ff"/><stop offset="0.7271" stop-color="#ff00fd"/><stop offset="0.8243" stop-color="#ff00d1"/><stop offset="0.9533" stop-color="#ff00a8"/><stop offset="1" stop-color="#ff009d"/></linearGradient><linearGradient id="cg174" gradientUnits="userSpaceOnUse" x1="1795" x2="2327"><stop offset="0" stop-color="#003fff"/><stop offset="0.2237" stop-color="#0223ff"/><stop offset="0.5038" stop-color="#8900ff"/><stop offset="0.7331" stop-color="#ff00fd"/><stop offset="0.8327" stop-color="#ff00d0"/><stop offset="0.9643" stop-color="#ff00a8"/><stop offset="1" stop-color="#ff009f"/></linearGradient><linearGradient id="cg175" gradientUnits="userSpaceOnUse" x1="1797" x2="2325"><stop offset="0" stop-color="#003dff"/><stop offset="0.2216" stop-color="#0223ff"/><stop offset="0.5" stop-color="#8600ff"/><stop offset="0.7386" stop-color="#ff00fd"/><stop offset="0.839" stop-color="#ff00d1"/><stop offset="0.9716" stop-color="#ff00a8"/><stop offset="1" stop-color="#ff00a1"/></linearGradient><linearGradient id="cg176" gradientUnits="userSpaceOnUse" x1="1798" x2="2323"><stop offset="0" stop-color="#003cff"/><stop offset="0.221" stop-color="#0122ff"/><stop offset="0.499" stop-color="#8400ff"/><stop offset="0.7448" stop-color="#ff00fd"/><stop offset="0.8457" stop-color="#ff00d1"/><stop offset="0.981" stop-color="#ff00a8"/><stop offset="1" stop-color="#ff00a3"/></linearGradient><linearGradient id="cg177" gradientUnits="userSpaceOnUse" x1="1799" x2="2321"><stop offset="0" stop-color="#003bff"/><stop offset="0.2222" stop-color="#0221ff"/><stop offset="0.4962" stop-color="#8100ff"/><stop offset="0.751" stop-color="#ff00fd"/><stop offset="0.8544" stop-color="#ff00d0"/><stop offset="0.9904" stop-color="#ff00a8"/><stop offset="1" stop-color="#ff00a5"/></linearGradient><linearGradient id="cg178" gradientUnits="userSpaceOnUse" x1="1800" x2="2319"><stop offset="0" stop-color="#003aff"/><stop offset="0.2216" stop-color="#0220ff"/><stop offset="0.4933" stop-color="#7e00ff"/><stop offset="0.7572" stop-color="#ff00fd"/><stop offset="0.8613" stop-color="#ff00d1"/><stop offset="1" stop-color="#ff00a8"/></linearGradient><linearGradient id="cg179" gradientUnits="userSpaceOnUse" x1="1801" x2="2317"><stop offset="0" stop-color="#0039ff"/><stop offset="0.2209" stop-color="#0120ff"/><stop offset="0.4903" stop-color="#7b00ff"/><stop offset="0.7636" stop-color="#ff00fd"/><stop offset="0.8682" stop-color="#ff00d1"/><stop offset="1" stop-color="#ff00aa"/></linearGradient><linearGradient id="cg180" gradientUnits="userSpaceOnUse" x1="1803" x2="2315"><stop offset="0" stop-color="#0038ff"/><stop offset="0.2207" stop-color="#021fff"/><stop offset="0.4863" stop-color="#7800ff"/><stop offset="0.7695" stop-color="#ff00fd"/><stop offset="0.877" stop-color="#ff00d0"/><stop offset="1" stop-color="#ff00ac"/></linearGradient><linearGradient id="cg181" gradientUnits="userSpaceOnUse" x1="1804" x2="2313"><stop offset="0" stop-color="#0037ff"/><stop offset="0.22" stop-color="#021eff"/><stop offset="0.4833" stop-color="#7500ff"/><stop offset="0.776" stop-color="#ff00fd"/><stop offset="0.8841" stop-color="#ff00d1"/><stop offset="1" stop-color="#ff00ae"/></linearGradient><linearGradient id="cg182" gradientUnits="userSpaceOnUse" x1="1805" x2="2311"><stop offset="0" stop-color="#0036ff"/><stop offset="0.2194" stop-color="#011dff"/><stop offset="0.4802" stop-color="#7200ff"/><stop offset="0.7826" stop-color="#ff00fd"/><stop offset="0.8913" stop-color="#ff00d1"/><stop offset="1" stop-color="#ff00b1"/></linearGradient><linearGradient id="cg183" gradientUnits="userSpaceOnUse" x1="1806" x2="2309"><stop offset="0" stop-color="#0035ff"/><stop offset="0.2207" stop-color="#021dff"/><stop offset="0.4771" stop-color="#7000ff"/><stop offset="0.7893" stop-color="#ff00fd"/><stop offset="0.9006" stop-color="#ff00d0"/><stop offset="1" stop-color="#ff00b3"/></linearGradient><linearGradient id="cg184" gradientUnits="userSpaceOnUse" x1="1807" x2="2307"><stop offset="0" stop-color="#0034ff"/><stop offset="0.22" stop-color="#021cff"/><stop offset="0.474" stop-color="#6d00ff"/><stop offset="0.796" stop-color="#ff00fd"/><stop offset="0.908" stop-color="#ff00d1"/><stop offset="1" stop-color="#ff00b6"/></linearGradient><linearGradient id="cg185" gradientUnits="userSpaceOnUse" x1="1809" x2="2305"><stop offset="0" stop-color="#0033ff"/><stop offset="0.2177" stop-color="#011bff"/><stop offset="0.4718" stop-color="#6b00ff"/><stop offset="0.8024" stop-color="#ff00fd"/><stop offset="0.9153" stop-color="#ff00d1"/><stop offset="1" stop-color="#ff00b8"/></linearGradient><linearGradient id="cg186" gradientUnits="userSpaceOnUse" x1="1810" x2="2303"><stop offset="0" stop-color="#0032ff"/><stop offset="0.2191" stop-color="#021aff"/><stop offset="0.4686" stop-color="#6800ff"/><stop offset="0.8093" stop-color="#ff00fd"/><stop offset="0.9249" stop-color="#ff00d0"/><stop offset="1" stop-color="#ff00ba"/></linearGradient><linearGradient id="cg187" gradientUnits="userSpaceOnUse" x1="1811" x2="2301"><stop offset="0" stop-color="#0031ff"/><stop offset="0.2184" stop-color="#021aff"/><stop offset="0.4653" stop-color="#6600ff"/><stop offset="0.8163" stop-color="#ff00fd"/><stop offset="0.9327" stop-color="#ff00d1"/><stop offset="1" stop-color="#ff00bd"/></linearGradient><linearGradient id="cg188" gradientUnits="userSpaceOnUse" x1="1812" x2="2299"><stop offset="0" stop-color="#0030ff"/><stop offset="0.2177" stop-color="#0119ff"/><stop offset="0.462" stop-color="#6300ff"/><stop offset="0.8234" stop-color="#ff00fd"/><stop offset="0.9405" stop-color="#ff00d1"/><stop offset="1" stop-color="#ff00bf"/></linearGradient><linearGradient id="cg189" gradientUnits="userSpaceOnUse" x1="1814" x2="2297"><stop offset="0" stop-color="#002fff"/><stop offset="0.2174" stop-color="#0218ff"/><stop offset="0.4576" stop-color="#6100ff"/><stop offset="0.824" stop-color="#fe00ff"/><stop offset="0.9607" stop-color="#ff00cd"/><stop offset="1" stop-color="#ff00c2"/></linearGradient><linearGradient id="cg190" gradientUnits="userSpaceOnUse" x1="1815" x2="2296"><stop offset="0" stop-color="#002eff"/><stop offset="0.2162" stop-color="#0218ff"/><stop offset="0.4532" stop-color="#5e00ff"/><stop offset="0.8233" stop-color="#fb00ff"/><stop offset="0.842" stop-color="#ff00fb"/><stop offset="0.9647" stop-color="#ff00ce"/><stop offset="1" stop-color="#ff00c4"/></linearGradient><linearGradient id="cg191" gradientUnits="userSpaceOnUse" x1="1816" x2="2294"><stop offset="0" stop-color="#002dff"/><stop offset="0.2155" stop-color="#0117ff"/><stop offset="0.4498" stop-color="#5c00ff"/><stop offset="0.8243" stop-color="#f800ff"/><stop offset="0.8452" stop-color="#ff00fc"/><stop offset="0.9686" stop-color="#ff00d0"/><stop offset="1" stop-color="#ff00c7"/></linearGradient><linearGradient id="cg192" gradientUnits="userSpaceOnUse" x1="1817" x2="2292"><stop offset="0" stop-color="#002cff"/><stop offset="0.2168" stop-color="#0216ff"/><stop offset="0.4463" stop-color="#5900ff"/><stop offset="0.8274" stop-color="#f700ff"/><stop offset="0.8526" stop-color="#ff00fd"/><stop offset="0.9768" stop-color="#ff00d0"/><stop offset="1" stop-color="#ff00c9"/></linearGradient><linearGradient id="cg193" gradientUnits="userSpaceOnUse" x1="1818" x2="2290"><stop offset="0" stop-color="#002bff"/><stop offset="0.2161" stop-color="#0216ff"/><stop offset="0.4428" stop-color="#5700ff"/><stop offset="0.8284" stop-color="#f400ff"/><stop offset="0.8602" stop-color="#ff00fd"/><stop offset="0.9852" stop-color="#ff00d0"/><stop offset="1" stop-color="#ff00cc"/></linearGradient><linearGradient id="cg194" gradientUnits="userSpaceOnUse" x1="1820" x2="2288"><stop offset="0" stop-color="#002aff"/><stop offset="0.2137" stop-color="#0115ff"/><stop offset="0.438" stop-color="#5400ff"/><stop offset="0.8291" stop-color="#f100ff"/><stop offset="0.8654" stop-color="#ff00fd"/><stop offset="0.9915" stop-color="#ff00d1"/><stop offset="1" stop-color="#ff00ce"/></linearGradient><linearGradient id="cg195" gradientUnits="userSpaceOnUse" x1="1821" x2="2286"><stop offset="0" stop-color="#002aff"/><stop offset="0.2151" stop-color="#0215ff"/><stop offset="0.4366" stop-color="#5300ff"/><stop offset="0.8323" stop-color="#ef00ff"/><stop offset="0.8731" stop-color="#ff00fd"/><stop offset="1" stop-color="#ff00d1"/></linearGradient><linearGradient id="cg196" gradientUnits="userSpaceOnUse" x1="1822" x2="2284"><stop offset="0" stop-color="#0029ff"/><stop offset="0.2143" stop-color="#0214ff"/><stop offset="0.4329" stop-color="#5100ff"/><stop offset="0.8333" stop-color="#ed00ff"/><stop offset="0.881" stop-color="#ff00fd"/><stop offset="1" stop-color="#ff00d4"/></linearGradient><linearGradient id="cg197" gradientUnits="userSpaceOnUse" x1="1823" x2="2282"><stop offset="0" stop-color="#0028ff"/><stop offset="0.2135" stop-color="#0113ff"/><stop offset="0.4292" stop-color="#4e00ff"/><stop offset="0.8366" stop-color="#eb00ff"/><stop offset="0.8889" stop-color="#ff00fe"/><stop offset="1" stop-color="#ff00d7"/></linearGradient><linearGradient id="cg198" gradientUnits="userSpaceOnUse" x1="1825" x2="2280"><stop offset="0" stop-color="#0027ff"/><stop offset="0.2132" stop-color="#0213ff"/><stop offset="0.4242" stop-color="#4c00ff"/><stop offset="0.8374" stop-color="#e900ff"/><stop offset="0.8967" stop-color="#ff00fe"/><stop offset="1" stop-color="#ff00da"/></linearGradient><linearGradient id="cg199" gradientUnits="userSpaceOnUse" x1="1826" x2="2278"><stop offset="0" stop-color="#0026ff"/><stop offset="0.2124" stop-color="#0212ff"/><stop offset="0.4204" stop-color="#4a00ff"/><stop offset="0.8385" stop-color="#e600ff"/><stop offset="0.9049" stop-color="#ff00fe"/><stop offset="1" stop-color="#ff00dc"/></linearGradient><linearGradient id="cg200" gradientUnits="userSpaceOnUse" x1="1827" x2="2276"><stop offset="0" stop-color="#0025ff"/><stop offset="0.2116" stop-color="#0112ff"/><stop offset="0.4165" stop-color="#4800ff"/><stop offset="0.8396" stop-color="#e400ff"/><stop offset="0.9131" stop-color="#ff00fe"/><stop offset="1" stop-color="#ff00df"/></linearGradient><linearGradient id="cg201" gradientUnits="userSpaceOnUse" x1="1829" x2="2274"><stop offset="0" stop-color="#0024ff"/><stop offset="0.2112" stop-color="#0211ff"/><stop offset="0.4112" stop-color="#4500ff"/><stop offset="0.8427" stop-color="#e200ff"/><stop offset="0.9213" stop-color="#ff00fe"/><stop offset="1" stop-color="#ff00e2"/></linearGradient><linearGradient id="cg202" gradientUnits="userSpaceOnUse" x1="1830" x2="2272"><stop offset="0" stop-color="#0023ff"/><stop offset="0.2104" stop-color="#0210ff"/><stop offset="0.4095" stop-color="#4400ff"/><stop offset="0.8462" stop-color="#e100ff"/><stop offset="0.9299" stop-color="#ff00fe"/><stop offset="1" stop-color="#ff00e5"/></linearGradient><linearGradient id="cg203" gradientUnits="userSpaceOnUse" x1="1831" x2="2270"><stop offset="0" stop-color="#0023ff"/><stop offset="0.2096" stop-color="#0110ff"/><stop offset="0.4055" stop-color="#4200ff"/><stop offset="0.8474" stop-color="#de00ff"/><stop offset="0.9385" stop-color="#ff00fe"/><stop offset="1" stop-color="#ff00e8"/></linearGradient><linearGradient id="cg204" gradientUnits="userSpaceOnUse" x1="1832" x2="2268"><stop offset="0" stop-color="#0022ff"/><stop offset="0.211" stop-color="#020fff"/><stop offset="0.4014" stop-color="#4000ff"/><stop offset="0.8486" stop-color="#dc00ff"/><stop offset="0.9472" stop-color="#ff00fe"/><stop offset="1" stop-color="#ff00eb"/></linearGradient><linearGradient id="cg205" gradientUnits="userSpaceOnUse" x1="1834" x2="2266"><stop offset="0" stop-color="#0021ff"/><stop offset="0.2083" stop-color="#020fff"/><stop offset="0.3958" stop-color="#3e00ff"/><stop offset="0.8495" stop-color="#d900ff"/><stop offset="0.956" stop-color="#ff00fe"/><stop offset="1" stop-color="#ff00ee"/></linearGradient><linearGradient id="cg206" gradientUnits="userSpaceOnUse" x1="1835" x2="2264"><stop offset="0" stop-color="#0020ff"/><stop offset="0.2098" stop-color="#020eff"/><stop offset="0.3916" stop-color="#3b00ff"/><stop offset="0.8531" stop-color="#d800ff"/><stop offset="0.965" stop-color="#ff00fe"/><stop offset="1" stop-color="#ff00f2"/></linearGradient><linearGradient id="cg207" gradientUnits="userSpaceOnUse" x1="1836" x2="2262"><stop offset="0" stop-color="#001fff"/><stop offset="0.2089" stop-color="#020eff"/><stop offset="0.3873" stop-color="#3900ff"/><stop offset="0.8545" stop-color="#d600ff"/><stop offset="0.9742" stop-color="#ff00fe"/><stop offset="1" stop-color="#ff00f5"/></linearGradient><linearGradient id="cg208" gradientUnits="userSpaceOnUse" x1="1838" x2="2261"><stop offset="0" stop-color="#001eff"/><stop offset="0.2057" stop-color="#020dff"/><stop offset="0.383" stop-color="#3800ff"/><stop offset="0.8558" stop-color="#d400ff"/><stop offset="0.9811" stop-color="#ff00fe"/><stop offset="1" stop-color="#ff00f7"/></linearGradient><linearGradient id="cg209" gradientUnits="userSpaceOnUse" x1="1839" x2="2259"><stop offset="0" stop-color="#001eff"/><stop offset="0.2071" stop-color="#020cff"/><stop offset="0.3786" stop-color="#3600ff"/><stop offset="0.8571" stop-color="#d200ff"/><stop offset="0.9929" stop-color="#ff00fd"/><stop offset="1" stop-color="#ff00fa"/></linearGradient><linearGradient id="cg210" gradientUnits="userSpaceOnUse" x1="1840" x2="2257"><stop offset="0" stop-color="#001dff"/><stop offset="0.2062" stop-color="#020cff"/><stop offset="0.3741" stop-color="#3400ff"/><stop offset="0.8609" stop-color="#d100ff"/><stop offset="1" stop-color="#ff00fe"/></linearGradient><linearGradient id="cg211" gradientUnits="userSpaceOnUse" x1="1842" x2="2255"><stop offset="0" stop-color="#001cff"/><stop offset="0.2034" stop-color="#020bff"/><stop offset="0.368" stop-color="#3200ff"/><stop offset="0.862" stop-color="#ce00ff"/><stop offset="1" stop-color="#fd00ff"/></linearGradient><linearGradient id="cg212" gradientUnits="userSpaceOnUse" x1="1843" x2="2253"><stop offset="0" stop-color="#001bff"/><stop offset="0.2049" stop-color="#020bff"/><stop offset="0.3659" stop-color="#3100ff"/><stop offset="0.8659" stop-color="#cd00ff"/><stop offset="1" stop-color="#fa00ff"/></linearGradient><linearGradient id="cg213" gradientUnits="userSpaceOnUse" x1="1844" x2="2251"><stop offset="0" stop-color="#001bff"/><stop offset="0.2039" stop-color="#020aff"/><stop offset="0.3612" stop-color="#2f00ff"/><stop offset="0.8673" stop-color="#cb00ff"/><stop offset="1" stop-color="#f600ff"/></linearGradient><linearGradient id="cg214" gradientUnits="userSpaceOnUse" x1="1846" x2="2249"><stop offset="0" stop-color="#001aff"/><stop offset="0.201" stop-color="#020aff"/><stop offset="0.3548" stop-color="#2d00ff"/><stop offset="0.8685" stop-color="#c900ff"/><stop offset="1" stop-color="#f300ff"/></linearGradient><linearGradient id="cg215" gradientUnits="userSpaceOnUse" x1="1847" x2="2247"><stop offset="0" stop-color="#0019ff"/><stop offset="0.2025" stop-color="#0209ff"/><stop offset="0.35" stop-color="#2b00ff"/><stop offset="0.8725" stop-color="#c700ff"/><stop offset="1" stop-color="#f000ff"/></linearGradient><linearGradient id="cg216" gradientUnits="userSpaceOnUse" x1="1848" x2="2245"><stop offset="0" stop-color="#0018ff"/><stop offset="0.2015" stop-color="#0209ff"/><stop offset="0.3476" stop-color="#2a00ff"/><stop offset="0.8766" stop-color="#c600ff"/><stop offset="1" stop-color="#ed00ff"/></linearGradient><linearGradient id="cg217" gradientUnits="userSpaceOnUse" x1="1850" x2="2243"><stop offset="0" stop-color="#0017ff"/><stop offset="0.1985" stop-color="#0208ff"/><stop offset="0.341" stop-color="#2800ff"/><stop offset="0.8779" stop-color="#c400ff"/><stop offset="1" stop-color="#ea00ff"/></linearGradient><linearGradient id="cg218" gradientUnits="userSpaceOnUse" x1="1851" x2="2241"><stop offset="0" stop-color="#0017ff"/><stop offset="0.2" stop-color="#0208ff"/><stop offset="0.3359" stop-color="#2600ff"/><stop offset="0.8795" stop-color="#c200ff"/><stop offset="1" stop-color="#e700ff"/></linearGradient><linearGradient id="cg219" gradientUnits="userSpaceOnUse" x1="1852" x2="2239"><stop offset="0" stop-color="#0016ff"/><stop offset="0.199" stop-color="#0207ff"/><stop offset="0.3333" stop-color="#2500ff"/><stop offset="0.8837" stop-color="#c100ff"/><stop offset="1" stop-color="#e400ff"/></linearGradient><linearGradient id="cg220" gradientUnits="userSpaceOnUse" x1="1854" x2="2237"><stop offset="0" stop-color="#0015ff"/><stop offset="0.1958" stop-color="#0207ff"/><stop offset="0.3264" stop-color="#2400ff"/><stop offset="0.8877" stop-color="#bf00ff"/><stop offset="1" stop-color="#e100ff"/></linearGradient><linearGradient id="cg221" gradientUnits="userSpaceOnUse" x1="1855" x2="2235"><stop offset="0" stop-color="#0015ff"/><stop offset="0.1974" stop-color="#0206ff"/><stop offset="0.3237" stop-color="#2300ff"/><stop offset="0.8921" stop-color="#be00ff"/><stop offset="1" stop-color="#de00ff"/></linearGradient><linearGradient id="cg222" gradientUnits="userSpaceOnUse" x1="1857" x2="2233"><stop offset="0" stop-color="#0014ff"/><stop offset="0.1941" stop-color="#0206ff"/><stop offset="0.3165" stop-color="#2100ff"/><stop offset="0.8936" stop-color="#bc00ff"/><stop offset="1" stop-color="#db00ff"/></linearGradient><linearGradient id="cg223" gradientUnits="userSpaceOnUse" x1="1858" x2="2231"><stop offset="0" stop-color="#0013ff"/><stop offset="0.193" stop-color="#0206ff"/><stop offset="0.3137" stop-color="#2000ff"/><stop offset="0.8981" stop-color="#bb00ff"/><stop offset="1" stop-color="#d800ff"/></linearGradient><linearGradient id="cg224" gradientUnits="userSpaceOnUse" x1="1859" x2="2229"><stop offset="0" stop-color="#0012ff"/><stop offset="0.1946" stop-color="#0205ff"/><stop offset="0.3108" stop-color="#1f00ff"/><stop offset="0.9027" stop-color="#ba00ff"/><stop offset="1" stop-color="#d500ff"/></linearGradient><linearGradient id="cg225" gradientUnits="userSpaceOnUse" x1="1861" x2="2227"><stop offset="0" stop-color="#0012ff"/><stop offset="0.1913" stop-color="#0205ff"/><stop offset="0.3087" stop-color="#1e00ff"/><stop offset="0.9098" stop-color="#b900ff"/><stop offset="1" stop-color="#d200ff"/></linearGradient><linearGradient id="cg226" gradientUnits="userSpaceOnUse" x1="1862" x2="2226"><stop offset="0" stop-color="#0011ff"/><stop offset="0.1896" stop-color="#0204ff"/><stop offset="0.3049" stop-color="#1d00ff"/><stop offset="0.9148" stop-color="#b900ff"/><stop offset="1" stop-color="#d000ff"/></linearGradient><linearGradient id="cg227" gradientUnits="userSpaceOnUse" x1="1864" x2="2224"><stop offset="0" stop-color="#0010ff"/><stop offset="0.1889" stop-color="#0204ff"/><stop offset="0.3083" stop-color="#1e00ff"/><stop offset="0.9278" stop-color="#ba00ff"/><stop offset="1" stop-color="#cd00ff"/></linearGradient><linearGradient id="cg228" gradientUnits="userSpaceOnUse" x1="1865" x2="2222"><stop offset="0" stop-color="#0010ff"/><stop offset="0.1877" stop-color="#0203ff"/><stop offset="0.3165" stop-color="#2000ff"/><stop offset="0.9412" stop-color="#bb00ff"/><stop offset="1" stop-color="#cb00ff"/></linearGradient><linearGradient id="cg229" gradientUnits="userSpaceOnUse" x1="1867" x2="2220"><stop offset="0" stop-color="#000fff"/><stop offset="0.1841" stop-color="#0203ff"/><stop offset="0.3343" stop-color="#2400ff"/><stop offset="0.9688" stop-color="#c000ff"/><stop offset="1" stop-color="#c800ff"/></linearGradient><linearGradient id="cg230" gradientUnits="userSpaceOnUse" x1="1868" x2="2218"><stop offset="0" stop-color="#000eff"/><stop offset="0.1857" stop-color="#0202ff"/><stop offset="0.4771" stop-color="#4500ff"/><stop offset="1" stop-color="#c500ff"/></linearGradient><linearGradient id="cg231" gradientUnits="userSpaceOnUse" x1="1869" x2="2216"><stop offset="0" stop-color="#000eff"/><stop offset="0.1844" stop-color="#0202ff"/><stop offset="0.8473" stop-color="#9d00ff"/><stop offset="1" stop-color="#c300ff"/></linearGradient><linearGradient id="cg232" gradientUnits="userSpaceOnUse" x1="1871" x2="2214"><stop offset="0" stop-color="#000dff"/><stop offset="0.1808" stop-color="#0202ff"/><stop offset="0.8542" stop-color="#9c00ff"/><stop offset="1" stop-color="#c000ff"/></linearGradient><linearGradient id="cg233" gradientUnits="userSpaceOnUse" x1="1872" x2="2212"><stop offset="0" stop-color="#000cff"/><stop offset="0.1824" stop-color="#0201ff"/><stop offset="0.8647" stop-color="#9d00ff"/><stop offset="1" stop-color="#bd00ff"/></linearGradient><linearGradient id="cg234" gradientUnits="userSpaceOnUse" x1="1874" x2="2210"><stop offset="0" stop-color="#000bff"/><stop offset="0.1786" stop-color="#0201ff"/><stop offset="0.872" stop-color="#9c00ff"/><stop offset="1" stop-color="#bb00ff"/></linearGradient><linearGradient id="cg235" gradientUnits="userSpaceOnUse" x1="1875" x2="2208"><stop offset="0" stop-color="#000bff"/><stop offset="0.1772" stop-color="#0200ff"/><stop offset="0.8799" stop-color="#9c00ff"/><stop offset="1" stop-color="#b800ff"/></linearGradient><linearGradient id="cg236" gradientUnits="userSpaceOnUse" x1="1877" x2="2206"><stop offset="0" stop-color="#000aff"/><stop offset="0.1763" stop-color="#0200ff"/><stop offset="0.8906" stop-color="#9d00ff"/><stop offset="1" stop-color="#b600ff"/></linearGradient><linearGradient id="cg237" gradientUnits="userSpaceOnUse" x1="1878" x2="2204"><stop offset="0" stop-color="#000aff"/><stop offset="0.1748" stop-color="#0200ff"/><stop offset="0.8988" stop-color="#9c00ff"/><stop offset="1" stop-color="#b300ff"/></linearGradient><linearGradient id="cg238" gradientUnits="userSpaceOnUse" x1="1880" x2="2202"><stop offset="0" stop-color="#0009ff"/><stop offset="0.1739" stop-color="#0200ff"/><stop offset="0.9099" stop-color="#9d00ff"/><stop offset="1" stop-color="#b100ff"/></linearGradient><linearGradient id="cg239" gradientUnits="userSpaceOnUse" x1="1881" x2="2200"><stop offset="0" stop-color="#0008ff"/><stop offset="0.1724" stop-color="#0200ff"/><stop offset="0.9185" stop-color="#9c00ff"/><stop offset="1" stop-color="#ae00ff"/></linearGradient><linearGradient id="cg240" gradientUnits="userSpaceOnUse" x1="1883" x2="2198"><stop offset="0" stop-color="#0007ff"/><stop offset="0.1683" stop-color="#0200ff"/><stop offset="0.9302" stop-color="#9d00ff"/><stop offset="1" stop-color="#ac00ff"/></linearGradient><linearGradient id="cg241" gradientUnits="userSpaceOnUse" x1="1884" x2="2196"><stop offset="0" stop-color="#0007ff"/><stop offset="0.1699" stop-color="#0200ff"/><stop offset="0.9423" stop-color="#9d00ff"/><stop offset="1" stop-color="#a900ff"/></linearGradient><linearGradient id="cg242" gradientUnits="userSpaceOnUse" x1="1886" x2="2194"><stop offset="0" stop-color="#0006ff"/><stop offset="0.1656" stop-color="#0200ff"/><stop offset="0.9513" stop-color="#9d00ff"/><stop offset="1" stop-color="#a700ff"/></linearGradient><linearGradient id="cg243" gradientUnits="userSpaceOnUse" x1="1888" x2="2192"><stop offset="0" stop-color="#0006ff"/><stop offset="0.1612" stop-color="#0200ff"/><stop offset="0.9605" stop-color="#9d00ff"/><stop offset="1" stop-color="#a500ff"/></linearGradient><linearGradient id="cg244" gradientUnits="userSpaceOnUse" x1="1889" x2="2191"><stop offset="0" stop-color="#0005ff"/><stop offset="0.1589" stop-color="#0200ff"/><stop offset="0.9669" stop-color="#9c00ff"/><stop offset="1" stop-color="#a300ff"/></linearGradient><linearGradient id="cg245" gradientUnits="userSpaceOnUse" x1="1891" x2="2189"><stop offset="0" stop-color="#0004ff"/><stop offset="0.1544" stop-color="#0100ff"/><stop offset="0.9765" stop-color="#9c00ff"/><stop offset="1" stop-color="#a100ff"/></linearGradient><linearGradient id="cg246" gradientUnits="userSpaceOnUse" x1="1892" x2="2187"><stop offset="0" stop-color="#0004ff"/><stop offset="0.1559" stop-color="#0200ff"/><stop offset="0.9898" stop-color="#9d00ff"/><stop offset="1" stop-color="#9f00ff"/></linearGradient><linearGradient id="cg247" gradientUnits="userSpaceOnUse" x1="1894" x2="2185"><stop offset="0" stop-color="#0003ff"/><stop offset="0.1546" stop-color="#0200ff"/><stop offset="1" stop-color="#9c00ff"/></linearGradient><linearGradient id="cg248" gradientUnits="userSpaceOnUse" x1="1895" x2="2183"><stop offset="0" stop-color="#0003ff"/><stop offset="0.1528" stop-color="#0200ff"/><stop offset="1" stop-color="#9a00ff"/></linearGradient><linearGradient id="cg249" gradientUnits="userSpaceOnUse" x1="1897" x2="2181"><stop offset="0" stop-color="#0002ff"/><stop offset="0.1479" stop-color="#0200ff"/><stop offset="1" stop-color="#9800ff"/></linearGradient><linearGradient id="cg250" gradientUnits="userSpaceOnUse" x1="1899" x2="2179"><stop offset="0" stop-color="#0001ff"/><stop offset="0.1464" stop-color="#0200ff"/><stop offset="1" stop-color="#9600ff"/></linearGradient><linearGradient id="cg251" gradientUnits="userSpaceOnUse" x1="1900" x2="2177"><stop offset="0" stop-color="#0001ff"/><stop offset="0.1444" stop-color="#0200ff"/><stop offset="1" stop-color="#9400ff"/></linearGradient><linearGradient id="cg252" gradientUnits="userSpaceOnUse" x1="1902" x2="2175"><stop offset="0" stop-color="#0000ff"/><stop offset="0.1392" stop-color="#0200ff"/><stop offset="1" stop-color="#9100ff"/></linearGradient><linearGradient id="cg253" gradientUnits="userSpaceOnUse" x1="1904" x2="2173"><stop offset="0" stop-color="#0000ff"/><stop offset="0.1375" stop-color="#0200ff"/><stop offset="1" stop-color="#8f00ff"/></linearGradient><linearGradient id="cg254" gradientUnits="userSpaceOnUse" x1="1905" x2="2171"><stop offset="0" stop-color="#0000ff"/><stop offset="0.1353" stop-color="#0200ff"/><stop offset="1" stop-color="#8d00ff"/></linearGradient><linearGradient id="cg255" gradientUnits="userSpaceOnUse" x1="1907" x2="2169"><stop offset="0" stop-color="#0000ff"/><stop offset="0.1298" stop-color="#0200ff"/><stop offset="1" stop-color="#8b00ff"/></linearGradient><linearGradient id="cg256" gradientUnits="userSpaceOnUse" x1="1909" x2="2167"><stop offset="0" stop-color="#0000ff"/><stop offset="0.1279" stop-color="#0200ff"/><stop offset="1" stop-color="#8900ff"/></linearGradient><linearGradient id="cg257" gradientUnits="userSpaceOnUse" x1="1910" x2="2165"><stop offset="0" stop-color="#0000ff"/><stop offset="0.1255" stop-color="#0200ff"/><stop offset="1" stop-color="#8700ff"/></linearGradient><linearGradient id="cg258" gradientUnits="userSpaceOnUse" x1="1912" x2="2163"><stop offset="0" stop-color="#0000ff"/><stop offset="0.1235" stop-color="#0200ff"/><stop offset="1" stop-color="#8500ff"/></linearGradient><linearGradient id="cg259" gradientUnits="userSpaceOnUse" x1="1914" x2="2161"><stop offset="0" stop-color="#0000ff"/><stop offset="0.1174" stop-color="#0200ff"/><stop offset="1" stop-color="#8300ff"/></linearGradient><linearGradient id="cg260" gradientUnits="userSpaceOnUse" x1="1916" x2="2159"><stop offset="0" stop-color="#0000ff"/><stop offset="0.1111" stop-color="#0200ff"/><stop offset="1" stop-color="#8100ff"/></linearGradient><linearGradient id="cg261" gradientUnits="userSpaceOnUse" x1="1917" x2="2157"><stop offset="0" stop-color="#0000ff"/><stop offset="0.1125" stop-color="#0200ff"/><stop offset="1" stop-color="#7f00ff"/></linearGradient><linearGradient id="cg262" gradientUnits="userSpaceOnUse" x1="1919" x2="2155"><stop offset="0" stop-color="#0000ff"/><stop offset="0.1059" stop-color="#0200ff"/><stop offset="1" stop-color="#7d00ff"/></linearGradient><linearGradient id="cg263" gradientUnits="userSpaceOnUse" x1="1921" x2="2154"><stop offset="0" stop-color="#0000ff"/><stop offset="0.103" stop-color="#0200ff"/><stop offset="1" stop-color="#7c00ff"/></linearGradient><linearGradient id="cg264" gradientUnits="userSpaceOnUse" x1="1923" x2="2152"><stop offset="0" stop-color="#0000ff"/><stop offset="0.0961" stop-color="#0200ff"/><stop offset="1" stop-color="#7a00ff"/></linearGradient><linearGradient id="cg265" gradientUnits="userSpaceOnUse" x1="1925" x2="2150"><stop offset="0" stop-color="#0000ff"/><stop offset="0.0933" stop-color="#0300ff"/><stop offset="1" stop-color="#7800ff"/></linearGradient><linearGradient id="cg266" gradientUnits="userSpaceOnUse" x1="1926" x2="2148"><stop offset="0" stop-color="#0000ff"/><stop offset="0.0901" stop-color="#0200ff"/><stop offset="1" stop-color="#7600ff"/></linearGradient><linearGradient id="cg267" gradientUnits="userSpaceOnUse" x1="1928" x2="2146"><stop offset="0" stop-color="#0000ff"/><stop offset="0.0826" stop-color="#0200ff"/><stop offset="1" stop-color="#7400ff"/></linearGradient><linearGradient id="cg268" gradientUnits="userSpaceOnUse" x1="1930" x2="2144"><stop offset="0" stop-color="#0000ff"/><stop offset="0.0794" stop-color="#0300ff"/><stop offset="1" stop-color="#7200ff"/></linearGradient><linearGradient id="cg269" gradientUnits="userSpaceOnUse" x1="1932" x2="2142"><stop offset="0" stop-color="#0000ff"/><stop offset="0.0762" stop-color="#0300ff"/><stop offset="1" stop-color="#7100ff"/></linearGradient><linearGradient id="cg270" gradientUnits="userSpaceOnUse" x1="1934" x2="2140"><stop offset="0" stop-color="#0000ff"/><stop offset="0.0728" stop-color="#0300ff"/><stop offset="1" stop-color="#6f00ff"/></linearGradient><linearGradient id="cg271" gradientUnits="userSpaceOnUse" x1="1936" x2="2138"><stop offset="0" stop-color="#0000ff"/><stop offset="0.0743" stop-color="#0400ff"/><stop offset="1" stop-color="#6d00ff"/></linearGradient><linearGradient id="cg272" gradientUnits="userSpaceOnUse" x1="1938" x2="2136"><stop offset="0" stop-color="#0000ff"/><stop offset="0.0909" stop-color="#0700ff"/><stop offset="1" stop-color="#6b00ff"/></linearGradient><linearGradient id="cg273" gradientUnits="userSpaceOnUse" x1="1940" x2="2134"><stop offset="0" stop-color="#0000ff"/><stop offset="0.4124" stop-color="#2900ff"/><stop offset="1" stop-color="#6900ff"/></linearGradient><linearGradient id="cg274" gradientUnits="userSpaceOnUse" x1="1942" x2="2132"><stop offset="0" stop-color="#0000ff"/><stop offset="1" stop-color="#6800ff"/></linearGradient><linearGradient id="cg275" gradientUnits="userSpaceOnUse" x1="1944" x2="2130"><stop offset="0" stop-color="#0000ff"/><stop offset="1" stop-color="#6600ff"/></linearGradient><linearGradient id="cg276" gradientUnits="userSpaceOnUse" x1="1946" x2="2128"><stop offset="0" stop-color="#0100ff"/><stop offset="1" stop-color="#6400ff"/></linearGradient><linearGradient id="cg277" gradientUnits="userSpaceOnUse" x1="1949" x2="2126"><stop offset="0" stop-color="#0200ff"/><stop offset="1" stop-color="#6300ff"/></linearGradient><linearGradient id="cg278" gradientUnits="userSpaceOnUse" x1="1951" x2="2124"><stop offset="0" stop-color="#0300ff"/><stop offset="1" stop-color="#6100ff"/></linearGradient><linearGradient id="cg279" gradientUnits="userSpaceOnUse" x1="1953" x2="2122"><stop offset="0" stop-color="#0400ff"/><stop offset="1" stop-color="#5f00ff"/></linearGradient><linearGradient id="cg280" gradientUnits="userSpaceOnUse" x1="1955" x2="2120"><stop offset="0" stop-color="#0500ff"/><stop offset="1" stop-color="#5d00ff"/></linearGradient><linearGradient id="cg281" gradientUnits="userSpaceOnUse" x1="1957" x2="2119"><stop offset="0" stop-color="#0500ff"/><stop offset="1" stop-color="#5c00ff"/></linearGradient><linearGradient id="cg282" gradientUnits="userSpaceOnUse" x1="1959" x2="2117"><stop offset="0" stop-color="#0600ff"/><stop offset="1" stop-color="#5b00ff"/></linearGradient><linearGradient id="cg283" gradientUnits="userSpaceOnUse" x1="1962" x2="2115"><stop offset="0" stop-color="#0800ff"/><stop offset="1" stop-color="#5900ff"/></linearGradient><linearGradient id="cg284" gradientUnits="userSpaceOnUse" x1="1964" x2="2113"><stop offset="0" stop-color="#0900ff"/><stop offset="1" stop-color="#5800ff"/></linearGradient><linearGradient id="cg285" gradientUnits="userSpaceOnUse" x1="1966" x2="2111"><stop offset="0" stop-color="#0900ff"/><stop offset="1" stop-color="#5600ff"/></linearGradient><linearGradient id="cg286" gradientUnits="userSpaceOnUse" x1="1969" x2="2109"><stop offset="0" stop-color="#0b00ff"/><stop offset="1" stop-color="#5400ff"/></linearGradient><linearGradient id="cg287" gradientUnits="userSpaceOnUse" x1="1971" x2="2107"><stop offset="0" stop-color="#0c00ff"/><stop offset="1" stop-color="#5300ff"/></linearGradient><linearGradient id="cg288" gradientUnits="userSpaceOnUse" x1="1973" x2="2105"><stop offset="0" stop-color="#0c00ff"/><stop offset="1" stop-color="#5100ff"/></linearGradient><linearGradient id="cg289" gradientUnits="userSpaceOnUse" x1="1976" x2="2103"><stop offset="0" stop-color="#0e00ff"/><stop offset="1" stop-color="#5000ff"/></linearGradient><linearGradient id="cg290" gradientUnits="userSpaceOnUse" x1="1978" x2="2101"><stop offset="0" stop-color="#0e00ff"/><stop offset="1" stop-color="#4e00ff"/></linearGradient><linearGradient id="cg291" gradientUnits="userSpaceOnUse" x1="1980" x2="2099"><stop offset="0" stop-color="#0f00ff"/><stop offset="1" stop-color="#4d00ff"/></linearGradient><linearGradient id="cg292" gradientUnits="userSpaceOnUse" x1="1983" x2="2097"><stop offset="0" stop-color="#1100ff"/><stop offset="1" stop-color="#4b00ff"/></linearGradient><linearGradient id="cg293" gradientUnits="userSpaceOnUse" x1="1985" x2="2095"><stop offset="0" stop-color="#1100ff"/><stop offset="1" stop-color="#4a00ff"/></linearGradient><linearGradient id="cg294" gradientUnits="userSpaceOnUse" x1="1988" x2="2093"><stop offset="0" stop-color="#1300ff"/><stop offset="1" stop-color="#4800ff"/></linearGradient><linearGradient id="cg295" gradientUnits="userSpaceOnUse" x1="1990" x2="2091"><stop offset="0" stop-color="#1300ff"/><stop offset="1" stop-color="#4700ff"/></linearGradient><linearGradient id="cg296" gradientUnits="userSpaceOnUse" x1="1993" x2="2089"><stop offset="0" stop-color="#1500ff"/><stop offset="1" stop-color="#4500ff"/></linearGradient><linearGradient id="cg297" gradientUnits="userSpaceOnUse" x1="1995" x2="2087"><stop offset="0" stop-color="#1500ff"/><stop offset="1" stop-color="#4400ff"/></linearGradient><linearGradient id="cg298" gradientUnits="userSpaceOnUse" x1="1997" x2="2085"><stop offset="0" stop-color="#1600ff"/><stop offset="1" stop-color="#4200ff"/></linearGradient><linearGradient id="cg299" gradientUnits="userSpaceOnUse" x1="2000" x2="2084"><stop offset="0" stop-color="#1700ff"/><stop offset="1" stop-color="#4100ff"/></linearGradient><linearGradient id="cg300" gradientUnits="userSpaceOnUse" x1="2002" x2="2082"><stop offset="0" stop-color="#1800ff"/><stop offset="1" stop-color="#4000ff"/></linearGradient><linearGradient id="cg301" gradientUnits="userSpaceOnUse" x1="2005" x2="2080"><stop offset="0" stop-color="#1900ff"/><stop offset="1" stop-color="#3f00ff"/></linearGradient><linearGradient id="cg302" gradientUnits="userSpaceOnUse" x1="2007" x2="2078"><stop offset="0" stop-color="#1a00ff"/><stop offset="1" stop-color="#3d00ff"/></linearGradient><linearGradient id="cg303" gradientUnits="userSpaceOnUse" x1="2010" x2="2076"><stop offset="0" stop-color="#1b00ff"/><stop offset="1" stop-color="#3c00ff"/></linearGradient><linearGradient id="cg304" gradientUnits="userSpaceOnUse" x1="2012" x2="2074"><stop offset="0" stop-color="#1c00ff"/><stop offset="1" stop-color="#3b00ff"/></linearGradient><linearGradient id="cg305" gradientUnits="userSpaceOnUse" x1="2014" x2="2072"><stop offset="0" stop-color="#1d00ff"/><stop offset="1" stop-color="#3900ff"/></linearGradient><linearGradient id="cg306" gradientUnits="userSpaceOnUse" x1="2017" x2="2070"><stop offset="0" stop-color="#1e00ff"/><stop offset="1" stop-color="#3800ff"/></linearGradient><linearGradient id="cg307" gradientUnits="userSpaceOnUse" x1="2019" x2="2068"><stop offset="0" stop-color="#1f00ff"/><stop offset="1" stop-color="#3700ff"/></linearGradient><linearGradient id="cg308" gradientUnits="userSpaceOnUse" x1="2021" x2="2066"><stop offset="0" stop-color="#1f00ff"/><stop offset="1" stop-color="#3500ff"/></linearGradient><linearGradient id="cg309" gradientUnits="userSpaceOnUse" x1="2024" x2="2064"><stop offset="0" stop-color="#2100ff"/><stop offset="1" stop-color="#3400ff"/></linearGradient><linearGradient id="cg310" gradientUnits="userSpaceOnUse" x1="2026" x2="2062"><stop offset="0" stop-color="#2100ff"/><stop offset="1" stop-color="#3300ff"/></linearGradient><linearGradient id="cg311" gradientUnits="userSpaceOnUse" x1="2029" x2="2060"><stop offset="0" stop-color="#2200ff"/><stop offset="1" stop-color="#3100ff"/></linearGradient><linearGradient id="cg312" gradientUnits="userSpaceOnUse" x1="2031" x2="2058"><stop offset="0" stop-color="#2300ff"/><stop offset="1" stop-color="#3000ff"/></linearGradient><linearGradient id="cg313" gradientUnits="userSpaceOnUse" x1="2034" x2="2056"><stop offset="0" stop-color="#2400ff"/><stop offset="1" stop-color="#2f00ff"/></linearGradient><linearGradient id="cg314" gradientUnits="userSpaceOnUse" x1="2036" x2="2054"><stop offset="0" stop-color="#2500ff"/><stop offset="1" stop-color="#2d00ff"/></linearGradient><linearGradient id="cg315" gradientUnits="userSpaceOnUse" x1="2039" x2="2052"><stop offset="0" stop-color="#2600ff"/><stop offset="1" stop-color="#2c00ff"/></linearGradient><clipPath id="loc"><polygon points="2049.1,936.8 2049.1,936.8 2049.0,936.8 2049.0,936.7 2048.9,936.7 2048.8,936.7 2048.8,936.8 2048.7,936.9 2048.6,936.9 2048.6,937.0 2048.4,937.0 2048.3,936.9 2048.2,936.9 2048.1,936.9 2047.9,936.9 2047.9,936.9 2047.8,937.0 2047.7,937.2 2047.7,937.3 2047.6,937.3 2047.5,937.4 2047.4,937.4 2047.3,937.5 2047.2,937.5 2047.0,937.5 2046.8,937.5 2046.6,937.5 2046.4,937.4 2046.1,937.4 2045.9,937.4 2045.7,937.4 2045.5,937.4 2045.3,937.4 2045.0,937.4 2044.8,937.4 2044.5,937.3 2044.2,937.2 2043.9,937.1 2043.5,936.9 2043.0,936.7 2042.4,936.3 2041.8,935.9 2041.1,935.5 2040.3,935.0 2039.6,934.5 2038.7,933.9 2037.8,933.3 2036.9,932.5 2035.9,931.8 2034.8,930.9 2033.6,930.0 2032.4,929.0 2031.0,927.9 2029.6,926.8 2028.0,925.6 2026.5,924.3 2024.8,922.9 2023.1,921.4 2021.2,919.8 2019.3,918.2 2017.3,916.5 2015.2,914.7 2013.0,912.9 2010.7,910.9 2008.3,908.9 2005.7,906.8 2002.9,904.5 2000.1,902.1 1997.0,899.6 1993.9,897.0 1990.6,894.3 1987.1,891.5 1983.6,888.5 1979.9,885.5 1976.1,882.3 1972.1,878.9 1968.0,875.3 1963.6,871.5 1959.1,867.5 1954.5,863.2 1949.7,858.7 1944.7,854.0 1939.6,849.0 1934.3,843.7 1928.8,837.8 1922.8,831.4 1916.5,824.2 1909.7,816.2 1902.5,807.6 1894.9,798.2 1887.1,788.2 1879.0,777.6 1870.8,766.4 1862.3,754.6 1853.6,742.2 1844.8,729.1 1835.8,715.4 1826.6,701.1 1817.4,686.3 1808.2,671.2 1799.0,655.7 1789.8,640.1 1780.8,624.3 1771.8,608.3 1763.2,592.3 1754.9,576.3 1747.1,560.5 1739.8,544.9 1732.9,529.6 1726.5,514.6 1720.5,500.1 1714.9,486.1 1709.7,472.5 1705.0,459.6 1700.8,447.4 1697.1,435.8 1693.8,425.0 1691.0,414.8 1688.6,405.3 1686.6,396.4 1685.0,388.1 1683.7,380.3 1682.8,373.2 1682.2,366.6 1682.0,360.5 1682.0,354.8 1682.4,349.5 1683.0,344.6 1684.0,340.0 1685.2,335.8 1686.7,332.0 1688.4,328.4 1690.4,325.2 1692.6,322.3 1695.0,319.7 1697.6,317.5 1700.4,315.5 1703.4,313.8 1706.6,312.3 1709.8,311.1 1713.2,310.0 1716.7,309.2 1720.3,308.6 1724.0,308.0 1727.8,307.6 1731.7,307.3 1735.7,307.1 1739.7,306.9 1743.8,306.8 1747.9,306.7 1751.9,306.6 1756.0,306.6 1760.1,306.7 1764.2,306.7 1768.3,306.8 1772.4,306.9 1776.6,307.0 1780.9,307.2 1785.1,307.4 1789.5,307.6 1793.9,307.9 1798.3,308.2 1802.8,308.5 1807.4,308.8 1812.1,309.2 1816.9,309.6 1821.7,310.0 1826.6,310.4 1831.7,310.8 1836.8,311.3 1842.0,311.8 1847.3,312.3 1852.7,312.9 1858.2,313.4 1863.8,314.0 1869.5,314.6 1875.4,315.2 1881.4,315.9 1887.5,316.5 1893.7,317.2 1900.0,317.9 1906.5,318.6 1913.1,319.3 1919.9,320.1 1926.7,320.8 1933.8,321.6 1940.9,322.4 1948.3,323.3 1955.7,324.1 1963.3,325.0 1971.1,325.9 1979.0,326.8 1987.1,327.7 1995.3,328.6 2003.7,329.6 2012.2,330.6 2020.8,331.6 2029.7,332.6 2038.6,333.6 2047.7,334.7 2057.0,335.7 2066.4,336.8 2075.9,337.9 2085.6,339.0 2095.3,340.1 2105.3,341.3 2115.3,342.4 2125.4,343.6 2135.6,344.7 2145.9,345.9 2156.3,347.1 2166.8,348.3 2177.4,349.5 2187.9,350.8 2198.5,352.0 2208.9,353.2 2219.3,354.4 2229.5,355.5 2239.7,356.7 2249.8,357.9 2259.8,359.0 2269.9,360.2 2280.0,361.3 2289.9,362.5 2299.8,363.6 2309.4,364.7 2318.8,365.8 2327.9,366.8 2336.8,367.9 2345.6,368.9 2354.1,369.8 2362.5,370.8 2370.6,371.7 2378.6,372.6 2386.3,373.5 2393.8,374.4 2401.0,375.2 2408.0,376.0 2414.7,376.8 2421.3,377.6 2427.5,378.3 2433.6,379.0 2439.5,379.7 2445.1,380.3 2450.6,380.9 2455.9,381.5 2461.0,382.1 2465.8,382.7 2470.6,383.2 2475.2,383.7 2479.7,384.3 2484.0,384.8 2488.3,385.3 2492.5,385.7 2496.5,386.2 2500.3,386.6 2504.1,387.1 2507.7,387.5 2511.2,387.9 2514.6,388.3 2517.8,388.6 2520.9,389.0 2523.9,389.4 2526.8,389.7 2529.5,390.0 2532.1,390.3 2534.5,390.6 2536.8,390.8 2538.9,391.1 2541.0,391.3 2542.9,391.5 2544.7,391.7 2546.5,391.9 2548.2,392.1 2549.8,392.3 2551.3,392.5 2552.8,392.7 2554.1,392.8 2555.4,393.0 2556.6,393.1 2557.7,393.2 2558.7,393.4 2559.6,393.5 2560.5,393.6 2561.2,393.6 2562.0,393.7 2562.7,393.8 2563.4,393.9 2564.1,394.0 2564.8,394.1 2565.4,394.1 2566.0,394.2 2566.6,394.3 2567.1,394.3 2567.6,394.4 2568.2,394.4 2568.7,394.5 2569.3,394.6 2569.8,394.6 2570.3,394.7 2570.9,394.8 2571.4,394.8 2571.9,394.9 2572.4,394.9 2572.9,395.0 2573.3,395.0 2573.7,395.1 2574.0,395.1 2574.2,395.1 2574.4,395.2 2574.6,395.2 2574.8,395.2 2575.0,395.2 2575.1,395.2 2575.3,395.3 2575.4,395.3 2575.5,395.3 2575.6,395.3 2575.7,395.3 2575.8,395.3 2575.8,395.3 2575.8,395.3"/></clipPath><clipPath id="plot"><rect x="1680" y="292" width="865" height="664"/></clipPath></defs><rect x="1679" y="291" width="866.5" height="666" fill="#222"/><g clip-path="url(#plot)"><g clip-path="url(#loc)"><rect x="1722" y="306" width="76" height="2" fill="url(#cg0)"/><rect x="1711" y="308" width="114" height="2" fill="url(#cg1)"/><rect x="1705" y="310" width="141" height="2" fill="url(#cg2)"/><rect x="1701" y="312" width="165" height="2" fill="url(#cg3)"/><rect x="1697" y="314" width="188" height="2" fill="url(#cg4)"/><rect x="1694" y="316" width="210" height="2" fill="url(#cg5)"/><rect x="1692" y="318" width="230" height="2" fill="url(#cg6)"/><rect x="1690" y="320" width="250" height="2" fill="url(#cg7)"/><rect x="1689" y="322" width="268" height="2" fill="url(#cg8)"/><rect x="1687" y="324" width="288" height="2" fill="url(#cg9)"/><rect x="1686" y="326" width="306" height="2" fill="url(#cg10)"/><rect x="1685" y="328" width="325" height="2" fill="url(#cg11)"/><rect x="1684" y="330" width="343" height="2" fill="url(#cg12)"/><rect x="1683" y="332" width="362" height="2" fill="url(#cg13)"/><rect x="1683" y="334" width="379" height="2" fill="url(#cg14)"/><rect x="1682" y="336" width="397" height="2" fill="url(#cg15)"/><rect x="1681" y="338" width="416" height="2" fill="url(#cg16)"/><rect x="1681" y="340" width="433" height="2" fill="url(#cg17)"/><rect x="1681" y="342" width="451" height="2" fill="url(#cg18)"/><rect x="1680" y="344" width="469" height="2" fill="url(#cg19)"/><rect x="1680" y="346" width="486" height="2" fill="url(#cg20)"/><rect x="1680" y="348" width="504" height="2" fill="url(#cg21)"/><rect x="1680" y="350" width="521" height="2" fill="url(#cg22)"/><rect x="1680" y="352" width="539" height="2" fill="url(#cg23)"/><rect x="1680" y="354" width="556" height="2" fill="url(#cg24)"/><rect x="1680" y="356" width="573" height="2" fill="url(#cg25)"/><rect x="1679" y="358" width="592" height="2" fill="url(#cg26)"/><rect x="1679" y="360" width="609" height="2" fill="url(#cg27)"/><rect x="1680" y="362" width="626" height="2" fill="url(#cg28)"/><rect x="1680" y="364" width="643" height="2" fill="url(#cg29)"/><rect x="1680" y="366" width="661" height="2" fill="url(#cg30)"/><rect x="1680" y="368" width="678" height="2" fill="url(#cg31)"/><rect x="1680" y="370" width="695" height="2" fill="url(#cg32)"/><rect x="1680" y="372" width="713" height="2" fill="url(#cg33)"/><rect x="1680" y="374" width="730" height="2" fill="url(#cg34)"/><rect x="1681" y="376" width="747" height="2" fill="url(#cg35)"/><rect x="1681" y="378" width="764" height="2" fill="url(#cg36)"/><rect x="1681" y="380" width="781" height="2" fill="url(#cg37)"/><rect x="1681" y="382" width="799" height="2" fill="url(#cg38)"/><rect x="1682" y="384" width="815" height="2" fill="url(#cg39)"/><rect x="1682" y="386" width="833" height="2" fill="url(#cg40)"/><rect x="1682" y="388" width="850" height="2" fill="url(#cg41)"/><rect x="1683" y="390" width="864" height="2" fill="url(#cg42)"/><rect x="1683" y="392" width="864" height="2" fill="url(#cg43)"/><rect x="1684" y="394" width="863" height="2" fill="url(#cg44)"/><rect x="1684" y="396" width="863" height="2" fill="url(#cg45)"/><rect x="1684" y="398" width="863" height="2" fill="url(#cg46)"/><rect x="1685" y="400" width="862" height="2" fill="url(#cg47)"/><rect x="1685" y="402" width="862" height="2" fill="url(#cg48)"/><rect x="1686" y="404" width="861" height="2" fill="url(#cg49)"/><rect x="1686" y="406" width="861" height="2" fill="url(#cg50)"/><rect x="1687" y="408" width="860" height="2" fill="url(#cg51)"/><rect x="1687" y="410" width="860" height="2" fill="url(#cg52)"/><rect x="1688" y="412" width="859" height="2" fill="url(#cg53)"/><rect x="1688" y="414" width="859" height="2" fill="url(#cg54)"/><rect x="1689" y="416" width="858" height="2" fill="url(#cg55)"/><rect x="1689" y="418" width="858" height="2" fill="url(#cg56)"/><rect x="1690" y="420" width="857" height="2" fill="url(#cg57)"/><rect x="1690" y="422" width="857" height="2" fill="url(#cg58)"/><rect x="1691" y="424" width="856" height="2" fill="url(#cg59)"/><rect x="1692" y="426" width="855" height="2" fill="url(#cg60)"/><rect x="1692" y="428" width="854" height="2" fill="url(#cg61)"/><rect x="1693" y="430" width="852" height="2" fill="url(#cg62)"/><rect x="1693" y="432" width="850" height="2" fill="url(#cg63)"/><rect x="1694" y="434" width="847" height="2" fill="url(#cg64)"/><rect x="1695" y="436" width="844" height="2" fill="url(#cg65)"/><rect x="1695" y="438" width="842" height="2" fill="url(#cg66)"/><rect x="1696" y="440" width="839" height="2" fill="url(#cg67)"/><rect x="1697" y="442" width="836" height="2" fill="url(#cg68)"/><rect x="1697" y="444" width="834" height="2" fill="url(#cg69)"/><rect x="1698" y="446" width="831" height="2" fill="url(#cg70)"/><rect x="1699" y="448" width="828" height="2" fill="url(#cg71)"/><rect x="1699" y="450" width="826" height="2" fill="url(#cg72)"/><rect x="1700" y="452" width="823" height="2" fill="url(#cg73)"/><rect x="1701" y="454" width="820" height="2" fill="url(#cg74)"/><rect x="1701" y="456" width="818" height="2" fill="url(#cg75)"/><rect x="1702" y="458" width="815" height="2" fill="url(#cg76)"/><rect x="1703" y="460" width="812" height="2" fill="url(#cg77)"/><rect x="1703" y="462" width="810" height="2" fill="url(#cg78)"/><rect x="1704" y="464" width="807" height="2" fill="url(#cg79)"/><rect x="1705" y="466" width="805" height="2" fill="url(#cg80)"/><rect x="1706" y="468" width="802" height="2" fill="url(#cg81)"/><rect x="1706" y="470" width="800" height="2" fill="url(#cg82)"/><rect x="1707" y="472" width="797" height="2" fill="url(#cg83)"/><rect x="1708" y="474" width="794" height="2" fill="url(#cg84)"/><rect x="1709" y="476" width="791" height="2" fill="url(#cg85)"/><rect x="1709" y="478" width="789" height="2" fill="url(#cg86)"/><rect x="1710" y="480" width="786" height="2" fill="url(#cg87)"/><rect x="1711" y="482" width="783" height="2" fill="url(#cg88)"/><rect x="1712" y="484" width="780" height="2" fill="url(#cg89)"/><rect x="1712" y="486" width="778" height="2" fill="url(#cg90)"/><rect x="1713" y="488" width="775" height="2" fill="url(#cg91)"/><rect x="1714" y="490" width="772" height="2" fill="url(#cg92)"/><rect x="1715" y="492" width="769" height="2" fill="url(#cg93)"/><rect x="1716" y="494" width="766" height="2" fill="url(#cg94)"/><rect x="1716" y="496" width="764" height="2" fill="url(#cg95)"/><rect x="1717" y="498" width="761" height="2" fill="url(#cg96)"/><rect x="1718" y="500" width="758" height="2" fill="url(#cg97)"/><rect x="1719" y="502" width="756" height="2" fill="url(#cg98)"/><rect x="1720" y="504" width="753" height="2" fill="url(#cg99)"/><rect x="1720" y="506" width="751" height="2" fill="url(#cg100)"/><rect x="1721" y="508" width="748" height="2" fill="url(#cg101)"/><rect x="1722" y="510" width="745" height="2" fill="url(#cg102)"/><rect x="1723" y="512" width="742" height="2" fill="url(#cg103)"/><rect x="1724" y="514" width="739" height="2" fill="url(#cg104)"/><rect x="1725" y="516" width="736" height="2" fill="url(#cg105)"/><rect x="1725" y="518" width="734" height="2" fill="url(#cg106)"/><rect x="1726" y="520" width="731" height="2" fill="url(#cg107)"/><rect x="1727" y="522" width="728" height="2" fill="url(#cg108)"/><rect x="1728" y="524" width="725" height="2" fill="url(#cg109)"/><rect x="1729" y="526" width="722" height="2" fill="url(#cg110)"/><rect x="1730" y="528" width="719" height="2" fill="url(#cg111)"/><rect x="1731" y="530" width="716" height="2" fill="url(#cg112)"/><rect x="1731" y="532" width="714" height="2" fill="url(#cg113)"/><rect x="1732" y="534" width="711" height="2" fill="url(#cg114)"/><rect x="1733" y="536" width="708" height="2" fill="url(#cg115)"/><rect x="1734" y="538" width="706" height="2" fill="url(#cg116)"/><rect x="1735" y="540" width="703" height="2" fill="url(#cg117)"/><rect x="1736" y="542" width="700" height="2" fill="url(#cg118)"/><rect x="1737" y="544" width="697" height="2" fill="url(#cg119)"/><rect x="1738" y="546" width="694" height="2" fill="url(#cg120)"/><rect x="1739" y="548" width="691" height="2" fill="url(#cg121)"/><rect x="1740" y="550" width="688" height="2" fill="url(#cg122)"/><rect x="1741" y="552" width="685" height="2" fill="url(#cg123)"/><rect x="1742" y="554" width="682" height="2" fill="url(#cg124)"/><rect x="1743" y="556" width="679" height="2" fill="url(#cg125)"/><rect x="1743" y="558" width="677" height="2" fill="url(#cg126)"/><rect x="1744" y="560" width="674" height="2" fill="url(#cg127)"/><rect x="1745" y="562" width="671" height="2" fill="url(#cg128)"/><rect x="1746" y="564" width="668" height="2" fill="url(#cg129)"/><rect x="1747" y="566" width="665" height="2" fill="url(#cg130)"/><rect x="1748" y="568" width="662" height="2" fill="url(#cg131)"/><rect x="1749" y="570" width="659" height="2" fill="url(#cg132)"/><rect x="1750" y="572" width="656" height="2" fill="url(#cg133)"/><rect x="1751" y="574" width="653" height="2" fill="url(#cg134)"/><rect x="1752" y="576" width="651" height="2" fill="url(#cg135)"/><rect x="1753" y="578" width="648" height="2" fill="url(#cg136)"/><rect x="1754" y="580" width="645" height="2" fill="url(#cg137)"/><rect x="1755" y="582" width="642" height="2" fill="url(#cg138)"/><rect x="1756" y="584" width="639" height="2" fill="url(#cg139)"/><rect x="1757" y="586" width="636" height="2" fill="url(#cg140)"/><rect x="1758" y="588" width="633" height="2" fill="url(#cg141)"/><rect x="1760" y="590" width="629" height="2" fill="url(#cg142)"/><rect x="1761" y="592" width="626" height="2" fill="url(#cg143)"/><rect x="1762" y="594" width="623" height="2" fill="url(#cg144)"/><rect x="1763" y="596" width="620" height="2" fill="url(#cg145)"/><rect x="1764" y="598" width="617" height="2" fill="url(#cg146)"/><rect x="1765" y="600" width="614" height="2" fill="url(#cg147)"/><rect x="1766" y="602" width="611" height="2" fill="url(#cg148)"/><rect x="1767" y="604" width="608" height="2" fill="url(#cg149)"/><rect x="1768" y="606" width="605" height="2" fill="url(#cg150)"/><rect x="1769" y="608" width="602" height="2" fill="url(#cg151)"/><rect x="1770" y="610" width="599" height="2" fill="url(#cg152)"/><rect x="1771" y="612" width="597" height="2" fill="url(#cg153)"/><rect x="1773" y="614" width="593" height="2" fill="url(#cg154)"/><rect x="1774" y="616" width="590" height="2" fill="url(#cg155)"/><rect x="1775" y="618" width="587" height="2" fill="url(#cg156)"/><rect x="1776" y="620" width="584" height="2" fill="url(#cg157)"/><rect x="1777" y="622" width="581" height="2" fill="url(#cg158)"/><rect x="1778" y="624" width="578" height="2" fill="url(#cg159)"/><rect x="1779" y="626" width="575" height="2" fill="url(#cg160)"/><rect x="1780" y="628" width="572" height="2" fill="url(#cg161)"/><rect x="1782" y="630" width="568" height="2" fill="url(#cg162)"/><rect x="1783" y="632" width="565" height="2" fill="url(#cg163)"/><rect x="1784" y="634" width="562" height="2" fill="url(#cg164)"/><rect x="1785" y="636" width="559" height="2" fill="url(#cg165)"/><rect x="1786" y="638" width="556" height="2" fill="url(#cg166)"/><rect x="1787" y="640" width="553" height="2" fill="url(#cg167)"/><rect x="1788" y="642" width="550" height="2" fill="url(#cg168)"/><rect x="1790" y="644" width="546" height="2" fill="url(#cg169)"/><rect x="1791" y="646" width="543" height="2" fill="url(#cg170)"/><rect x="1792" y="648" width="541" height="2" fill="url(#cg171)"/><rect x="1793" y="650" width="538" height="2" fill="url(#cg172)"/><rect x="1794" y="652" width="535" height="2" fill="url(#cg173)"/><rect x="1795" y="654" width="532" height="2" fill="url(#cg174)"/><rect x="1797" y="656" width="528" height="2" fill="url(#cg175)"/><rect x="1798" y="658" width="525" height="2" fill="url(#cg176)"/><rect x="1799" y="660" width="522" height="2" fill="url(#cg177)"/><rect x="1800" y="662" width="519" height="2" fill="url(#cg178)"/><rect x="1801" y="664" width="516" height="2" fill="url(#cg179)"/><rect x="1803" y="666" width="512" height="2" fill="url(#cg180)"/><rect x="1804" y="668" width="509" height="2" fill="url(#cg181)"/><rect x="1805" y="670" width="506" height="2" fill="url(#cg182)"/><rect x="1806" y="672" width="503" height="2" fill="url(#cg183)"/><rect x="1807" y="674" width="500" height="2" fill="url(#cg184)"/><rect x="1809" y="676" width="496" height="2" fill="url(#cg185)"/><rect x="1810" y="678" width="493" height="2" fill="url(#cg186)"/><rect x="1811" y="680" width="490" height="2" fill="url(#cg187)"/><rect x="1812" y="682" width="487" height="2" fill="url(#cg188)"/><rect x="1814" y="684" width="483" height="2" fill="url(#cg189)"/><rect x="1815" y="686" width="481" height="2" fill="url(#cg190)"/><rect x="1816" y="688" width="478" height="2" fill="url(#cg191)"/><rect x="1817" y="690" width="475" height="2" fill="url(#cg192)"/><rect x="1818" y="692" width="472" height="2" fill="url(#cg193)"/><rect x="1820" y="694" width="468" height="2" fill="url(#cg194)"/><rect x="1821" y="696" width="465" height="2" fill="url(#cg195)"/><rect x="1822" y="698" width="462" height="2" fill="url(#cg196)"/><rect x="1823" y="700" width="459" height="2" fill="url(#cg197)"/><rect x="1825" y="702" width="455" height="2" fill="url(#cg198)"/><rect x="1826" y="704" width="452" height="2" fill="url(#cg199)"/><rect x="1827" y="706" width="449" height="2" fill="url(#cg200)"/><rect x="1829" y="708" width="445" height="2" fill="url(#cg201)"/><rect x="1830" y="710" width="442" height="2" fill="url(#cg202)"/><rect x="1831" y="712" width="439" height="2" fill="url(#cg203)"/><rect x="1832" y="714" width="436" height="2" fill="url(#cg204)"/><rect x="1834" y="716" width="432" height="2" fill="url(#cg205)"/><rect x="1835" y="718" width="429" height="2" fill="url(#cg206)"/><rect x="1836" y="720" width="426" height="2" fill="url(#cg207)"/><rect x="1838" y="722" width="423" height="2" fill="url(#cg208)"/><rect x="1839" y="724" width="420" height="2" fill="url(#cg209)"/><rect x="1840" y="726" width="417" height="2" fill="url(#cg210)"/><rect x="1842" y="728" width="413" height="2" fill="url(#cg211)"/><rect x="1843" y="730" width="410" height="2" fill="url(#cg212)"/><rect x="1844" y="732" width="407" height="2" fill="url(#cg213)"/><rect x="1846" y="734" width="403" height="2" fill="url(#cg214)"/><rect x="1847" y="736" width="400" height="2" fill="url(#cg215)"/><rect x="1848" y="738" width="397" height="2" fill="url(#cg216)"/><rect x="1850" y="740" width="393" height="2" fill="url(#cg217)"/><rect x="1851" y="742" width="390" height="2" fill="url(#cg218)"/><rect x="1852" y="744" width="387" height="2" fill="url(#cg219)"/><rect x="1854" y="746" width="383" height="2" fill="url(#cg220)"/><rect x="1855" y="748" width="380" height="2" fill="url(#cg221)"/><rect x="1857" y="750" width="376" height="2" fill="url(#cg222)"/><rect x="1858" y="752" width="373" height="2" fill="url(#cg223)"/><rect x="1859" y="754" width="370" height="2" fill="url(#cg224)"/><rect x="1861" y="756" width="366" height="2" fill="url(#cg225)"/><rect x="1862" y="758" width="364" height="2" fill="url(#cg226)"/><rect x="1864" y="760" width="360" height="2" fill="url(#cg227)"/><rect x="1865" y="762" width="357" height="2" fill="url(#cg228)"/><rect x="1867" y="764" width="353" height="2" fill="url(#cg229)"/><rect x="1868" y="766" width="350" height="2" fill="url(#cg230)"/><rect x="1869" y="768" width="347" height="2" fill="url(#cg231)"/><rect x="1871" y="770" width="343" height="2" fill="url(#cg232)"/><rect x="1872" y="772" width="340" height="2" fill="url(#cg233)"/><rect x="1874" y="774" width="336" height="2" fill="url(#cg234)"/><rect x="1875" y="776" width="333" height="2" fill="url(#cg235)"/><rect x="1877" y="778" width="329" height="2" fill="url(#cg236)"/><rect x="1878" y="780" width="326" height="2" fill="url(#cg237)"/><rect x="1880" y="782" width="322" height="2" fill="url(#cg238)"/><rect x="1881" y="784" width="319" height="2" fill="url(#cg239)"/><rect x="1883" y="786" width="315" height="2" fill="url(#cg240)"/><rect x="1884" y="788" width="312" height="2" fill="url(#cg241)"/><rect x="1886" y="790" width="308" height="2" fill="url(#cg242)"/><rect x="1888" y="792" width="304" height="2" fill="url(#cg243)"/><rect x="1889" y="794" width="302" height="2" fill="url(#cg244)"/><rect x="1891" y="796" width="298" height="2" fill="url(#cg245)"/><rect x="1892" y="798" width="295" height="2" fill="url(#cg246)"/><rect x="1894" y="800" width="291" height="2" fill="url(#cg247)"/><rect x="1895" y="802" width="288" height="2" fill="url(#cg248)"/><rect x="1897" y="804" width="284" height="2" fill="url(#cg249)"/><rect x="1899" y="806" width="280" height="2" fill="url(#cg250)"/><rect x="1900" y="808" width="277" height="2" fill="url(#cg251)"/><rect x="1902" y="810" width="273" height="2" fill="url(#cg252)"/><rect x="1904" y="812" width="269" height="2" fill="url(#cg253)"/><rect x="1905" y="814" width="266" height="2" fill="url(#cg254)"/><rect x="1907" y="816" width="262" height="2" fill="url(#cg255)"/><rect x="1909" y="818" width="258" height="2" fill="url(#cg256)"/><rect x="1910" y="820" width="255" height="2" fill="url(#cg257)"/><rect x="1912" y="822" width="251" height="2" fill="url(#cg258)"/><rect x="1914" y="824" width="247" height="2" fill="url(#cg259)"/><rect x="1916" y="826" width="243" height="2" fill="url(#cg260)"/><rect x="1917" y="828" width="240" height="2" fill="url(#cg261)"/><rect x="1919" y="830" width="236" height="2" fill="url(#cg262)"/><rect x="1921" y="832" width="233" height="2" fill="url(#cg263)"/><rect x="1923" y="834" width="229" height="2" fill="url(#cg264)"/><rect x="1925" y="836" width="225" height="2" fill="url(#cg265)"/><rect x="1926" y="838" width="222" height="2" fill="url(#cg266)"/><rect x="1928" y="840" width="218" height="2" fill="url(#cg267)"/><rect x="1930" y="842" width="214" height="2" fill="url(#cg268)"/><rect x="1932" y="844" width="210" height="2" fill="url(#cg269)"/><rect x="1934" y="846" width="206" height="2" fill="url(#cg270)"/><rect x="1936" y="848" width="202" height="2" fill="url(#cg271)"/><rect x="1938" y="850" width="198" height="2" fill="url(#cg272)"/><rect x="1940" y="852" width="194" height="2" fill="url(#cg273)"/><rect x="1942" y="854" width="190" height="2" fill="url(#cg274)"/><rect x="1944" y="856" width="186" height="2" fill="url(#cg275)"/><rect x="1946" y="858" width="182" height="2" fill="url(#cg276)"/><rect x="1949" y="860" width="177" height="2" fill="url(#cg277)"/><rect x="1951" y="862" width="173" height="2" fill="url(#cg278)"/><rect x="1953" y="864" width="169" height="2" fill="url(#cg279)"/><rect x="1955" y="866" width="165" height="2" fill="url(#cg280)"/><rect x="1957" y="868" width="162" height="2" fill="url(#cg281)"/><rect x="1959" y="870" width="158" height="2" fill="url(#cg282)"/><rect x="1962" y="872" width="153" height="2" fill="url(#cg283)"/><rect x="1964" y="874" width="149" height="2" fill="url(#cg284)"/><rect x="1966" y="876" width="145" height="2" fill="url(#cg285)"/><rect x="1969" y="878" width="140" height="2" fill="url(#cg286)"/><rect x="1971" y="880" width="136" height="2" fill="url(#cg287)"/><rect x="1973" y="882" width="132" height="2" fill="url(#cg288)"/><rect x="1976" y="884" width="127" height="2" fill="url(#cg289)"/><rect x="1978" y="886" width="123" height="2" fill="url(#cg290)"/><rect x="1980" y="888" width="119" height="2" fill="url(#cg291)"/><rect x="1983" y="890" width="114" height="2" fill="url(#cg292)"/><rect x="1985" y="892" width="110" height="2" fill="url(#cg293)"/><rect x="1988" y="894" width="105" height="2" fill="url(#cg294)"/><rect x="1990" y="896" width="101" height="2" fill="url(#cg295)"/><rect x="1993" y="898" width="96" height="2" fill="url(#cg296)"/><rect x="1995" y="900" width="92" height="2" fill="url(#cg297)"/><rect x="1997" y="902" width="88" height="2" fill="url(#cg298)"/><rect x="2000" y="904" width="84" height="2" fill="url(#cg299)"/><rect x="2002" y="906" width="80" height="2" fill="url(#cg300)"/><rect x="2005" y="908" width="75" height="2" fill="url(#cg301)"/><rect x="2007" y="910" width="71" height="2" fill="url(#cg302)"/><rect x="2010" y="912" width="66" height="2" fill="url(#cg303)"/><rect x="2012" y="914" width="62" height="2" fill="url(#cg304)"/><rect x="2014" y="916" width="58" height="2" fill="url(#cg305)"/><rect x="2017" y="918" width="53" height="2" fill="url(#cg306)"/><rect x="2019" y="920" width="49" height="2" fill="url(#cg307)"/><rect x="2021" y="922" width="45" height="2" fill="url(#cg308)"/><rect x="2024" y="924" width="40" height="2" fill="url(#cg309)"/><rect x="2026" y="926" width="36" height="2" fill="url(#cg310)"/><rect x="2029" y="928" width="31" height="2" fill="url(#cg311)"/><rect x="2031" y="930" width="27" height="2" fill="url(#cg312)"/><rect x="2034" y="932" width="22" height="2" fill="url(#cg313)"/><rect x="2036" y="934" width="18" height="2" fill="url(#cg314)"/><rect x="2039" y="936" width="13" height="2" fill="url(#cg315)"/><path d="M2049.1 936.8 L2049.1 936.8 L2049.0 936.8 L2049.0 936.7 L2048.9 936.7 L2048.8 936.7 L2048.8 936.8 L2048.7 936.9 L2048.6 936.9 L2048.6 937.0 L2048.4 937.0 L2048.3 936.9 L2048.2 936.9 L2048.1 936.9 L2047.9 936.9 L2047.9 936.9 L2047.8 937.0 L2047.7 937.2 L2047.7 937.3 L2047.6 937.3 L2047.5 937.4 L2047.4 937.4 L2047.3 937.5 L2047.2 937.5 L2047.0 937.5 L2046.8 937.5 L2046.6 937.5 L2046.4 937.4 L2046.1 937.4 L2045.9 937.4 L2045.7 937.4 L2045.5 937.4 L2045.3 937.4 L2045.0 937.4 L2044.8 937.4 L2044.5 937.3 L2044.2 937.2 L2043.9 937.1 L2043.5 936.9 L2043.0 936.7 L2042.4 936.3 L2041.8 935.9 L2041.1 935.5 L2040.3 935.0 L2039.6 934.5 L2038.7 933.9 L2037.8 933.3 L2036.9 932.5 L2035.9 931.8 L2034.8 930.9 L2033.6 930.0 L2032.4 929.0 L2031.0 927.9 L2029.6 926.8 L2028.0 925.6 L2026.5 924.3 L2024.8 922.9 L2023.1 921.4 L2021.2 919.8 L2019.3 918.2 L2017.3 916.5 L2015.2 914.7 L2013.0 912.9 L2010.7 910.9 L2008.3 908.9 L2005.7 906.8 L2002.9 904.5 L2000.1 902.1 L1997.0 899.6 L1993.9 897.0 L1990.6 894.3 L1987.1 891.5 L1983.6 888.5 L1979.9 885.5 L1976.1 882.3 L1972.1 878.9 L1968.0 875.3 L1963.6 871.5 L1959.1 867.5 L1954.5 863.2 L1949.7 858.7 L1944.7 854.0 L1939.6 849.0 L1934.3 843.7 L1928.8 837.8 L1922.8 831.4 L1916.5 824.2 L1909.7 816.2 L1902.5 807.6 L1894.9 798.2 L1887.1 788.2 L1879.0 777.6 L1870.8 766.4 L1862.3 754.6 L1853.6 742.2 L1844.8 729.1 L1835.8 715.4 L1826.6 701.1 L1817.4 686.3 L1808.2 671.2 L1799.0 655.7 L1789.8 640.1 L1780.8 624.3 L1771.8 608.3 L1763.2 592.3 L1754.9 576.3 L1747.1 560.5 L1739.8 544.9 L1732.9 529.6 L1726.5 514.6 L1720.5 500.1 L1714.9 486.1 L1709.7 472.5 L1705.0 459.6 L1700.8 447.4 L1697.1 435.8 L1693.8 425.0 L1691.0 414.8 L1688.6 405.3 L1686.6 396.4 L1685.0 388.1 L1683.7 380.3 L1682.8 373.2 L1682.2 366.6 L1682.0 360.5 L1682.0 354.8 L1682.4 349.5 L1683.0 344.6 L1684.0 340.0 L1685.2 335.8 L1686.7 332.0 L1688.4 328.4 L1690.4 325.2 L1692.6 322.3 L1695.0 319.7 L1697.6 317.5 L1700.4 315.5 L1703.4 313.8 L1706.6 312.3 L1709.8 311.1 L1713.2 310.0 L1716.7 309.2 L1720.3 308.6 L1724.0 308.0 L1727.8 307.6 L1731.7 307.3 L1735.7 307.1 L1739.7 306.9 L1743.8 306.8 L1747.9 306.7 L1751.9 306.6 L1756.0 306.6 L1760.1 306.7 L1764.2 306.7 L1768.3 306.8 L1772.4 306.9 L1776.6 307.0 L1780.9 307.2 L1785.1 307.4 L1789.5 307.6 L1793.9 307.9 L1798.3 308.2 L1802.8 308.5 L1807.4 308.8 L1812.1 309.2 L1816.9 309.6 L1821.7 310.0 L1826.6 310.4 L1831.7 310.8 L1836.8 311.3 L1842.0 311.8 L1847.3 312.3 L1852.7 312.9 L1858.2 313.4 L1863.8 314.0 L1869.5 314.6 L1875.4 315.2 L1881.4 315.9 L1887.5 316.5 L1893.7 317.2 L1900.0 317.9 L1906.5 318.6 L1913.1 319.3 L1919.9 320.1 L1926.7 320.8 L1933.8 321.6 L1940.9 322.4 L1948.3 323.3 L1955.7 324.1 L1963.3 325.0 L1971.1 325.9 L1979.0 326.8 L1987.1 327.7 L1995.3 328.6 L2003.7 329.6 L2012.2 330.6 L2020.8 331.6 L2029.7 332.6 L2038.6 333.6 L2047.7 334.7 L2057.0 335.7 L2066.4 336.8 L2075.9 337.9 L2085.6 339.0 L2095.3 340.1 L2105.3 341.3 L2115.3 342.4 L2125.4 343.6 L2135.6 344.7 L2145.9 345.9 L2156.3 347.1 L2166.8 348.3 L2177.4 349.5 L2187.9 350.8 L2198.5 352.0 L2208.9 353.2 L2219.3 354.4 L2229.5 355.5 L2239.7 356.7 L2249.8 357.9 L2259.8 359.0 L2269.9 360.2 L2280.0 361.3 L2289.9 362.5 L2299.8 363.6 L2309.4 364.7 L2318.8 365.8 L2327.9 366.8 L2336.8 367.9 L2345.6 368.9 L2354.1 369.8 L2362.5 370.8 L2370.6 371.7 L2378.6 372.6 L2386.3 373.5 L2393.8 374.4 L2401.0 375.2 L2408.0 376.0 L2414.7 376.8 L2421.3 377.6 L2427.5 378.3 L2433.6 379.0 L2439.5 379.7 L2445.1 380.3 L2450.6 380.9 L2455.9 381.5 L2461.0 382.1 L2465.8 382.7 L2470.6 383.2 L2475.2 383.7 L2479.7 384.3 L2484.0 384.8 L2488.3 385.3 L2492.5 385.7 L2496.5 386.2 L2500.3 386.6 L2504.1 387.1 L2507.7 387.5 L2511.2 387.9 L2514.6 388.3 L2517.8 388.6 L2520.9 389.0 L2523.9 389.4 L2526.8 389.7 L2529.5 390.0 L2532.1 390.3 L2534.5 390.6 L2536.8 390.8 L2538.9 391.1 L2541.0 391.3 L2542.9 391.5 L2544.7 391.7 L2546.5 391.9 L2548.2 392.1 L2549.8 392.3 L2551.3 392.5 L2552.8 392.7 L2554.1 392.8 L2555.4 393.0 L2556.6 393.1 L2557.7 393.2 L2558.7 393.4 L2559.6 393.5 L2560.5 393.6 L2561.2 393.6 L2562.0 393.7 L2562.7 393.8 L2563.4 393.9 L2564.1 394.0 L2564.8 394.1 L2565.4 394.1 L2566.0 394.2 L2566.6 394.3 L2567.1 394.3 L2567.6 394.4 L2568.2 394.4 L2568.7 394.5 L2569.3 394.6 L2569.8 394.6 L2570.3 394.7 L2570.9 394.8 L2571.4 394.8 L2571.9 394.9 L2572.4 394.9 L2572.9 395.0 L2573.3 395.0 L2573.7 395.1 L2574.0 395.1 L2574.2 395.1 L2574.4 395.2 L2574.6 395.2 L2574.8 395.2 L2575.0 395.2 L2575.1 395.2 L2575.3 395.3 L2575.4 395.3 L2575.5 395.3 L2575.6 395.3 L2575.7 395.3 L2575.8 395.3 L2575.8 395.3 L2575.8 395.3 Z M2327.7 377.2L1859.6 333.4L1932.0 780.5Z" fill="#000" fill-opacity=".4" fill-rule="evenodd"/></g></g><g stroke="#a0a0a0" stroke-width="2" fill="none"><rect x="1679" y="291" width="866.5" height="666"/></g><g stroke="#dcdcdc" stroke-width="1.8"><path d="M1679.0 957V965"/><path d="M1670.5 957.0H1679"/><path d="M1751.2 957V965"/><path d="M1670.5 901.6H1679"/><path d="M1823.3 957V965"/><path d="M1670.5 846.2H1679"/><path d="M1895.5 957V965"/><path d="M1670.5 790.8H1679"/><path d="M1967.6 957V965"/><path d="M1670.5 735.4H1679"/><path d="M2039.8 957V965"/><path d="M1670.5 680.0H1679"/><path d="M2111.9 957V965"/><path d="M1670.5 624.6H1679"/><path d="M2184.1 957V965"/><path d="M1670.5 569.2H1679"/><path d="M2256.2 957V965"/><path d="M1670.5 513.8H1679"/><path d="M2328.3 957V965"/><path d="M1670.5 458.4H1679"/><path d="M2400.5 957V965"/><path d="M1670.5 403.0H1679"/><path d="M2472.7 957V965"/><path d="M1670.5 347.6H1679"/></g><g fill="none" stroke="#fff" stroke-width="2.2"><rect x="1849.1" y="322.0" width="18" height="18"/><rect x="1963.1" y="332.9" width="18" height="18"/><rect x="2000.0" y="338.5" width="18" height="18"/><rect x="2042.5" y="348.0" width="18" height="18"/><rect x="1935.4" y="344.0" width="18" height="18"/><rect x="1881.9" y="354.9" width="18" height="18"/><rect x="1932.0" y="373.5" width="18" height="18"/><rect x="2020.0" y="391.9" width="18" height="18"/><rect x="2005.4" y="400.9" width="18" height="18"/><rect x="1890.9" y="416.1" width="18" height="18"/><rect x="1868.9" y="442.0" width="18" height="18"/><rect x="1876.5" y="484.1" width="18" height="18"/><rect x="1923.1" y="480.5" width="18" height="18"/><rect x="1950.1" y="487.9" width="18" height="18"/><rect x="1998.0" y="512.0" width="18" height="18"/><rect x="1926.0" y="552.1" width="18" height="18"/><rect x="1926.0" y="620.7" width="18" height="18"/><rect x="2083.1" y="473.0" width="18" height="18"/><rect x="2101.7" y="353.1" width="18" height="18"/><rect x="2319.1" y="365.9" width="18" height="18"/><rect x="2210.1" y="394.0" width="18" height="18"/><rect x="2127.0" y="410.5" width="18" height="18"/><rect x="2109.0" y="580.2" width="18" height="18"/><rect x="1923.1" y="771.4" width="18" height="18"/></g><rect x="1954" y="426.9" width="18" height="18" fill="none" stroke="#000" stroke-width="2.6"/><g stroke="#000" stroke-width="1.4"><circle cx="1859.4" cy="329.7" r="5.6" fill="rgb(0, 255, 0)"/><circle cx="1979.6" cy="340.4" r="5.6" fill="rgb(255, 255, 0)"/><circle cx="2012.4" cy="345.5" r="5.6" fill="rgb(236, 200, 30)"/><circle cx="2053.4" cy="353.5" r="5.6" fill="rgb(230, 165, 45)"/><circle cx="1950.5" cy="349.4" r="5.6" fill="rgb(160, 190, 70)"/><circle cx="1891.4" cy="358.7" r="5.6" fill="rgb(75, 145, 75)"/><circle cx="1944.7" cy="377.4" r="5.6" fill="rgb(90, 108, 70)"/><circle cx="2036.7" cy="395.3" r="5.6" fill="rgb(118, 85, 72)"/><circle cx="2018.4" cy="402.5" r="5.6" fill="rgb(198, 152, 135)"/><circle cx="1900.4" cy="421.5" r="5.6" fill="rgb(105, 190, 170)"/><circle cx="1874.6" cy="441.4" r="5.6" fill="rgb(0, 255, 255)"/><circle cx="1880.6" cy="485.6" r="5.6" fill="rgb(8, 133, 161)"/><circle cx="1929.5" cy="482.6" r="5.6" fill="rgb(100, 130, 165)"/><circle cx="1959.6" cy="487.5" r="5.6" fill="rgb(135, 130, 180)"/><circle cx="1990.5" cy="517.5" r="5.6" fill="rgb(95, 65, 110)"/><circle cx="1878.6" cy="544.5" r="5.6" fill="rgb(0, 0, 0)"/><circle cx="1929.5" cy="554.0" r="5.6" fill="rgb(82, 95, 170)"/><circle cx="1928.0" cy="624.2" r="5.6" fill="rgb(60, 65, 155)"/><circle cx="2097.0" cy="472.6" r="5.6" fill="rgb(190, 90, 150)"/><circle cx="2115.6" cy="358.7" r="5.6" fill="rgb(215, 130, 50)"/><circle cx="2325.7" cy="371.8" r="5.6" fill="rgb(255, 0, 0)"/><circle cx="2230.6" cy="395.5" r="5.6" fill="rgb(180, 55, 65)"/><circle cx="2141.5" cy="412.5" r="5.6" fill="rgb(195, 92, 105)"/><circle cx="2123.5" cy="570.6" r="5.6" fill="rgb(255, 0, 255)"/><circle cx="1916.5" cy="771.4" r="5.6" fill="rgb(0, 0, 255)"/><circle cx="1966.6" cy="428.3" r="5.6" fill="#a0a0a0"/></g><rect x="2264" y="719" width="276.5" height="184.5" fill="#343434"/><rect x="2267" y="723" width="269.5" height="177" fill="#9a9a9a"/><defs><linearGradient id="ig0" gradientUnits="userSpaceOnUse" x1="2267" x2="2537"><stop offset="0" stop-color="#b0ff00"/><stop offset="0.8111" stop-color="#fffd00"/><stop offset="1" stop-color="#ffea00"/></linearGradient><linearGradient id="ig1" gradientUnits="userSpaceOnUse" x1="2267" x2="2537"><stop offset="0" stop-color="#b0ff00"/><stop offset="0.8037" stop-color="#fffd00"/><stop offset="1" stop-color="#ffea00"/></linearGradient><linearGradient id="ig2" gradientUnits="userSpaceOnUse" x1="2267" x2="2537"><stop offset="0" stop-color="#b1ff00"/><stop offset="0.7963" stop-color="#fffd00"/><stop offset="1" stop-color="#ffe900"/></linearGradient><linearGradient id="ig3" gradientUnits="userSpaceOnUse" x1="2267" x2="2537"><stop offset="0" stop-color="#b1ff00"/><stop offset="0.7926" stop-color="#fffd00"/><stop offset="1" stop-color="#ffe800"/></linearGradient><linearGradient id="ig4" gradientUnits="userSpaceOnUse" x1="2267" x2="2537"><stop offset="0" stop-color="#b2ff00"/><stop offset="0.7852" stop-color="#fffd00"/><stop offset="1" stop-color="#ffe800"/></linearGradient><linearGradient id="ig5" gradientUnits="userSpaceOnUse" x1="2267" x2="2537"><stop offset="0" stop-color="#b2ff00"/><stop offset="0.7778" stop-color="#fffd00"/><stop offset="1" stop-color="#ffe700"/></linearGradient><linearGradient id="ig6" gradientUnits="userSpaceOnUse" x1="2267" x2="2537"><stop offset="0" stop-color="#b3ff00"/><stop offset="0.7704" stop-color="#fffd00"/><stop offset="1" stop-color="#ffe600"/></linearGradient><linearGradient id="ig7" gradientUnits="userSpaceOnUse" x1="2267" x2="2537"><stop offset="0" stop-color="#b3ff00"/><stop offset="0.763" stop-color="#fffd00"/><stop offset="1" stop-color="#ffe600"/></linearGradient><linearGradient id="ig8" gradientUnits="userSpaceOnUse" x1="2267" x2="2537"><stop offset="0" stop-color="#b4ff00"/><stop offset="0.7556" stop-color="#fffd00"/><stop offset="1" stop-color="#ffe500"/></linearGradient><linearGradient id="ig9" gradientUnits="userSpaceOnUse" x1="2267" x2="2537"><stop offset="0" stop-color="#b5ff00"/><stop offset="0.7481" stop-color="#fffd00"/><stop offset="1" stop-color="#ffe400"/></linearGradient><linearGradient id="ig10" gradientUnits="userSpaceOnUse" x1="2267" x2="2537"><stop offset="0" stop-color="#b5ff01"/><stop offset="0.7444" stop-color="#fffd00"/><stop offset="1" stop-color="#ffe400"/></linearGradient><linearGradient id="ig11" gradientUnits="userSpaceOnUse" x1="2267" x2="2537"><stop offset="0" stop-color="#b6ff01"/><stop offset="0.737" stop-color="#fffd00"/><stop offset="1" stop-color="#ffe300"/></linearGradient><linearGradient id="ig12" gradientUnits="userSpaceOnUse" x1="2267" x2="2537"><stop offset="0" stop-color="#b6ff01"/><stop offset="0.7296" stop-color="#fffd00"/><stop offset="1" stop-color="#ffe200"/></linearGradient><linearGradient id="ig13" gradientUnits="userSpaceOnUse" x1="2267" x2="2537"><stop offset="0" stop-color="#b7ff02"/><stop offset="0.7222" stop-color="#fffd00"/><stop offset="1" stop-color="#ffe200"/></linearGradient><linearGradient id="ig14" gradientUnits="userSpaceOnUse" x1="2267" x2="2537"><stop offset="0" stop-color="#b7ff02"/><stop offset="0.7148" stop-color="#fffd00"/><stop offset="1" stop-color="#ffe100"/></linearGradient><linearGradient id="ig15" gradientUnits="userSpaceOnUse" x1="2267" x2="2537"><stop offset="0" stop-color="#b8ff02"/><stop offset="0.7074" stop-color="#fffd00"/><stop offset="1" stop-color="#ffe000"/></linearGradient><linearGradient id="ig16" gradientUnits="userSpaceOnUse" x1="2267" x2="2537"><stop offset="0" stop-color="#b9ff03"/><stop offset="0.5852" stop-color="#f4ff00"/><stop offset="0.7074" stop-color="#fffc00"/><stop offset="1" stop-color="#ffe000"/></linearGradient><linearGradient id="ig17" gradientUnits="userSpaceOnUse" x1="2267" x2="2537"><stop offset="0" stop-color="#b9ff03"/><stop offset="0.4481" stop-color="#e6ff00"/><stop offset="0.6963" stop-color="#fffd00"/><stop offset="1" stop-color="#ffdf00"/></linearGradient><linearGradient id="ig18" gradientUnits="userSpaceOnUse" x1="2267" x2="2537"><stop offset="0" stop-color="#baff03"/><stop offset="0.3963" stop-color="#e2ff00"/><stop offset="0.6889" stop-color="#fffd00"/><stop offset="1" stop-color="#ffdf00"/></linearGradient><linearGradient id="ig19" gradientUnits="userSpaceOnUse" x1="2267" x2="2537"><stop offset="0" stop-color="#baff03"/><stop offset="0.3778" stop-color="#e0ff00"/><stop offset="0.6815" stop-color="#fffd00"/><stop offset="1" stop-color="#ffde00"/></linearGradient><linearGradient id="ig20" gradientUnits="userSpaceOnUse" x1="2267" x2="2537"><stop offset="0" stop-color="#bbff04"/><stop offset="0.3667" stop-color="#e0ff00"/><stop offset="0.6741" stop-color="#fffd00"/><stop offset="1" stop-color="#ffdd00"/></linearGradient><linearGradient id="ig21" gradientUnits="userSpaceOnUse" x1="2267" x2="2537"><stop offset="0" stop-color="#bcff04"/><stop offset="0.3667" stop-color="#e1ff00"/><stop offset="0.6667" stop-color="#fffd00"/><stop offset="1" stop-color="#ffdd00"/></linearGradient><linearGradient id="ig22" gradientUnits="userSpaceOnUse" x1="2267" x2="2537"><stop offset="0" stop-color="#bcff04"/><stop offset="0.3704" stop-color="#e2ff00"/><stop offset="0.6593" stop-color="#fffd00"/><stop offset="1" stop-color="#ffdc00"/></linearGradient><linearGradient id="ig23" gradientUnits="userSpaceOnUse" x1="2267" x2="2537"><stop offset="0" stop-color="#bdff05"/><stop offset="0.3741" stop-color="#e3ff00"/><stop offset="0.6556" stop-color="#fffd00"/><stop offset="1" stop-color="#ffdb00"/></linearGradient><linearGradient id="ig24" gradientUnits="userSpaceOnUse" x1="2267" x2="2537"><stop offset="0" stop-color="#bdff05"/><stop offset="0.3778" stop-color="#e4ff00"/><stop offset="0.6481" stop-color="#fffd00"/><stop offset="1" stop-color="#ffdb00"/></linearGradient><linearGradient id="ig25" gradientUnits="userSpaceOnUse" x1="2267" x2="2537"><stop offset="0" stop-color="#beff05"/><stop offset="0.3852" stop-color="#e5ff00"/><stop offset="0.6407" stop-color="#fffd00"/><stop offset="1" stop-color="#ffda00"/></linearGradient><linearGradient id="ig26" gradientUnits="userSpaceOnUse" x1="2267" x2="2537"><stop offset="0" stop-color="#bfff06"/><stop offset="0.3963" stop-color="#e7ff00"/><stop offset="0.6333" stop-color="#fffd00"/><stop offset="1" stop-color="#ffd900"/></linearGradient><linearGradient id="ig27" gradientUnits="userSpaceOnUse" x1="2267" x2="2537"><stop offset="0" stop-color="#bfff06"/><stop offset="0.4074" stop-color="#e9ff00"/><stop offset="0.6259" stop-color="#fffd00"/><stop offset="1" stop-color="#ffd900"/></linearGradient><linearGradient id="ig28" gradientUnits="userSpaceOnUse" x1="2267" x2="2537"><stop offset="0" stop-color="#c0ff06"/><stop offset="0.4185" stop-color="#ebff00"/><stop offset="0.6185" stop-color="#fffd00"/><stop offset="1" stop-color="#ffd800"/></linearGradient><linearGradient id="ig29" gradientUnits="userSpaceOnUse" x1="2267" x2="2537"><stop offset="0" stop-color="#c0ff07"/><stop offset="0.4296" stop-color="#edff00"/><stop offset="0.6148" stop-color="#fffd00"/><stop offset="1" stop-color="#ffd700"/></linearGradient><linearGradient id="ig30" gradientUnits="userSpaceOnUse" x1="2267" x2="2537"><stop offset="0" stop-color="#c1ff07"/><stop offset="0.4407" stop-color="#efff00"/><stop offset="0.6074" stop-color="#fffd00"/><stop offset="1" stop-color="#ffd700"/></linearGradient><linearGradient id="ig31" gradientUnits="userSpaceOnUse" x1="2267" x2="2537"><stop offset="0" stop-color="#c2ff07"/><stop offset="0.4519" stop-color="#f1ff00"/><stop offset="0.6" stop-color="#fffd00"/><stop offset="1" stop-color="#ffd600"/></linearGradient><linearGradient id="ig32" gradientUnits="userSpaceOnUse" x1="2267" x2="2537"><stop offset="0" stop-color="#c2ff08"/><stop offset="0.463" stop-color="#f3ff00"/><stop offset="0.5926" stop-color="#fffd00"/><stop offset="1" stop-color="#ffd600"/></linearGradient><linearGradient id="ig33" gradientUnits="userSpaceOnUse" x1="2267" x2="2537"><stop offset="0" stop-color="#c3ff08"/><stop offset="0.4778" stop-color="#f5ff00"/><stop offset="0.5889" stop-color="#fffd00"/><stop offset="1" stop-color="#ffd500"/></linearGradient><linearGradient id="ig34" gradientUnits="userSpaceOnUse" x1="2267" x2="2537"><stop offset="0" stop-color="#c3ff08"/><stop offset="0.4889" stop-color="#f7ff00"/><stop offset="0.5815" stop-color="#fffd00"/><stop offset="1" stop-color="#ffd400"/></linearGradient><linearGradient id="ig35" gradientUnits="userSpaceOnUse" x1="2267" x2="2537"><stop offset="0" stop-color="#c4ff09"/><stop offset="0.5037" stop-color="#f9ff00"/><stop offset="0.5815" stop-color="#fffc00"/><stop offset="1" stop-color="#ffd400"/></linearGradient><linearGradient id="ig36" gradientUnits="userSpaceOnUse" x1="2267" x2="2537"><stop offset="0" stop-color="#c5ff09"/><stop offset="0.5148" stop-color="#fbff00"/><stop offset="0.5889" stop-color="#fffa00"/><stop offset="1" stop-color="#ffd300"/></linearGradient><linearGradient id="ig37" gradientUnits="userSpaceOnUse" x1="2267" x2="2537"><stop offset="0" stop-color="#c5ff09"/><stop offset="0.5296" stop-color="#feff00"/><stop offset="1" stop-color="#ffd200"/></linearGradient><linearGradient id="ig38" gradientUnits="userSpaceOnUse" x1="2267" x2="2537"><stop offset="0" stop-color="#c6ff0a"/><stop offset="0.5407" stop-color="#fffe00"/><stop offset="1" stop-color="#ffd200"/></linearGradient><linearGradient id="ig39" gradientUnits="userSpaceOnUse" x1="2267" x2="2537"><stop offset="0" stop-color="#c7ff0a"/><stop offset="0.5444" stop-color="#fffd00"/><stop offset="1" stop-color="#ffd100"/></linearGradient><linearGradient id="ig40" gradientUnits="userSpaceOnUse" x1="2267" x2="2537"><stop offset="0" stop-color="#c7ff0a"/><stop offset="0.537" stop-color="#fffd00"/><stop offset="1" stop-color="#ffd100"/></linearGradient><linearGradient id="ig41" gradientUnits="userSpaceOnUse" x1="2267" x2="2537"><stop offset="0" stop-color="#c8ff0b"/><stop offset="0.5296" stop-color="#fffd00"/><stop offset="1" stop-color="#ffd000"/></linearGradient><linearGradient id="ig42" gradientUnits="userSpaceOnUse" x1="2267" x2="2537"><stop offset="0" stop-color="#c9ff0b"/><stop offset="0.5222" stop-color="#fffd00"/><stop offset="1" stop-color="#ffcf00"/></linearGradient><linearGradient id="ig43" gradientUnits="userSpaceOnUse" x1="2267" x2="2537"><stop offset="0" stop-color="#c9ff0b"/><stop offset="0.5148" stop-color="#fffd00"/><stop offset="1" stop-color="#ffcf00"/></linearGradient><linearGradient id="ig44" gradientUnits="userSpaceOnUse" x1="2267" x2="2537"><stop offset="0" stop-color="#caff0c"/><stop offset="0.5074" stop-color="#fffd00"/><stop offset="1" stop-color="#ffce00"/></linearGradient><linearGradient id="ig45" gradientUnits="userSpaceOnUse" x1="2267" x2="2537"><stop offset="0" stop-color="#caff0c"/><stop offset="0.5" stop-color="#fffd01"/><stop offset="1" stop-color="#ffcd00"/></linearGradient><linearGradient id="ig46" gradientUnits="userSpaceOnUse" x1="2267" x2="2537"><stop offset="0" stop-color="#cbff0c"/><stop offset="0.4926" stop-color="#fffd01"/><stop offset="1" stop-color="#ffcd00"/></linearGradient><linearGradient id="ig47" gradientUnits="userSpaceOnUse" x1="2267" x2="2537"><stop offset="0" stop-color="#ccff0d"/><stop offset="0.4889" stop-color="#fffd02"/><stop offset="1" stop-color="#ffcc00"/></linearGradient><linearGradient id="ig48" gradientUnits="userSpaceOnUse" x1="2267" x2="2537"><stop offset="0" stop-color="#ccff0d"/><stop offset="0.4815" stop-color="#fffd02"/><stop offset="0.9889" stop-color="#ffcd00"/><stop offset="1" stop-color="#ffcc00"/></linearGradient><linearGradient id="ig49" gradientUnits="userSpaceOnUse" x1="2267" x2="2537"><stop offset="0" stop-color="#cdff0e"/><stop offset="0.4741" stop-color="#fffd03"/><stop offset="0.9037" stop-color="#ffd300"/><stop offset="1" stop-color="#ffcb00"/></linearGradient><linearGradient id="ig50" gradientUnits="userSpaceOnUse" x1="2267" x2="2537"><stop offset="0" stop-color="#ceff0e"/><stop offset="0.4667" stop-color="#fffd03"/><stop offset="0.8222" stop-color="#ffd900"/><stop offset="1" stop-color="#ffca00"/></linearGradient><linearGradient id="ig51" gradientUnits="userSpaceOnUse" x1="2267" x2="2537"><stop offset="0" stop-color="#ceff0e"/><stop offset="0.4593" stop-color="#fffd04"/><stop offset="0.7963" stop-color="#ffdb00"/><stop offset="1" stop-color="#ffca00"/></linearGradient><linearGradient id="ig52" gradientUnits="userSpaceOnUse" x1="2267" x2="2537"><stop offset="0" stop-color="#cfff0f"/><stop offset="0.4519" stop-color="#fffd04"/><stop offset="0.7852" stop-color="#ffdb00"/><stop offset="1" stop-color="#ffc900"/></linearGradient><linearGradient id="ig53" gradientUnits="userSpaceOnUse" x1="2267" x2="2537"><stop offset="0" stop-color="#d0ff0f"/><stop offset="0.4444" stop-color="#fffd05"/><stop offset="0.7852" stop-color="#ffdb00"/><stop offset="1" stop-color="#ffc900"/></linearGradient><linearGradient id="ig54" gradientUnits="userSpaceOnUse" x1="2267" x2="2537"><stop offset="0" stop-color="#d0ff0f"/><stop offset="0.4407" stop-color="#fffd05"/><stop offset="0.7926" stop-color="#ffd900"/><stop offset="1" stop-color="#ffc800"/></linearGradient><linearGradient id="ig55" gradientUnits="userSpaceOnUse" x1="2267" x2="2537"><stop offset="0" stop-color="#d1ff10"/><stop offset="0.4333" stop-color="#fffd06"/><stop offset="0.8" stop-color="#ffd800"/><stop offset="1" stop-color="#ffc700"/></linearGradient><linearGradient id="ig56" gradientUnits="userSpaceOnUse" x1="2267" x2="2537"><stop offset="0" stop-color="#d2ff10"/><stop offset="0.4259" stop-color="#fffd06"/><stop offset="0.8074" stop-color="#ffd700"/><stop offset="1" stop-color="#ffc700"/></linearGradient><linearGradient id="ig57" gradientUnits="userSpaceOnUse" x1="2267" x2="2537"><stop offset="0" stop-color="#d2ff10"/><stop offset="0.4185" stop-color="#fffd07"/><stop offset="0.8185" stop-color="#ffd500"/><stop offset="1" stop-color="#ffc600"/></linearGradient><linearGradient id="ig58" gradientUnits="userSpaceOnUse" x1="2267" x2="2537"><stop offset="0" stop-color="#d3ff11"/><stop offset="0.4111" stop-color="#fffd07"/><stop offset="0.8296" stop-color="#ffd400"/><stop offset="1" stop-color="#ffc600"/></linearGradient><linearGradient id="ig59" gradientUnits="userSpaceOnUse" x1="2267" x2="2537"><stop offset="0" stop-color="#d4ff11"/><stop offset="0.4037" stop-color="#fffd08"/><stop offset="0.8407" stop-color="#ffd200"/><stop offset="1" stop-color="#ffc500"/></linearGradient><linearGradient id="ig60" gradientUnits="userSpaceOnUse" x1="2267" x2="2537"><stop offset="0" stop-color="#d4ff12"/><stop offset="0.3963" stop-color="#fffd08"/><stop offset="0.8519" stop-color="#ffd000"/><stop offset="1" stop-color="#ffc400"/></linearGradient><linearGradient id="ig61" gradientUnits="userSpaceOnUse" x1="2267" x2="2537"><stop offset="0" stop-color="#d5ff12"/><stop offset="0.3926" stop-color="#fffd09"/><stop offset="0.863" stop-color="#ffcf00"/><stop offset="1" stop-color="#ffc400"/></linearGradient><linearGradient id="ig62" gradientUnits="userSpaceOnUse" x1="2267" x2="2537"><stop offset="0" stop-color="#d6ff12"/><stop offset="0.3852" stop-color="#fffd09"/><stop offset="0.8778" stop-color="#ffcd00"/><stop offset="1" stop-color="#ffc300"/></linearGradient><linearGradient id="ig63" gradientUnits="userSpaceOnUse" x1="2267" x2="2537"><stop offset="0" stop-color="#d7ff13"/><stop offset="0.3778" stop-color="#fffd0a"/><stop offset="0.8778" stop-color="#ffcc00"/><stop offset="1" stop-color="#ffc300"/></linearGradient><linearGradient id="ig64" gradientUnits="userSpaceOnUse" x1="2267" x2="2537"><stop offset="0" stop-color="#d7ff13"/><stop offset="0.3704" stop-color="#fffd0b"/><stop offset="0.8667" stop-color="#ffcd00"/><stop offset="1" stop-color="#ffc200"/></linearGradient><linearGradient id="ig65" gradientUnits="userSpaceOnUse" x1="2267" x2="2537"><stop offset="0" stop-color="#d8ff13"/><stop offset="0.363" stop-color="#fffd0b"/><stop offset="0.8593" stop-color="#ffcd00"/><stop offset="1" stop-color="#ffc100"/></linearGradient><linearGradient id="ig66" gradientUnits="userSpaceOnUse" x1="2267" x2="2537"><stop offset="0" stop-color="#d9ff14"/><stop offset="0.3556" stop-color="#fffd0c"/><stop offset="0.8519" stop-color="#ffcd00"/><stop offset="1" stop-color="#ffc100"/></linearGradient><linearGradient id="ig67" gradientUnits="userSpaceOnUse" x1="2267" x2="2537"><stop offset="0" stop-color="#d9ff14"/><stop offset="0.3481" stop-color="#fffd0c"/><stop offset="0.8444" stop-color="#ffcd00"/><stop offset="1" stop-color="#ffc000"/></linearGradient><linearGradient id="ig68" gradientUnits="userSpaceOnUse" x1="2267" x2="2537"><stop offset="0" stop-color="#daff15"/><stop offset="0.3444" stop-color="#fffd0d"/><stop offset="0.8407" stop-color="#ffcc00"/><stop offset="1" stop-color="#ffc000"/></linearGradient><linearGradient id="ig69" gradientUnits="userSpaceOnUse" x1="2267" x2="2537"><stop offset="0" stop-color="#dbff15"/><stop offset="0.337" stop-color="#fffd0d"/><stop offset="0.8333" stop-color="#ffcc01"/><stop offset="1" stop-color="#ffbf00"/></linearGradient><linearGradient id="ig70" gradientUnits="userSpaceOnUse" x1="2267" x2="2537"><stop offset="0" stop-color="#dbff15"/><stop offset="0.3296" stop-color="#fffd0e"/><stop offset="0.8222" stop-color="#ffcd01"/><stop offset="1" stop-color="#ffbe00"/></linearGradient><linearGradient id="ig71" gradientUnits="userSpaceOnUse" x1="2267" x2="2537"><stop offset="0" stop-color="#dcff16"/><stop offset="0.3222" stop-color="#fffd0e"/><stop offset="0.8148" stop-color="#ffcd02"/><stop offset="1" stop-color="#ffbe00"/></linearGradient><linearGradient id="ig72" gradientUnits="userSpaceOnUse" x1="2267" x2="2537"><stop offset="0" stop-color="#ddff16"/><stop offset="0.3148" stop-color="#fffd0f"/><stop offset="0.8074" stop-color="#ffcd02"/><stop offset="1" stop-color="#ffbd00"/></linearGradient><linearGradient id="ig73" gradientUnits="userSpaceOnUse" x1="2267" x2="2537"><stop offset="0" stop-color="#deff16"/><stop offset="0.3074" stop-color="#fffd0f"/><stop offset="0.8" stop-color="#ffcd03"/><stop offset="1" stop-color="#ffbd00"/></linearGradient><linearGradient id="ig74" gradientUnits="userSpaceOnUse" x1="2267" x2="2537"><stop offset="0" stop-color="#deff17"/><stop offset="0.3" stop-color="#fffd10"/><stop offset="0.7926" stop-color="#ffcd03"/><stop offset="1" stop-color="#ffbc00"/></linearGradient><linearGradient id="ig75" gradientUnits="userSpaceOnUse" x1="2267" x2="2537"><stop offset="0" stop-color="#dfff17"/><stop offset="0.2963" stop-color="#fffd10"/><stop offset="0.7889" stop-color="#ffcc04"/><stop offset="1" stop-color="#ffbc00"/></linearGradient><linearGradient id="ig76" gradientUnits="userSpaceOnUse" x1="2267" x2="2537"><stop offset="0" stop-color="#e0ff18"/><stop offset="0.2889" stop-color="#fffd11"/><stop offset="0.7778" stop-color="#ffcd04"/><stop offset="1" stop-color="#ffbb00"/></linearGradient><linearGradient id="ig77" gradientUnits="userSpaceOnUse" x1="2267" x2="2537"><stop offset="0" stop-color="#e0ff18"/><stop offset="0.2815" stop-color="#fffd12"/><stop offset="0.7704" stop-color="#ffcc05"/><stop offset="1" stop-color="#ffba00"/></linearGradient><linearGradient id="ig78" gradientUnits="userSpaceOnUse" x1="2267" x2="2537"><stop offset="0" stop-color="#e1ff18"/><stop offset="0.2741" stop-color="#fffd12"/><stop offset="0.763" stop-color="#ffcc05"/><stop offset="1" stop-color="#ffba00"/></linearGradient><linearGradient id="ig79" gradientUnits="userSpaceOnUse" x1="2267" x2="2537"><stop offset="0" stop-color="#e2ff19"/><stop offset="0.2667" stop-color="#fffd13"/><stop offset="0.7556" stop-color="#ffcc06"/><stop offset="1" stop-color="#ffb900"/></linearGradient><linearGradient id="ig80" gradientUnits="userSpaceOnUse" x1="2267" x2="2537"><stop offset="0" stop-color="#e3ff19"/><stop offset="0.2593" stop-color="#fffd13"/><stop offset="0.7481" stop-color="#ffcc06"/><stop offset="1" stop-color="#ffb901"/></linearGradient><linearGradient id="ig81" gradientUnits="userSpaceOnUse" x1="2267" x2="2537"><stop offset="0" stop-color="#e3ff1a"/><stop offset="0.2519" stop-color="#fffd14"/><stop offset="0.737" stop-color="#ffcd07"/><stop offset="1" stop-color="#ffb801"/></linearGradient><linearGradient id="ig82" gradientUnits="userSpaceOnUse" x1="2267" x2="2537"><stop offset="0" stop-color="#e4ff1a"/><stop offset="0.2481" stop-color="#fffd14"/><stop offset="0.7333" stop-color="#ffcc07"/><stop offset="1" stop-color="#ffb801"/></linearGradient><linearGradient id="ig83" gradientUnits="userSpaceOnUse" x1="2267" x2="2537"><stop offset="0" stop-color="#e5ff1a"/><stop offset="0.2407" stop-color="#fffd15"/><stop offset="0.7259" stop-color="#ffcc07"/><stop offset="1" stop-color="#ffb701"/></linearGradient><linearGradient id="ig84" gradientUnits="userSpaceOnUse" x1="2267" x2="2537"><stop offset="0" stop-color="#e6ff1b"/><stop offset="0.2333" stop-color="#fffd15"/><stop offset="0.7185" stop-color="#ffcc08"/><stop offset="1" stop-color="#ffb602"/></linearGradient><linearGradient id="ig85" gradientUnits="userSpaceOnUse" x1="2267" x2="2537"><stop offset="0" stop-color="#e6ff1b"/><stop offset="0.2259" stop-color="#fffd16"/><stop offset="0.7111" stop-color="#ffcc08"/><stop offset="1" stop-color="#ffb602"/></linearGradient><linearGradient id="ig86" gradientUnits="userSpaceOnUse" x1="2267" x2="2537"><stop offset="0" stop-color="#e7ff1c"/><stop offset="0.2222" stop-color="#fffd16"/><stop offset="0.7074" stop-color="#ffcc09"/><stop offset="1" stop-color="#ffb502"/></linearGradient><clipPath id="ins"><rect x="2269" y="725" width="266" height="173"/></clipPath></defs><g clip-path="url(#ins)"><rect x="2267" y="725" width="270" height="2" fill="url(#ig0)"/><rect x="2267" y="727" width="270" height="2" fill="url(#ig1)"/><rect x="2267" y="729" width="270" height="2" fill="url(#ig2)"/><rect x="2267" y="731" width="270" height="2" fill="url(#ig3)"/><rect x="2267" y="733" width="270" height="2" fill="url(#ig4)"/><rect x="2267" y="735" width="270" height="2" fill="url(#ig5)"/><rect x="2267" y="737" width="270" height="2" fill="url(#ig6)"/><rect x="2267" y="739" width="270" height="2" fill="url(#ig7)"/><rect x="2267" y="741" width="270" height="2" fill="url(#ig8)"/><rect x="2267" y="743" width="270" height="2" fill="url(#ig9)"/><rect x="2267" y="745" width="270" height="2" fill="url(#ig10)"/><rect x="2267" y="747" width="270" height="2" fill="url(#ig11)"/><rect x="2267" y="749" width="270" height="2" fill="url(#ig12)"/><rect x="2267" y="751" width="270" height="2" fill="url(#ig13)"/><rect x="2267" y="753" width="270" height="2" fill="url(#ig14)"/><rect x="2267" y="755" width="270" height="2" fill="url(#ig15)"/><rect x="2267" y="757" width="270" height="2" fill="url(#ig16)"/><rect x="2267" y="759" width="270" height="2" fill="url(#ig17)"/><rect x="2267" y="761" width="270" height="2" fill="url(#ig18)"/><rect x="2267" y="763" width="270" height="2" fill="url(#ig19)"/><rect x="2267" y="765" width="270" height="2" fill="url(#ig20)"/><rect x="2267" y="767" width="270" height="2" fill="url(#ig21)"/><rect x="2267" y="769" width="270" height="2" fill="url(#ig22)"/><rect x="2267" y="771" width="270" height="2" fill="url(#ig23)"/><rect x="2267" y="773" width="270" height="2" fill="url(#ig24)"/><rect x="2267" y="775" width="270" height="2" fill="url(#ig25)"/><rect x="2267" y="777" width="270" height="2" fill="url(#ig26)"/><rect x="2267" y="779" width="270" height="2" fill="url(#ig27)"/><rect x="2267" y="781" width="270" height="2" fill="url(#ig28)"/><rect x="2267" y="783" width="270" height="2" fill="url(#ig29)"/><rect x="2267" y="785" width="270" height="2" fill="url(#ig30)"/><rect x="2267" y="787" width="270" height="2" fill="url(#ig31)"/><rect x="2267" y="789" width="270" height="2" fill="url(#ig32)"/><rect x="2267" y="791" width="270" height="2" fill="url(#ig33)"/><rect x="2267" y="793" width="270" height="2" fill="url(#ig34)"/><rect x="2267" y="795" width="270" height="2" fill="url(#ig35)"/><rect x="2267" y="797" width="270" height="2" fill="url(#ig36)"/><rect x="2267" y="799" width="270" height="2" fill="url(#ig37)"/><rect x="2267" y="801" width="270" height="2" fill="url(#ig38)"/><rect x="2267" y="803" width="270" height="2" fill="url(#ig39)"/><rect x="2267" y="805" width="270" height="2" fill="url(#ig40)"/><rect x="2267" y="807" width="270" height="2" fill="url(#ig41)"/><rect x="2267" y="809" width="270" height="2" fill="url(#ig42)"/><rect x="2267" y="811" width="270" height="2" fill="url(#ig43)"/><rect x="2267" y="813" width="270" height="2" fill="url(#ig44)"/><rect x="2267" y="815" width="270" height="2" fill="url(#ig45)"/><rect x="2267" y="817" width="270" height="2" fill="url(#ig46)"/><rect x="2267" y="819" width="270" height="2" fill="url(#ig47)"/><rect x="2267" y="821" width="270" height="2" fill="url(#ig48)"/><rect x="2267" y="823" width="270" height="2" fill="url(#ig49)"/><rect x="2267" y="825" width="270" height="2" fill="url(#ig50)"/><rect x="2267" y="827" width="270" height="2" fill="url(#ig51)"/><rect x="2267" y="829" width="270" height="2" fill="url(#ig52)"/><rect x="2267" y="831" width="270" height="2" fill="url(#ig53)"/><rect x="2267" y="833" width="270" height="2" fill="url(#ig54)"/><rect x="2267" y="835" width="270" height="2" fill="url(#ig55)"/><rect x="2267" y="837" width="270" height="2" fill="url(#ig56)"/><rect x="2267" y="839" width="270" height="2" fill="url(#ig57)"/><rect x="2267" y="841" width="270" height="2" fill="url(#ig58)"/><rect x="2267" y="843" width="270" height="2" fill="url(#ig59)"/><rect x="2267" y="845" width="270" height="2" fill="url(#ig60)"/><rect x="2267" y="847" width="270" height="2" fill="url(#ig61)"/><rect x="2267" y="849" width="270" height="2" fill="url(#ig62)"/><rect x="2267" y="851" width="270" height="2" fill="url(#ig63)"/><rect x="2267" y="853" width="270" height="2" fill="url(#ig64)"/><rect x="2267" y="855" width="270" height="2" fill="url(#ig65)"/><rect x="2267" y="857" width="270" height="2" fill="url(#ig66)"/><rect x="2267" y="859" width="270" height="2" fill="url(#ig67)"/><rect x="2267" y="861" width="270" height="2" fill="url(#ig68)"/><rect x="2267" y="863" width="270" height="2" fill="url(#ig69)"/><rect x="2267" y="865" width="270" height="2" fill="url(#ig70)"/><rect x="2267" y="867" width="270" height="2" fill="url(#ig71)"/><rect x="2267" y="869" width="270" height="2" fill="url(#ig72)"/><rect x="2267" y="871" width="270" height="2" fill="url(#ig73)"/><rect x="2267" y="873" width="270" height="2" fill="url(#ig74)"/><rect x="2267" y="875" width="270" height="2" fill="url(#ig75)"/><rect x="2267" y="877" width="270" height="2" fill="url(#ig76)"/><rect x="2267" y="879" width="270" height="2" fill="url(#ig77)"/><rect x="2267" y="881" width="270" height="2" fill="url(#ig78)"/><rect x="2267" y="883" width="270" height="2" fill="url(#ig79)"/><rect x="2267" y="885" width="270" height="2" fill="url(#ig80)"/><rect x="2267" y="887" width="270" height="2" fill="url(#ig81)"/><rect x="2267" y="889" width="270" height="2" fill="url(#ig82)"/><rect x="2267" y="891" width="270" height="2" fill="url(#ig83)"/><rect x="2267" y="893" width="270" height="2" fill="url(#ig84)"/><rect x="2267" y="895" width="270" height="2" fill="url(#ig85)"/><rect x="2267" y="897" width="270" height="1" fill="url(#ig86)"/><path d="M2264 720L2264 740.3L2540 883.0L2540 720Z" fill="#000" fill-opacity=".4"/></g><rect x="2392.3" y="801.8" width="18" height="18" fill="none" stroke="#fff" stroke-width="2"/><circle cx="2450.7" cy="807.1" r="5.8" fill="#ffff00" stroke="#000" stroke-width="1.5"/><rect x="2199" y="913" width="341.5" height="37" fill="#323232"/></svg>
<div class="t" style="left:2200.00px;top:920.20px;font-size:25.5px;color:#f4f4f4;transform:scaleX(1.0450);">RGB Triplet: 255, 255, 0</div>
<div class="t" style="left:1673.89px;top:968.90px;font-size:20px;color:#cfcfcf;transform:scaleX(0.9615);">0</div>
<div class="t" style="left:1658.68px;top:947.00px;font-size:20px;color:#cfcfcf;transform:scaleX(0.9615);">0</div>
<div class="t" style="left:1732.70px;top:968.90px;font-size:20px;color:#cfcfcf;transform:scaleX(0.9615);">0.05</div>
<div class="t" style="left:1632.00px;top:891.60px;font-size:20px;color:#cfcfcf;transform:scaleX(0.9615);">0.05</div>
<div class="t" style="left:1810.26px;top:968.90px;font-size:20px;color:#cfcfcf;transform:scaleX(0.9615);">0.1</div>
<div class="t" style="left:1642.82px;top:836.20px;font-size:20px;color:#cfcfcf;transform:scaleX(0.9615);">0.1</div>
<div class="t" style="left:1877.00px;top:968.90px;font-size:20px;color:#cfcfcf;transform:scaleX(0.9615);">0.15</div>
<div class="t" style="left:1632.00px;top:780.80px;font-size:20px;color:#cfcfcf;transform:scaleX(0.9615);">0.15</div>
<div class="t" style="left:1954.56px;top:968.90px;font-size:20px;color:#cfcfcf;transform:scaleX(0.9615);">0.2</div>
<div class="t" style="left:1642.82px;top:725.40px;font-size:20px;color:#cfcfcf;transform:scaleX(0.9615);">0.2</div>
<div class="t" style="left:2021.30px;top:968.90px;font-size:20px;color:#cfcfcf;transform:scaleX(0.9615);">0.25</div>
<div class="t" style="left:1632.00px;top:670.00px;font-size:20px;color:#cfcfcf;transform:scaleX(0.9615);">0.25</div>
<div class="t" style="left:2098.86px;top:968.90px;font-size:20px;color:#cfcfcf;transform:scaleX(0.9615);">0.3</div>
<div class="t" style="left:1642.82px;top:614.60px;font-size:20px;color:#cfcfcf;transform:scaleX(0.9615);">0.3</div>
<div class="t" style="left:2165.60px;top:968.90px;font-size:20px;color:#cfcfcf;transform:scaleX(0.9615);">0.35</div>
<div class="t" style="left:1632.00px;top:559.20px;font-size:20px;color:#cfcfcf;transform:scaleX(0.9615);">0.35</div>
<div class="t" style="left:2243.16px;top:968.90px;font-size:20px;color:#cfcfcf;transform:scaleX(0.9615);">0.4</div>
<div class="t" style="left:1642.82px;top:503.80px;font-size:20px;color:#cfcfcf;transform:scaleX(0.9615);">0.4</div>
<div class="t" style="left:2309.90px;top:968.90px;font-size:20px;color:#cfcfcf;transform:scaleX(0.9615);">0.45</div>
<div class="t" style="left:1632.00px;top:448.40px;font-size:20px;color:#cfcfcf;transform:scaleX(0.9615);">0.45</div>
<div class="t" style="left:2387.46px;top:968.90px;font-size:20px;color:#cfcfcf;transform:scaleX(0.9615);">0.5</div>
<div class="t" style="left:1642.82px;top:393.00px;font-size:20px;color:#cfcfcf;transform:scaleX(0.9615);">0.5</div>
<div class="t" style="left:2454.20px;top:968.90px;font-size:20px;color:#cfcfcf;transform:scaleX(0.9615);">0.55</div>
<div class="t" style="left:1632.00px;top:337.60px;font-size:20px;color:#cfcfcf;transform:scaleX(0.9615);">0.55</div>
<svg style="left:0;top:0" width="2560" height="1528" viewBox="0 0 2560 1528"><g fill="none" stroke-linejoin="miter" stroke-linecap="butt"><path d="M2187 1489.7L2227.300 1485L2225.200 1458.800L2175.600 1447.600L2177.600 1494.900L2208 1511.100L2263.400 1493L2232 1487.800" stroke="#f6f6f6" stroke-opacity=".7" stroke-width="7.4" stroke-linejoin="round"/><path d="M2187 1489.7L2227.300 1485L2225.200 1458.800L2175.600 1447.600L2177.600 1494.900L2208 1511.100L2263.400 1493L2232 1487.800" stroke="#962830" stroke-opacity=".8" stroke-width="4"/></g><path d="M2188 1465.500L2193.500 1461.200L2204.200 1475.500L2230.500 1444L2233.300 1445.200L2204.500 1486.300Z" fill="#363636" fill-opacity=".88" stroke="#f4f4f4" stroke-opacity=".6" stroke-width="1.6"/></svg>
<div class="t" style="left:2234.80px;top:1455.20px;font-size:33.5px;color:rgba(128,26,34,.9);font-weight:700;transform:scaleX(1.0140);text-shadow:0 0 1.6px rgba(250,250,250,.85),0 0 1.6px rgba(250,250,250,.85),0 0 1.6px rgba(250,250,250,.85),0 0 2px rgba(250,250,250,.7),0 2.500px 2.500px rgba(0,0,0,.22);">NOTEBOOK</div>
<div class="t" style="left:2434.50px;top:1455.20px;font-size:33.5px;color:rgba(44,44,44,.88);transform:scaleX(0.9893);-webkit-text-stroke:.7px rgba(44,44,44,.88);text-shadow:0 0 1.6px rgba(250,250,250,.85),0 0 1.6px rgba(250,250,250,.85),0 0 1.6px rgba(250,250,250,.85),0 0 2px rgba(250,250,250,.7),0 2.500px 2.500px rgba(0,0,0,.22);">CHECK</div>
<div style="left:2552.5px;top:86px;width:7.5px;height:1442px;background:linear-gradient(90deg,rgba(18,18,18,0),rgba(18,18,18,.55) 45%,rgba(18,18,18,.95) 75%)"></div>
</div></body></html>
